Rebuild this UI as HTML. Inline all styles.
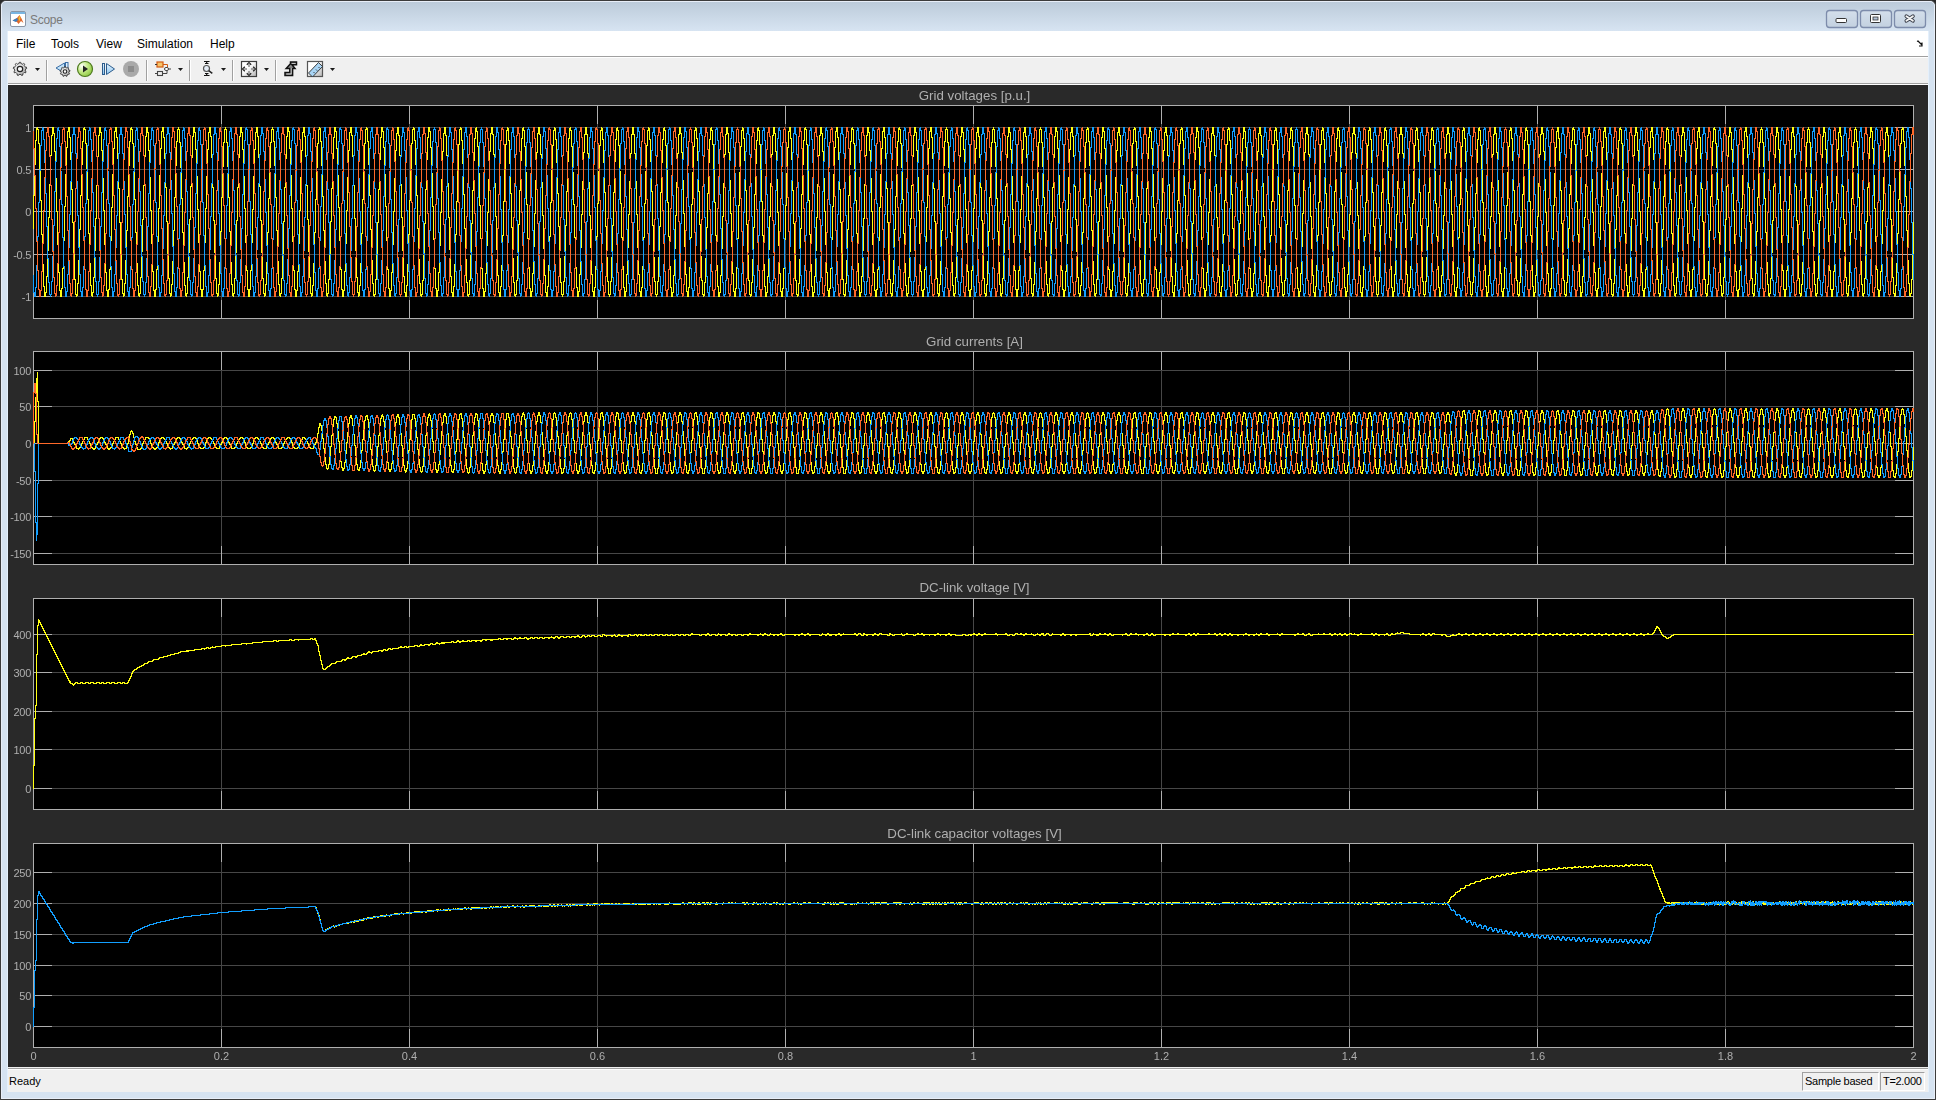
<!DOCTYPE html>
<html><head><meta charset="utf-8"><style>
*{margin:0;padding:0;box-sizing:border-box}
body{width:1936px;height:1100px;overflow:hidden;position:relative;background:#2a2a2a;font-family:"Liberation Sans",sans-serif}
.abs{position:absolute}
.ttl{will-change:transform;position:absolute;left:34px;width:1881px;text-align:center;font-size:13.3px;color:#afafaf;line-height:16px;height:16px}
.yt{will-change:transform;position:absolute;left:0;width:31px;text-align:right;font-size:11px;color:#afafaf;line-height:14px;letter-spacing:-0.3px}
.xt{will-change:transform;position:absolute;top:1049px;width:61px;text-align:center;font-size:11px;color:#afafaf;line-height:14px}
.menu{position:absolute;top:37px;font-size:12px;line-height:15px;color:#000}
svg{position:absolute;left:0;top:0}
</style></head><body>
<div class="abs" style="left:0;top:0;width:1936px;height:1100px;border:1px solid #3c3c3c;border-radius:6px 6px 0 0;background:#d6e3f1"></div>
<div class="abs" style="left:1px;top:1px;width:1934px;height:1098px;border:1px solid #e8eef8;border-radius:5px 5px 0 0"></div>
<div class="abs" style="left:2px;top:2px;width:1932px;height:29px;border-radius:4px 4px 0 0;background:linear-gradient(#bccbda,#d7e4f2)"></div>
<div class="abs" style="left:7px;top:31px;width:1922px;height:1061px;background:#e4f0fc"></div>
<div class="abs" style="left:8px;top:31px;width:1920px;height:25px;background:#fff"></div>
<div class="abs" style="left:8px;top:56px;width:1920px;height:1px;background:#a0a0a0"></div>
<div class="abs" style="left:8px;top:57px;width:1920px;height:26px;background:#f0f0f0;border-top:1px solid #fff"></div>
<div class="abs" style="left:8px;top:83px;width:1920px;height:1px;background:#a0a0a0"></div>
<div class="abs" style="left:8px;top:84px;width:1920px;height:1px;background:#ffffff"></div>
<div class="abs" style="left:8px;top:85px;width:1920px;height:982px;background:#292929"></div>
<div class="abs" style="left:8px;top:1067px;width:1920px;height:1px;background:#f0f0f0"></div>
<div class="abs" style="left:8px;top:1068px;width:1920px;height:1px;background:#a0a0a0"></div>
<div class="abs" style="left:8px;top:1069px;width:1920px;height:1px;background:#fff"></div>
<div class="abs" style="left:8px;top:1070px;width:1920px;height:22px;background:#f0f0f0"></div>
<div class="abs" style="left:30px;top:13px;font-size:12px;color:#7a7a7a;line-height:15px;letter-spacing:-0.3px">Scope</div>
<div class="menu" style="left:16px">File</div>
<div class="menu" style="left:51px">Tools</div>
<div class="menu" style="left:96px">View</div>
<div class="menu" style="left:137px">Simulation</div>
<div class="menu" style="left:210px">Help</div>
<div class="abs" style="left:9px;top:1074px;font-size:11px;line-height:14px">Ready</div>
<div class="abs" style="left:1802px;top:1072px;width:77px;height:19px;border-top:1px solid #a0a0a0;border-left:1px solid #a0a0a0;border-bottom:1px solid #fff;border-right:1px solid #fff;font-size:11px;line-height:16px;padding-left:2px;letter-spacing:-0.25px">Sample based</div>
<div class="abs" style="left:1880px;top:1072px;width:45px;height:19px;border-top:1px solid #a0a0a0;border-left:1px solid #a0a0a0;border-bottom:1px solid #fff;border-right:1px solid #fff;font-size:11px;line-height:16px;padding-left:2px;letter-spacing:-0.3px">T=2.000</div>
<svg width="1936" height="100" style="position:absolute;left:0;top:0"><defs><linearGradient id="gg" x1="0" y1="0" x2="1" y2="1"><stop offset="0" stop-color="#ffffff"/><stop offset="0.5" stop-color="#d8d8d8"/><stop offset="1" stop-color="#9a9a9a"/></linearGradient><radialGradient id="pg" cx="0.3" cy="0.3" r="0.8"><stop offset="0" stop-color="#ffffff"/><stop offset="0.45" stop-color="#c6eb8a"/><stop offset="1" stop-color="#8cc63f"/></radialGradient><linearGradient id="bg1" x1="0" y1="0" x2="0" y2="1"><stop offset="0" stop-color="#e6f4ff"/><stop offset="1" stop-color="#8cc4ee"/></linearGradient><linearGradient id="wg" x1="0" y1="0" x2="1" y2="1"><stop offset="0.4" stop-color="#ffffff"/><stop offset="1" stop-color="#b4b4b4"/></linearGradient></defs><path d="M18.12 63.83 L19.16 63.56 L19.25 62.34 L20.75 62.34 L20.84 63.56 L21.89 63.83 L22.85 64.30 L23.71 63.42 L24.85 64.38 L24.14 65.38 L24.77 66.25 L25.21 67.23 L26.43 67.11 L26.69 68.58 L25.50 68.88 L25.42 69.96 L25.13 70.99 L26.14 71.68 L25.39 72.98 L24.29 72.45 L23.53 73.22 L22.65 73.82 L22.98 75.00 L21.58 75.51 L21.07 74.40 L19.99 74.50 L18.93 74.40 L18.42 75.51 L17.02 75.00 L17.35 73.82 L16.46 73.21 L15.71 72.45 L14.61 72.98 L13.86 71.68 L14.87 70.99 L14.58 69.95 L14.50 68.88 L13.31 68.58 L13.57 67.11 L14.79 67.23 L15.24 66.25 L15.86 65.38 L15.15 64.38 L16.29 63.42 L17.15 64.30Z" fill="url(#gg)" stroke="#333" stroke-width="0.9" stroke-linejoin="round"/><circle cx="20" cy="69" r="2.7" fill="#fafafa" stroke="#222" stroke-width="1.2"/><path d="M35 68h5l-2.5 3z" fill="#1a1a1a"/><path d="M178 68h5l-2.5 3z" fill="#1a1a1a"/><path d="M221 68h5l-2.5 3z" fill="#1a1a1a"/><path d="M264 68h5l-2.5 3z" fill="#1a1a1a"/><path d="M330 68h5l-2.5 3z" fill="#1a1a1a"/><rect x="46" y="60" width="1" height="21" fill="#a0a0a0"/><rect x="47" y="60" width="1" height="21" fill="#ffffff"/><rect x="146" y="60" width="1" height="21" fill="#a0a0a0"/><rect x="147" y="60" width="1" height="21" fill="#ffffff"/><rect x="189" y="60" width="1" height="21" fill="#a0a0a0"/><rect x="190" y="60" width="1" height="21" fill="#ffffff"/><rect x="232" y="60" width="1" height="21" fill="#a0a0a0"/><rect x="233" y="60" width="1" height="21" fill="#ffffff"/><rect x="275" y="60" width="1" height="21" fill="#a0a0a0"/><rect x="276" y="60" width="1" height="21" fill="#ffffff"/><path d="M56 68 L64.5 63 L64.5 73 Z" fill="#c4e4fb" stroke="#3a6ea5" stroke-width="1" stroke-linejoin="round"/><rect x="65.5" y="62.5" width="2.5" height="8" fill="#dff0fc" stroke="#3a6ea5" stroke-width="1"/><path d="M63.64 67.74 L64.39 67.55 L64.44 66.53 L65.56 66.53 L65.61 67.55 L66.37 67.74 L67.07 68.08 L67.77 67.34 L68.62 68.05 L68.01 68.87 L68.47 69.50 L68.79 70.21 L69.80 70.09 L69.99 71.19 L69.00 71.42 L68.94 72.20 L68.73 72.95 L69.58 73.50 L69.02 74.47 L68.12 74.01 L67.57 74.57 L66.93 75.01 L67.22 75.98 L66.18 76.36 L65.78 75.42 L65.00 75.50 L64.22 75.42 L63.82 76.36 L62.78 75.98 L63.07 75.01 L62.43 74.56 L61.88 74.01 L60.98 74.47 L60.42 73.50 L61.27 72.95 L61.06 72.19 L61.00 71.42 L60.01 71.19 L60.20 70.09 L61.21 70.21 L61.54 69.50 L61.99 68.87 L61.38 68.05 L62.23 67.34 L62.93 68.08Z" fill="url(#gg)" stroke="#333" stroke-width="0.9" stroke-linejoin="round"/><circle cx="65" cy="71.5" r="1.8" fill="#fafafa" stroke="#222" stroke-width="1.1"/><circle cx="85" cy="69" r="7.5" fill="url(#pg)" stroke="#4d7a1e" stroke-width="1.2"/><path d="M83 65.5 L88 69 L83 72.5Z" fill="#222"/><rect x="102.5" y="63.5" width="2" height="11" fill="url(#bg1)" stroke="#2c5c8c" stroke-width="1"/><path d="M106.5 63.5 L114.5 69 L106.5 74.5Z" fill="url(#bg1)" stroke="#2c5c8c" stroke-width="1"/><circle cx="131" cy="69" r="8" fill="#a9a9a9"/><rect x="128" y="66" width="6" height="6" fill="#8c8c8c"/><rect x="157" y="62" width="6" height="5" fill="#f6c46a" stroke="#d35a12" stroke-width="1.2"/><path d="M155 64.5h2 M163 64.5h4.5v3" stroke="#d35a12" stroke-width="1" fill="none"/><path d="M155 64.5h2" stroke="#333" stroke-width="1"/><rect x="164.5" y="67.5" width="4" height="3" rx="1.5" fill="#fff" stroke="#444" stroke-width="1"/><path d="M168.5 69h2.5" stroke="#444" stroke-width="1"/><rect x="157.5" y="71.5" width="5" height="4" fill="#eee" stroke="#444" stroke-width="1.1"/><path d="M155 73.5h2.5 M162.5 73.5h4.5v-3" stroke="#444" stroke-width="1" fill="none"/><path d="M204 61.5h5.5 M205 63.5h3.5 M206.7 61.5v2 M204 75.5h5.5 M205 73.5h3.5 M206.7 73.5v2" stroke="#111" stroke-width="1.2" fill="none"/><circle cx="206.5" cy="68.5" r="3" fill="#e4ecf6" stroke="#555" stroke-width="1.2"/><path d="M208.7 70.7 L212.3 73.3" stroke="#222" stroke-width="1.5"/><rect x="241.5" y="61.5" width="15" height="15" fill="url(#wg)" stroke="#3c3c3c" stroke-width="1.2"/><path d="M246.8 64.8l2.2-2.2 2.2 2.2 M246.8 73.2l2.2 2.2 2.2-2.2 M244.8 66.8l-2.2 2.2 2.2 2.2 M253.2 66.8l2.2 2.2-2.2 2.2" stroke="#222" stroke-width="1.3" fill="none"/><path d="M249 63.5v3.5 M249 71v3.5 M243.5 69h3.5 M251 69h3.5" stroke="#8a8a8a" stroke-width="1.5"/><path d="M285 75.5 L285 72.5 L289.8 72.5 L289.8 68.5 L286.2 68.5 L290.5 63.8 L290.5 62 L296.5 62 L296.5 64.8 L292 64.8 L295 68.5 L292.6 68.5 L292.6 75.5 Z" fill="#8a8a8a" stroke="#111" stroke-width="1.5" stroke-linejoin="miter"/><path d="M286.5 74h4.7v-6 M292 63.5h3.5" stroke="#d0d0d0" stroke-width="0.8" fill="none"/><rect x="307.5" y="61.5" width="15" height="15" fill="url(#wg)" stroke="#555" stroke-width="1.2"/><path d="M308.5 73 L318.5 62.5 L322.5 66.5 L312.5 77 Z" fill="#a8d4f4" stroke="#2a2a2a" stroke-width="0.9"/><path d="M313.5 72l1.2 1.2 M316 69.5l1.2 1.2 M318.5 67l1.2 1.2" stroke="#333" stroke-width="0.9"/><path d="M1917 41.5 L1918 41 L1922 45 M1922 42.5 L1922 46 L1919 46" stroke="#111" stroke-width="1.2" fill="none"/><rect x="1826.5" y="10.5" width="31" height="17" rx="3" fill="url(#btng)" stroke="#7d8cab" stroke-width="1.3"/><rect x="1860.5" y="10.5" width="31" height="17" rx="3" fill="url(#btng)" stroke="#7d8cab" stroke-width="1.3"/><rect x="1894.5" y="10.5" width="31" height="17" rx="3" fill="url(#btng)" stroke="#7d8cab" stroke-width="1.3"/><rect x="1836" y="18.5" width="10.5" height="4" rx="1" fill="#fff" stroke="#333" stroke-width="1"/><rect x="1870.5" y="14.5" width="10" height="8" rx="1" fill="#fff" stroke="#333" stroke-width="1"/><rect x="1873" y="17" width="5" height="3" fill="#b4c4d8" stroke="#333" stroke-width="0.8"/><path d="M1906.4 16.2 L1912.9 20.8 M1912.9 16.2 L1906.4 20.8" stroke="#3a3f4a" stroke-width="3.8" stroke-linecap="round"/><path d="M1906.4 16.2 L1912.9 20.8 M1912.9 16.2 L1906.4 20.8" stroke="#f4f4f4" stroke-width="1.9" stroke-linecap="round"/><defs><linearGradient id="btng" x1="0" y1="0" x2="0" y2="1"><stop offset="0" stop-color="#d4dfeb"/><stop offset="1" stop-color="#c3d1e0"/></linearGradient></defs><rect x="10.5" y="11.5" width="15" height="15" rx="1.5" fill="#fff" stroke="#8a96a6" stroke-width="1"/><rect x="11" y="12" width="14" height="2" fill="#7ab6e2"/><path d="M12.5 20.5 L17 18 L19.5 15 L21.5 18.5 L23.5 23 L21 21 L18.5 24 L17 22 Z" fill="#e0662a"/><path d="M12.5 20.5 L17 18 L18 20 L16 22 Z" fill="#3b7fc0"/><path d="M19.5 15.5 L20.5 18 L19 22 L18.5 18 Z" fill="#f2c12e"/></svg><svg width="1936" height="1100" viewBox="0 0 1936 1100">
<defs><clipPath id="c1"><rect x="34" y="106" width="1879" height="212"/></clipPath><clipPath id="c2"><rect x="34" y="352" width="1879" height="212"/></clipPath><clipPath id="c3"><rect x="34" y="599" width="1879" height="210"/></clipPath><clipPath id="c4"><rect x="34" y="844" width="1879" height="203"/></clipPath></defs>
<g shape-rendering="crispEdges"><rect x="33" y="105" width="1881" height="214" fill="#000"/><rect x="34" y="127" width="1879" height="1" fill="#474747"/><rect x="34" y="169" width="1879" height="1" fill="#474747"/><rect x="34" y="211" width="1879" height="1" fill="#474747"/><rect x="34" y="254" width="1879" height="1" fill="#474747"/><rect x="34" y="296" width="1879" height="1" fill="#474747"/><rect x="221" y="106" width="1" height="212" fill="#474747"/><rect x="409" y="106" width="1" height="212" fill="#474747"/><rect x="597" y="106" width="1" height="212" fill="#474747"/><rect x="785" y="106" width="1" height="212" fill="#474747"/><rect x="973" y="106" width="1" height="212" fill="#474747"/><rect x="1161" y="106" width="1" height="212" fill="#474747"/><rect x="1349" y="106" width="1" height="212" fill="#474747"/><rect x="1537" y="106" width="1" height="212" fill="#474747"/><rect x="1725" y="106" width="1" height="212" fill="#474747"/><rect x="34" y="127" width="18" height="1" fill="#afafaf"/><rect x="1895" y="127" width="18" height="1" fill="#afafaf"/><rect x="34" y="169" width="18" height="1" fill="#afafaf"/><rect x="1895" y="169" width="18" height="1" fill="#afafaf"/><rect x="34" y="211" width="18" height="1" fill="#afafaf"/><rect x="1895" y="211" width="18" height="1" fill="#afafaf"/><rect x="34" y="254" width="18" height="1" fill="#afafaf"/><rect x="1895" y="254" width="18" height="1" fill="#afafaf"/><rect x="34" y="296" width="18" height="1" fill="#afafaf"/><rect x="1895" y="296" width="18" height="1" fill="#afafaf"/><rect x="221" y="106" width="1" height="18" fill="#afafaf"/><rect x="221" y="300" width="1" height="18" fill="#afafaf"/><rect x="409" y="106" width="1" height="18" fill="#afafaf"/><rect x="409" y="300" width="1" height="18" fill="#afafaf"/><rect x="597" y="106" width="1" height="18" fill="#afafaf"/><rect x="597" y="300" width="1" height="18" fill="#afafaf"/><rect x="785" y="106" width="1" height="18" fill="#afafaf"/><rect x="785" y="300" width="1" height="18" fill="#afafaf"/><rect x="973" y="106" width="1" height="18" fill="#afafaf"/><rect x="973" y="300" width="1" height="18" fill="#afafaf"/><rect x="1161" y="106" width="1" height="18" fill="#afafaf"/><rect x="1161" y="300" width="1" height="18" fill="#afafaf"/><rect x="1349" y="106" width="1" height="18" fill="#afafaf"/><rect x="1349" y="300" width="1" height="18" fill="#afafaf"/><rect x="1537" y="106" width="1" height="18" fill="#afafaf"/><rect x="1537" y="300" width="1" height="18" fill="#afafaf"/><rect x="1725" y="106" width="1" height="18" fill="#afafaf"/><rect x="1725" y="300" width="1" height="18" fill="#afafaf"/><rect x="33" y="105" width="1881" height="1" fill="#afafaf"/><rect x="33" y="318" width="1881" height="1" fill="#afafaf"/><rect x="33" y="105" width="1" height="214" fill="#afafaf"/><rect x="1913" y="105" width="1" height="214" fill="#afafaf"/><rect x="33" y="351" width="1881" height="214" fill="#000"/><rect x="34" y="370" width="1879" height="1" fill="#474747"/><rect x="34" y="406" width="1879" height="1" fill="#474747"/><rect x="34" y="443" width="1879" height="1" fill="#474747"/><rect x="34" y="480" width="1879" height="1" fill="#474747"/><rect x="34" y="516" width="1879" height="1" fill="#474747"/><rect x="34" y="553" width="1879" height="1" fill="#474747"/><rect x="221" y="352" width="1" height="212" fill="#474747"/><rect x="409" y="352" width="1" height="212" fill="#474747"/><rect x="597" y="352" width="1" height="212" fill="#474747"/><rect x="785" y="352" width="1" height="212" fill="#474747"/><rect x="973" y="352" width="1" height="212" fill="#474747"/><rect x="1161" y="352" width="1" height="212" fill="#474747"/><rect x="1349" y="352" width="1" height="212" fill="#474747"/><rect x="1537" y="352" width="1" height="212" fill="#474747"/><rect x="1725" y="352" width="1" height="212" fill="#474747"/><rect x="34" y="370" width="18" height="1" fill="#afafaf"/><rect x="1895" y="370" width="18" height="1" fill="#afafaf"/><rect x="34" y="406" width="18" height="1" fill="#afafaf"/><rect x="1895" y="406" width="18" height="1" fill="#afafaf"/><rect x="34" y="443" width="18" height="1" fill="#afafaf"/><rect x="1895" y="443" width="18" height="1" fill="#afafaf"/><rect x="34" y="480" width="18" height="1" fill="#afafaf"/><rect x="1895" y="480" width="18" height="1" fill="#afafaf"/><rect x="34" y="516" width="18" height="1" fill="#afafaf"/><rect x="1895" y="516" width="18" height="1" fill="#afafaf"/><rect x="34" y="553" width="18" height="1" fill="#afafaf"/><rect x="1895" y="553" width="18" height="1" fill="#afafaf"/><rect x="221" y="352" width="1" height="18" fill="#afafaf"/><rect x="221" y="546" width="1" height="18" fill="#afafaf"/><rect x="409" y="352" width="1" height="18" fill="#afafaf"/><rect x="409" y="546" width="1" height="18" fill="#afafaf"/><rect x="597" y="352" width="1" height="18" fill="#afafaf"/><rect x="597" y="546" width="1" height="18" fill="#afafaf"/><rect x="785" y="352" width="1" height="18" fill="#afafaf"/><rect x="785" y="546" width="1" height="18" fill="#afafaf"/><rect x="973" y="352" width="1" height="18" fill="#afafaf"/><rect x="973" y="546" width="1" height="18" fill="#afafaf"/><rect x="1161" y="352" width="1" height="18" fill="#afafaf"/><rect x="1161" y="546" width="1" height="18" fill="#afafaf"/><rect x="1349" y="352" width="1" height="18" fill="#afafaf"/><rect x="1349" y="546" width="1" height="18" fill="#afafaf"/><rect x="1537" y="352" width="1" height="18" fill="#afafaf"/><rect x="1537" y="546" width="1" height="18" fill="#afafaf"/><rect x="1725" y="352" width="1" height="18" fill="#afafaf"/><rect x="1725" y="546" width="1" height="18" fill="#afafaf"/><rect x="33" y="351" width="1881" height="1" fill="#afafaf"/><rect x="33" y="564" width="1881" height="1" fill="#afafaf"/><rect x="33" y="351" width="1" height="214" fill="#afafaf"/><rect x="1913" y="351" width="1" height="214" fill="#afafaf"/><rect x="33" y="598" width="1881" height="212" fill="#000"/><rect x="34" y="634" width="1879" height="1" fill="#474747"/><rect x="34" y="672" width="1879" height="1" fill="#474747"/><rect x="34" y="711" width="1879" height="1" fill="#474747"/><rect x="34" y="749" width="1879" height="1" fill="#474747"/><rect x="34" y="788" width="1879" height="1" fill="#474747"/><rect x="221" y="599" width="1" height="210" fill="#474747"/><rect x="409" y="599" width="1" height="210" fill="#474747"/><rect x="597" y="599" width="1" height="210" fill="#474747"/><rect x="785" y="599" width="1" height="210" fill="#474747"/><rect x="973" y="599" width="1" height="210" fill="#474747"/><rect x="1161" y="599" width="1" height="210" fill="#474747"/><rect x="1349" y="599" width="1" height="210" fill="#474747"/><rect x="1537" y="599" width="1" height="210" fill="#474747"/><rect x="1725" y="599" width="1" height="210" fill="#474747"/><rect x="34" y="634" width="18" height="1" fill="#afafaf"/><rect x="1895" y="634" width="18" height="1" fill="#afafaf"/><rect x="34" y="672" width="18" height="1" fill="#afafaf"/><rect x="1895" y="672" width="18" height="1" fill="#afafaf"/><rect x="34" y="711" width="18" height="1" fill="#afafaf"/><rect x="1895" y="711" width="18" height="1" fill="#afafaf"/><rect x="34" y="749" width="18" height="1" fill="#afafaf"/><rect x="1895" y="749" width="18" height="1" fill="#afafaf"/><rect x="34" y="788" width="18" height="1" fill="#afafaf"/><rect x="1895" y="788" width="18" height="1" fill="#afafaf"/><rect x="221" y="599" width="1" height="18" fill="#afafaf"/><rect x="221" y="791" width="1" height="18" fill="#afafaf"/><rect x="409" y="599" width="1" height="18" fill="#afafaf"/><rect x="409" y="791" width="1" height="18" fill="#afafaf"/><rect x="597" y="599" width="1" height="18" fill="#afafaf"/><rect x="597" y="791" width="1" height="18" fill="#afafaf"/><rect x="785" y="599" width="1" height="18" fill="#afafaf"/><rect x="785" y="791" width="1" height="18" fill="#afafaf"/><rect x="973" y="599" width="1" height="18" fill="#afafaf"/><rect x="973" y="791" width="1" height="18" fill="#afafaf"/><rect x="1161" y="599" width="1" height="18" fill="#afafaf"/><rect x="1161" y="791" width="1" height="18" fill="#afafaf"/><rect x="1349" y="599" width="1" height="18" fill="#afafaf"/><rect x="1349" y="791" width="1" height="18" fill="#afafaf"/><rect x="1537" y="599" width="1" height="18" fill="#afafaf"/><rect x="1537" y="791" width="1" height="18" fill="#afafaf"/><rect x="1725" y="599" width="1" height="18" fill="#afafaf"/><rect x="1725" y="791" width="1" height="18" fill="#afafaf"/><rect x="33" y="598" width="1881" height="1" fill="#afafaf"/><rect x="33" y="809" width="1881" height="1" fill="#afafaf"/><rect x="33" y="598" width="1" height="212" fill="#afafaf"/><rect x="1913" y="598" width="1" height="212" fill="#afafaf"/><rect x="33" y="843" width="1881" height="205" fill="#000"/><rect x="34" y="872" width="1879" height="1" fill="#474747"/><rect x="34" y="903" width="1879" height="1" fill="#474747"/><rect x="34" y="934" width="1879" height="1" fill="#474747"/><rect x="34" y="965" width="1879" height="1" fill="#474747"/><rect x="34" y="995" width="1879" height="1" fill="#474747"/><rect x="34" y="1026" width="1879" height="1" fill="#474747"/><rect x="221" y="844" width="1" height="203" fill="#474747"/><rect x="409" y="844" width="1" height="203" fill="#474747"/><rect x="597" y="844" width="1" height="203" fill="#474747"/><rect x="785" y="844" width="1" height="203" fill="#474747"/><rect x="973" y="844" width="1" height="203" fill="#474747"/><rect x="1161" y="844" width="1" height="203" fill="#474747"/><rect x="1349" y="844" width="1" height="203" fill="#474747"/><rect x="1537" y="844" width="1" height="203" fill="#474747"/><rect x="1725" y="844" width="1" height="203" fill="#474747"/><rect x="34" y="872" width="18" height="1" fill="#afafaf"/><rect x="1895" y="872" width="18" height="1" fill="#afafaf"/><rect x="34" y="903" width="18" height="1" fill="#afafaf"/><rect x="1895" y="903" width="18" height="1" fill="#afafaf"/><rect x="34" y="934" width="18" height="1" fill="#afafaf"/><rect x="1895" y="934" width="18" height="1" fill="#afafaf"/><rect x="34" y="965" width="18" height="1" fill="#afafaf"/><rect x="1895" y="965" width="18" height="1" fill="#afafaf"/><rect x="34" y="995" width="18" height="1" fill="#afafaf"/><rect x="1895" y="995" width="18" height="1" fill="#afafaf"/><rect x="34" y="1026" width="18" height="1" fill="#afafaf"/><rect x="1895" y="1026" width="18" height="1" fill="#afafaf"/><rect x="221" y="844" width="1" height="18" fill="#afafaf"/><rect x="221" y="1029" width="1" height="18" fill="#afafaf"/><rect x="409" y="844" width="1" height="18" fill="#afafaf"/><rect x="409" y="1029" width="1" height="18" fill="#afafaf"/><rect x="597" y="844" width="1" height="18" fill="#afafaf"/><rect x="597" y="1029" width="1" height="18" fill="#afafaf"/><rect x="785" y="844" width="1" height="18" fill="#afafaf"/><rect x="785" y="1029" width="1" height="18" fill="#afafaf"/><rect x="973" y="844" width="1" height="18" fill="#afafaf"/><rect x="973" y="1029" width="1" height="18" fill="#afafaf"/><rect x="1161" y="844" width="1" height="18" fill="#afafaf"/><rect x="1161" y="1029" width="1" height="18" fill="#afafaf"/><rect x="1349" y="844" width="1" height="18" fill="#afafaf"/><rect x="1349" y="1029" width="1" height="18" fill="#afafaf"/><rect x="1537" y="844" width="1" height="18" fill="#afafaf"/><rect x="1537" y="1029" width="1" height="18" fill="#afafaf"/><rect x="1725" y="844" width="1" height="18" fill="#afafaf"/><rect x="1725" y="1029" width="1" height="18" fill="#afafaf"/><rect x="33" y="843" width="1881" height="1" fill="#afafaf"/><rect x="33" y="1047" width="1881" height="1" fill="#afafaf"/><rect x="33" y="843" width="1" height="205" fill="#afafaf"/><rect x="1913" y="843" width="1" height="205" fill="#afafaf"/></g>
<g fill="none" stroke-width="1" shape-rendering="crispEdges"><path d="M33.5 195v34m1 -65v32m1 -56v25m1 -37v13m1 -14v3m1 -1v15m1 -1v26m1 -1v33m1 -1v35m1 -1v31m1 -1v23m1 -1v11m1 -5v5m1 -21v17m1 -43v27m1 -60v34m1 -67v34m1 -63v30m1 -50v21m1 -29v9m1 -9v7m1 -1v19m1 -1v28m1 -1v34m1 -1v34m1 -1v29m1 -1v19m1 -1v7m1 -9v9m1 -29v21m1 -49v29m1 -63v35m1 -67v33m1 -60v28m1 -44v17m1 -21v5m1 -5v11m1 -1v23m1 -1v31m1 -1v34m1 -1v33m1 -1v26m1 -1v16m1 -1v3m1 -14v13m1 -36v24m1 -55v32m1 -66v35m1 -66v32m1 -55v24m1 -37v14m1 -15v3m1 -1v15m1 -1v26m1 -1v32m1 -1v35m1 -1v31m1 -1v23m1 -1v11m1 -4v5m1 -20v16m1 -43v28m1 -60v33m1 -66v34m1 -63v30m1 -51v22m1 -30v9m1 -9v6m1 -1v19m1 -1v29m1 -1v33m1 -1v35m1 -1v29m1 -1v19m1 -1v7m1 -8v8m1 -28v21m1 -50v30m1 -63v34m1 -67v34m1 -60v27m1 -44v18m1 -22v5m1 -5v11m1 -1v22m1 -1v31m1 -1v35m1 -1v32m1 -1v27m1 -1v15m1 -1v4m1 -14v13m1 -36v24m1 -54v31m1 -65v35m1 -66v32m1 -56v25m1 -38v14m1 -15v3m1 -1v15m1 -1v25m1 -1v33m1 -1v34m1 -1v32m1 -1v23m1 -1v11m1 -3v4m1 -20v17m1 -43v27m1 -59v33m1 -67v35m1 -64v30m1 -50v21m1 -30v10m1 -10v6m1 -1v19m1 -1v28m1 -1v34m1 -1v34m1 -1v29m1 -1v20m1 -1v7m1 -8v8m1 -28v21m1 -49v29m1 -62v34m1 -67v34m1 -61v28m1 -45v18m1 -22v5m1 -5v11m1 -1v22m1 -1v30m1 -1v35m1 -1v33m1 -1v26m1 -1v16m1 -1v4m1 -13v12m1 -35v24m1 -55v32m1 -65v34m1 -66v33m1 -57v25m1 -37v13m1 -15v3m1 -1v14m1 -1v26m1 -1v32m1 -1v35m1 -1v31m1 -1v24m1 -1v11m1 -3v4m1 -20v17m1 -42v26m1 -59v34m1 -67v34m1 -63v30m1 -51v22m1 -31v10m1 -10v6m1 -1v18m1 -1v28m1 -1v34m1 -1v34m1 -1v30m1 -1v19m1 -1v8m1 -8v8m1 -27v20m1 -48v29m1 -63v35m1 -67v33m1 -60v28m1 -45v18m1 -23v6m1 -6v10m1 -1v22m1 -1v31m1 -1v34m1 -1v33m1 -1v27m1 -1v16m1 -1v4m1 -13v12m1 -34v23m1 -54v32m1 -66v35m1 -66v32m1 -56v25m1 -38v14m1 -16v3m1 -1v14m1 -1v25m1 -1v32m1 -1v35m1 -1v32m1 -1v23m1 -1v12m1 -3v4m1 -19v16m1 -42v27m1 -59v33m1 -66v34m1 -64v31m1 -52v22m1 -31v10m1 -10v6m1 -1v18m1 -1v28m1 -1v33m1 -1v35m1 -1v29m1 -1v20m1 -1v8m1 -8v8m1 -27v20m1 -48v29m1 -62v34m1 -67v34m1 -61v28m1 -45v18m1 -23v6m1 -6v10m1 -1v22m1 -1v30m1 -1v35m1 -1v33m1 -1v27m1 -1v16m1 -1v4m1 -13v12m1 -34v23m1 -53v31m1 -65v35m1 -66v32m1 -57v26m1 -39v14m1 -16v3m1 -1v13m1 -1v25m1 -1v33m1 -1v34m1 -1v32m1 -1v24m1 -1v12m1 -3v4m1 -19v16m1 -41v26m1 -58v33m1 -67v35m1 -64v30m1 -52v23m1 -32v10m1 -10v5m1 -1v18m1 -1v28m1 -1v34m1 -1v34m1 -1v30m1 -1v20m1 -1v8m1 -7v7m1 -26v20m1 -48v29m1 -62v34m1 -67v34m1 -61v28m1 -46v19m1 -24v6m1 -6v10m1 -1v21m1 -1v30m1 -1v35m1 -1v33m1 -1v27m1 -1v17m1 -1v4m1 -12v11m1 -33v23m1 -54v32m1 -65v34m1 -66v33m1 -57v25m1 -39v15m1 -17v3m1 -2v14m1 -1v25m1 -1v32m1 -1v35m1 -1v32m1 -1v23m1 -1v13m1 -3v4m1 -18v15m1 -41v27m1 -59v33m1 -66v34m1 -64v31m1 -52v22m1 -32v11m1 -11v5m1 -1v18m1 -1v28m1 -1v33m1 -1v34m1 -1v30m1 -1v21m1 -1v8m1 -7v7m1 -26v20m1 -48v29m1 -62v34m1 -67v34m1 -61v28m1 -46v19m1 -24v6m1 -6v9m1 -1v22m1 -1v30m1 -1v34m1 -1v33m1 -1v28m1 -1v16m1 -1v5m1 -12v11m1 -33v23m1 -53v31m1 -65v35m1 -66v32m1 -57v26m1 -40v15m1 -17v3m1 -2v14m1 -1v24m1 -1v32m1 -1v35m1 -1v32m1 -1v24m1 -1v13m1 -2v3m1 -18v16m1 -41v26m1 -58v33m1 -66v34m1 -64v31m1 -53v23m1 -33v11m1 -11v5m1 -1v17m1 -1v28m1 -1v33m1 -1v35m1 -1v30m1 -1v20m1 -1v9m1 -7v7m1 -25v19m1 -47v29m1 -62v34m1 -67v34m1 -62v29m1 -46v18m1 -24v7m1 -7v9m1 -1v21m1 -1v30m1 -1v34m1 -1v34m1 -1v27m1 -1v17m1 -1v5m1 -12v12m1 -33v22m1 -52v31m1 -65v35m1 -67v33m1 -58v26m1 -40v15m1 -17v3m1 -2v13m1 -1v25m1 -1v32m1 -1v34m1 -1v32m1 -1v25m1 -1v13m1 -2v3m1 -17v15m1 -40v26m1 -58v33m1 -67v35m1 -65v31m1 -53v23m1 -33v11m1 -11v5m1 -1v17m1 -1v27m1 -1v34m1 -1v34m1 -1v30m1 -1v21m1 -1v9m1 -7v7m1 -25v19m1 -46v28m1 -61v34m1 -67v34m1 -62v29m1 -47v19m1 -25v7m1 -7v9m1 -1v21m1 -1v29m1 -1v35m1 -1v33m1 -1v28m1 -1v17m1 -1v5m1 -11v11m1 -33v23m1 -53v31m1 -64v34m1 -66v33m1 -58v26m1 -41v16m1 -18v3m1 -2v13m1 -1v24m1 -1v32m1 -1v35m1 -1v32m1 -1v24m1 -1v14m1 -2v3m1 -17v15m1 -40v26m1 -58v33m1 -66v34m1 -64v31m1 -53v23m1 -33v11m1 -12v5m1 -1v16m1 -1v28m1 -1v33m1 -1v34m1 -1v31m1 -1v21m1 -1v9m1 -6v6m1 -24v19m1 -47v29m1 -62v34m1 -67v34m1 -62v29m1 -47v19m1 -25v7m1 -7v8m1 -1v21m1 -1v30m1 -1v34m1 -1v34m1 -1v27m1 -1v18m1 -1v5m1 -11v11m1 -32v22m1 -52v31m1 -65v35m1 -67v33m1 -58v26m1 -40v15m1 -18v4m1 -3v13m1 -1v24m1 -1v31m1 -1v35m1 -1v32m1 -1v25m1 -1v14m1 -2v3m1 -17v15m1 -39v25m1 -57v33m1 -67v35m1 -65v31m1 -53v23m1 -33v11m1 -12v4m1 -1v17m1 -1v27m1 -1v33m1 -1v35m1 -1v30m1 -1v22m1 -1v9m1 -6v6m1 -24v19m1 -46v28m1 -61v34m1 -67v34m1 -62v29m1 -48v20m1 -26v7m1 -7v8m1 -1v21m1 -1v29m1 -1v34m1 -1v34m1 -1v28m1 -1v18m1 -1v5m1 -11v11m1 -32v22m1 -51v30m1 -64v35m1 -67v33m1 -58v26m1 -41v16m1 -19v4m1 -3v12m1 -1v24m1 -1v32m1 -1v34m1 -1v33m1 -1v25m1 -1v13m1 -1v3m1 -16v14m1 -39v26m1 -57v32m1 -66v35m1 -65v31m1 -54v24m1 -34v11m1 -12v4m1 -1v17m1 -1v27m1 -1v33m1 -1v34m1 -1v31m1 -1v21m1 -1v10m1 -6v6m1 -23v18m1 -45v28m1 -61v34m1 -67v34m1 -63v30m1 -48v19m1 -26v8m1 -8v8m1 -1v20m1 -1v30m1 -1v34m1 -1v33m1 -1v28m1 -1v18m1 -1v6m1 -10v10m1 -31v22m1 -52v31m1 -64v34m1 -66v33m1 -59v27m1 -42v16m1 -19v4m1 -3v12m1 -1v24m1 -1v31m1 -1v35m1 -1v32m1 -1v25m1 -1v14m1 -1v3m1 -16v14m1 -38v25m1 -57v33m1 -66v34m1 -65v32m1 -54v23m1 -34v12m1 -13v4m1 -1v16m1 -1v27m1 -1v33m1 -1v35m1 -1v30m1 -1v22m1 -1v10m1 -6v6m1 -23v18m1 -45v28m1 -61v34m1 -67v34m1 -62v29m1 -48v20m1 -27v8m1 -8v8m1 -1v20m1 -1v29m1 -1v34m1 -1v34m1 -1v28m1 -1v18m1 -1v6m1 -10v10m1 -31v22m1 -51v30m1 -64v35m1 -67v33m1 -59v27m1 -42v16m1 -19v4m1 -3v12m1 -1v23m1 -1v31m1 -1v35m1 -1v33m1 -1v25m1 -1v14m1 -1v3m1 -16v14m1 -38v25m1 -56v32m1 -66v35m1 -65v31m1 -54v24m1 -35v12m1 -13v4m1 -1v16m1 -1v26m1 -1v33m1 -1v35m1 -1v31m1 -1v22m1 -1v10m1 -5v5m1 -22v18m1 -45v28m1 -61v34m1 -67v34m1 -63v30m1 -49v20m1 -27v8m1 -8v7m1 -1v20m1 -1v29m1 -1v34m1 -1v34m1 -1v29m1 -1v18m1 -1v6m1 -10v10m1 -30v21m1 -51v31m1 -64v34m1 -66v33m1 -59v27m1 -43v17m1 -20v4m1 -3v11m1 -1v23m1 -1v32m1 -1v34m1 -1v33m1 -1v25m1 -1v15m1 -1v3m1 -15v14m1 -38v25m1 -56v32m1 -66v35m1 -66v32m1 -55v24m1 -35v12m1 -13v4m1 -1v15m1 -1v27m1 -1v33m1 -1v34m1 -1v31m1 -1v22m1 -1v11m1 -5v5m1 -22v18m1 -45v28m1 -60v33m1 -66v34m1 -63v30m1 -50v21m1 -28v8m1 -8v7m1 -1v20m1 -1v29m1 -1v34m1 -1v34m1 -1v28m1 -1v19m1 -1v6m1 -9v9m1 -30v22m1 -51v30m1 -63v34m1 -67v34m1 -60v27m1 -43v17m1 -20v4m1 -3v11m1 -1v23m1 -1v31m1 -1v35m1 -1v32m1 -1v26m1 -1v15m1 -1v3m1 -15v14m1 -37v24m1 -56v33m1 -66v34m1 -65v32m1 -55v24m1 -36v13m1 -14v4m1 -1v15m1 -1v26m1 -1v33m1 -1v35m1 -1v30m1 -1v23m1 -1v11m1 -5v5m1 -21v17m1 -44v28m1 -61v34m1 -67v34m1 -63v30m1 -49v20m1 -28v9m1 -9v7m1 -1v19m1 -1v29m1 -1v34m1 -1v34m1 -1v29m1 -1v19m1 -1v6m1 -9v9m1 -29v21m1 -50v30m1 -64v35m1 -67v33m1 -59v27m1 -43v17m1 -21v5m1 -5v12m1 -1v22m1 -1v32m1 -1v34m1 -1v33m1 -1v26m1 -1v15m1 -1v3m1 -14v13m1 -37v25m1 -56v32m1 -66v35m1 -65v31m1 -55v25m1 -37v13m1 -14v3m1 -1v16m1 -1v26m1 -1v32m1 -1v35m1 -1v31m1 -1v23m1 -1v11m1 -5v5m1 -21v17m1 -43v27m1 -60v34m1 -67v34m1 -63v30m1 -50v21m1 -29v9m1 -9v7m1 -1v19m1 -1v28m1 -1v34m1 -1v34m1 -1v29m1 -1v19m1 -1v7m1 -9v9m1 -29v21m1 -50v30m1 -63v34m1 -66v33m1 -60v28m1 -44v17m1 -21v5m1 -5v11m1 -1v23m1 -1v31m1 -1v34m1 -1v33m1 -1v26m1 -1v16m1 -1v3m1 -14v13m1 -36v24m1 -55v32m1 -66v35m1 -66v32m1 -55v24m1 -37v14m1 -15v3m1 -1v15m1 -1v26m1 -1v33m1 -1v34m1 -1v31m1 -1v23m1 -1v12m1 -5v5m1 -21v17m1 -43v27m1 -59v33m1 -67v35m1 -64v30m1 -50v21m1 -29v9m1 -9v6m1 -1v19m1 -1v29m1 -1v34m1 -1v34m1 -1v29m1 -1v19m1 -1v7m1 -8v8m1 -28v21m1 -50v30m1 -63v34m1 -67v34m1 -60v27m1 -44v18m1 -22v5m1 -5v11m1 -1v22m1 -1v31m1 -1v35m1 -1v33m1 -1v26m1 -1v15m1 -1v4m1 -14v13m1 -36v24m1 -55v32m1 -65v34m1 -65v32m1 -56v25m1 -38v14m1 -15v3m1 -1v15m1 -1v25m1 -1v33m1 -1v35m1 -1v31m1 -1v23m1 -1v11m1 -3v4m1 -20v17m1 -43v27m1 -60v34m1 -67v34m1 -63v30m1 -51v22m1 -30v9m1 -9v6m1 -1v19m1 -1v28m1 -1v34m1 -1v34m1 -1v29m1 -1v20m1 -1v7m1 -8v8m1 -28v21m1 -49v29m1 -63v35m1 -67v33m1 -60v28m1 -45v18m1 -22v5m1 -5v11m1 -1v22m1 -1v31m1 -1v34m1 -1v33m1 -1v26m1 -1v16m1 -1v4m1 -13v12m1 -35v24m1 -55v32m1 -66v35m1 -66v32m1 -56v25m1 -37v13m1 -15v3m1 -1v14m1 -1v26m1 -1v32m1 -1v35m1 -1v31m1 -1v24m1 -1v11m1 -3v4m1 -20v17m1 -43v27m1 -59v33m1 -66v34m1 -64v31m1 -51v21m1 -30v10m1 -10v6m1 -1v18m1 -1v29m1 -1v33m1 -1v34m1 -1v30m1 -1v20m1 -1v7m1 -8v8m1 -27v20m1 -49v30m1 -63v34m1 -67v34m1 -61v28m1 -44v17m1 -22v6m1 -6v10m1 -1v22m1 -1v31m1 -1v34m1 -1v33m1 -1v27m1 -1v16m1 -1v4m1 -13v12m1 -35v24m1 -54v31m1 -65v35m1 -66v32m1 -56v25m1 -38v14m1 -16v3m1 -1v14m1 -1v25m1 -1v33m1 -1v34m1 -1v32m1 -1v23m1 -1v12m1 -3v4m1 -19v16m1 -42v27m1 -59v33m1 -67v35m1 -64v30m1 -51v22m1 -31v10m1 -10v6m1 -1v18m1 -1v28m1 -1v34m1 -1v34m1 -1v29m1 -1v20m1 -1v8m1 -8v8m1 -27v20m1 -48v29m1 -62v34m1 -67v34m1 -61v28m1 -45v18m1 -23v6m1 -6v10m1 -1v22m1 -1v30m1 -1v35m1 -1v33m1 -1v27m1 -1v16m1 -1v4m1 -13v12m1 -34v23m1 -54v32m1 -65v34m1 -66v33m1 -57v25m1 -38v14m1 -16v3m1 -1v14m1 -1v25m1 -1v32m1 -1v35m1 -1v31m1 -1v24m1 -1v12m1 -3v4m1 -19v16m1 -41v26m1 -58v33m1 -67v35m1 -65v31m1 -52v22m1 -31v10m1 -10v5m1 -1v18m1 -1v28m1 -1v34m1 -1v34m1 -1v30m1 -1v20m1 -1v8m1 -7v7m1 -26v20m1 -48v29m1 -63v35m1 -67v33m1 -61v29m1 -46v18m1 -23v6m1 -6v10m1 -1v21m1 -1v31m1 -1v34m1 -1v33m1 -1v27m1 -1v17m1 -1v4m1 -12v11m1 -34v24m1 -54v31m1 -65v35m1 -66v32m1 -57v26m1 -39v14m1 -16v3m1 -2v14m1 -1v25m1 -1v32m1 -1v35m1 -1v32m1 -1v24m1 -1v12m1 -3v4m1 -18v15m1 -41v27m1 -59v33m1 -66v34m1 -64v31m1 -52v22m1 -32v11m1 -11v5m1 -1v18m1 -1v28m1 -1v33m1 -1v35m1 -1v29m1 -1v21m1 -1v8m1 -7v7m1 -26v20m1 -48v29m1 -62v34m1 -67v34m1 -61v28m1 -46v19m1 -24v6m1 -6v9m1 -1v22m1 -1v30m1 -1v34m1 -1v34m1 -1v27m1 -1v17m1 -1v4m1 -12v11m1 -33v23m1 -53v31m1 -65v35m1 -67v33m1 -57v25m1 -39v15m1 -17v3m1 -2v14m1 -1v25m1 -1v32m1 -1v34m1 -1v32m1 -1v24m1 -1v13m1 -3v4m1 -18v15m1 -40v26m1 -58v33m1 -67v35m1 -65v31m1 -52v22m1 -32v11m1 -11v5m1 -1v18m1 -1v27m1 -1v34m1 -1v34m1 -1v30m1 -1v20m1 -1v9m1 -7v7m1 -25v19m1 -47v29m1 -62v34m1 -67v34m1 -62v29m1 -47v19m1 -24v6m1 -6v9m1 -1v21m1 -1v30m1 -1v35m1 -1v33m1 -1v27m1 -1v17m1 -1v5m1 -12v12m1 -34v23m1 -53v31m1 -64v34m1 -66v33m1 -58v26m1 -40v15m1 -17v3m1 -2v13m1 -1v25m1 -1v32m1 -1v35m1 -1v32m1 -1v24m1 -1v13m1 -2v3m1 -18v16m1 -41v26m1 -57v32m1 -66v35m1 -65v31m1 -53v23m1 -33v11m1 -11v5m1 -1v17m1 -1v28m1 -1v33m1 -1v34m1 -1v30m1 -1v21m1 -1v9m1 -7v7m1 -25v19m1 -47v29m1 -61v33m1 -66v34m1 -62v29m1 -47v19m1 -25v7m1 -7v9m1 -1v21m1 -1v30m1 -1v34m1 -1v33m1 -1v28m1 -1v17m1 -1v5m1 -11v11m1 -33v23m1 -53v31m1 -65v35m1 -66v32m1 -57v26m1 -41v16m1 -18v3m1 -2v13m1 -1v24m1 -1v32m1 -1v35m1 -1v32m1 -1v25m1 -1v13m1 -2v3m1 -17v15m1 -40v26m1 -58v33m1 -66v34m1 -64v31m1 -53v23m1 -34v12m1 -12v5m1 -1v17m1 -1v27m1 -1v33m1 -1v35m1 -1v30m1 -1v21m1 -1v9m1 -6v6m1 -24v19m1 -47v29m1 -62v34m1 -67v34m1 -62v29m1 -47v19m1 -25v7m1 -7v9m1 -1v20m1 -1v30m1 -1v34m1 -1v34m1 -1v27m1 -1v18m1 -1v5m1 -11v11m1 -32v22m1 -52v31m1 -65v35m1 -67v33m1 -58v26m1 -40v15m1 -18v4m1 -3v13m1 -1v24m1 -1v32m1 -1v34m1 -1v32m1 -1v25m1 -1v14m1 -2v3m1 -17v15m1 -39v25m1 -57v33m1 -67v35m1 -65v31m1 -53v23m1 -33v11m1 -12v4m1 -1v17m1 -1v27m1 -1v34m1 -1v34m1 -1v30m1 -1v22m1 -1v9m1 -6v6m1 -24v19m1 -46v28m1 -61v34m1 -67v34m1 -62v29m1 -48v20m1 -26v7m1 -7v8m1 -1v21m1 -1v29m1 -1v35m1 -1v33m1 -1v28m1 -1v18m1 -1v5m1 -11v11m1 -32v22m1 -52v31m1 -64v34m1 -66v33m1 -59v27m1 -41v15m1 -18v4m1 -3v12m1 -1v24m1 -1v32m1 -1v35m1 -1v32m1 -1v25m1 -1v14m1 -2v3m1 -16v14m1 -39v26m1 -57v32m1 -66v35m1 -65v31m1 -54v24m1 -34v11m1 -12v4m1 -1v17m1 -1v27m1 -1v33m1 -1v34m1 -1v31m1 -1v21m1 -1v10m1 -6v6m1 -23v18m1 -46v29m1 -61v33m1 -67v35m1 -63v29m1 -48v20m1 -26v7m1 -7v8m1 -1v20m1 -1v30m1 -1v34m1 -1v34m1 -1v28m1 -1v18m1 -1v5m1 -10v10m1 -31v22m1 -52v31m1 -65v35m1 -67v33m1 -58v26m1 -41v16m1 -19v4m1 -3v12m1 -1v24m1 -1v31m1 -1v35m1 -1v32m1 -1v25m1 -1v14m1 -1v3m1 -16v14m1 -38v25m1 -57v33m1 -66v34m1 -65v32m1 -54v23m1 -34v12m1 -13v4m1 -1v16m1 -1v27m1 -1v33m1 -1v35m1 -1v30m1 -1v22m1 -1v10m1 -6v6m1 -23v18m1 -45v28m1 -61v34m1 -67v34m1 -62v29m1 -48v20m1 -27v8m1 -8v8m1 -1v20m1 -1v29m1 -1v34m1 -1v34m1 -1v28m1 -1v18m1 -1v6m1 -10v10m1 -31v22m1 -51v30m1 -64v35m1 -67v33m1 -59v27m1 -42v16m1 -19v4m1 -3v12m1 -1v23m1 -1v32m1 -1v34m1 -1v33m1 -1v25m1 -1v14m1 -1v3m1 -16v14m1 -38v25m1 -56v32m1 -66v35m1 -65v31m1 -54v24m1 -35v12m1 -13v4m1 -1v16m1 -1v27m1 -1v33m1 -1v34m1 -1v31m1 -1v22m1 -1v10m1 -6v6m1 -22v17m1 -44v28m1 -61v34m1 -67v34m1 -63v30m1 -49v20m1 -27v8m1 -8v7m1 -1v20m1 -1v30m1 -1v34m1 -1v33m1 -1v29m1 -1v18m1 -1v6m1 -10v10m1 -30v21m1 -51v31m1 -64v34m1 -66v33m1 -59v27m1 -43v17m1 -20v4m1 -3v11m1 -1v24m1 -1v31m1 -1v35m1 -1v32m1 -1v26m1 -1v14m1 -1v3m1 -15v13m1 -37v25m1 -56v32m1 -66v35m1 -66v32m1 -55v24m1 -35v12m1 -13v4m1 -1v16m1 -1v26m1 -1v33m1 -1v34m1 -1v31m1 -1v22m1 -1v11m1 -5v5m1 -22v18m1 -45v28m1 -60v33m1 -67v35m1 -63v29m1 -49v21m1 -28v8m1 -8v7m1 -1v20m1 -1v29m1 -1v34m1 -1v34m1 -1v28m1 -1v19m1 -1v6m1 -9v9m1 -30v22m1 -51v30m1 -63v34m1 -67v34m1 -60v27m1 -43v17m1 -20v4m1 -3v11m1 -1v23m1 -1v31m1 -1v35m1 -1v33m1 -1v25m1 -1v15m1 -1v3m1 -15v14m1 -38v25m1 -56v32m1 -65v34m1 -65v32m1 -55v24m1 -36v13m1 -14v4m1 -1v15m1 -1v26m1 -1v33m1 -1v35m1 -1v31m1 -1v22m1 -1v11m1 -5v5m1 -22v18m1 -44v27m1 -60v34m1 -67v34m1 -63v30m1 -50v21m1 -28v8m1 -8v7m1 -1v19m1 -1v29m1 -1v34m1 -1v34m1 -1v29m1 -1v19m1 -1v6m1 -9v9m1 -29v21m1 -50v30m1 -64v35m1 -67v33m1 -59v27m1 -43v17m1 -21v5m1 -5v12m1 -1v23m1 -1v31m1 -1v34m1 -1v33m1 -1v26m1 -1v15m1 -1v3m1 -15v14m1 -37v24m1 -55v32m1 -66v35m1 -66v32m1 -55v24m1 -36v13m1 -14v3m1 -1v16m1 -1v26m1 -1v33m1 -1v34m1 -1v31m1 -1v23m1 -1v11m1 -5v5m1 -21v17m1 -44v28m1 -60v33m1 -66v34m1 -63v30m1 -50v21m1 -29v9m1 -9v7m1 -1v19m1 -1v29m1 -1v34m1 -1v34m1 -1v28m1 -1v19m1 -1v7m1 -9v9m1 -29v21m1 -50v30m1 -63v34m1 -67v34m1 -60v27m1 -43v17m1 -21v5m1 -5v11m1 -1v23m1 -1v31m1 -1v35m1 -1v32m1 -1v26m1 -1v16m1 -1v3m1 -14v13m1 -37v25m1 -55v31m1 -65v35m1 -66v32m1 -56v25m1 -37v13m1 -14v3m1 -1v15m1 -1v26m1 -1v33m1 -1v34m1 -1v32m1 -1v22m1 -1v12m1 -5v5m1 -21v17m1 -43v27m1 -59v33m1 -67v35m1 -64v30m1 -50v21m1 -29v9m1 -9v6m1 -1v19m1 -1v29m1 -1v34m1 -1v34m1 -1v29m1 -1v19m1 -1v7m1 -9v9m1 -28v20m1 -49v30m1 -63v34m1 -67v34m1 -61v28m1 -44v17m1 -21v5m1 -5v11m1 -1v23m1 -1v30m1 -1v35m1 -1v33m1 -1v26m1 -1v15m1 -1v4m1 -14v13m1 -36v24m1 -55v32m1 -65v34m1 -66v33m1 -56v24m1 -37v14m1 -15v3m1 -1v15m1 -1v26m1 -1v32m1 -1v35m1 -1v31m1 -1v23m1 -1v11m1 -3v4m1 -20v17m1 -43v27m1 -60v34m1 -67v34m1 -63v30m1 -51v22m1 -30v9m1 -9v6m1 -1v19m1 -1v28m1 -1v34m1 -1v34m1 -1v29m1 -1v20m1 -1v7m1 -8v8m1 -28v21m1 -50v30m1 -63v34m1 -66v33m1 -60v28m1 -45v18m1 -22v5m1 -5v11m1 -1v22m1 -1v31m1 -1v34m1 -1v33m1 -1v27m1 -1v15m1 -1v4m1 -13v12m1 -35v24m1 -55v32m1 -66v35m1 -66v32m1 -56v25m1 -38v14m1 -15v3m1 -1v15m1 -1v25m1 -1v33m1 -1v34m1 -1v32m1 -1v23m1 -1v11m1 -3v4m1 -20v17m1 -43v27m1 -59v33m1 -66v34m1 -64v31m1 -51v21m1 -30v10m1 -10v6m1 -1v18m1 -1v29m1 -1v34m1 -1v34m1 -1v29m1 -1v20m1 -1v7m1 -8v8m1 -27v20m1 -49v30m1 -63v34m1 -67v34m1 -61v28m1 -45v18m1 -22v5m1 -5v10m1 -1v22m1 -1v31m1 -1v35m1 -1v33m1 -1v26m1 -1v16m1 -1v4m1 -13v12m1 -35v24m1 -54v31m1 -65v35m1 -66v32m1 -56v25m1 -38v14m1 -16v3m1 -1v14m1 -1v25m1 -1v33m1 -1v35m1 -1v31m1 -1v23m1 -1v12m1 -3v4m1 -19v16m1 -42v27m1 -59v33m1 -67v35m1 -64v30m1 -51v22m1 -31v10m1 -10v6m1 -1v18m1 -1v28m1 -1v34m1 -1v34m1 -1v29m1 -1v20m1 -1v8m1 -8v8m1 -27v20m1 -48v29m1 -62v34m1 -67v34m1 -61v28m1 -45v18m1 -23v6m1 -6v10m1 -1v22m1 -1v30m1 -1v35m1 -1v33m1 -1v27m1 -1v16m1 -1v4m1 -13v12m1 -34v23m1 -54v32m1 -65v34m1 -66v33m1 -57v25m1 -38v14m1 -16v3m1 -1v14m1 -1v25m1 -1v32m1 -1v35m1 -1v31m1 -1v24m1 -1v12m1 -3v4m1 -19v16m1 -42v27m1 -59v33m1 -66v34m1 -64v31m1 -52v22m1 -31v10m1 -10v6m1 -1v18m1 -1v28m1 -1v33m1 -1v34m1 -1v30m1 -1v20m1 -1v8m1 -8v8m1 -26v19m1 -48v30m1 -63v34m1 -67v34m1 -61v28m1 -45v18m1 -23v6m1 -6v10m1 -1v21m1 -1v31m1 -1v34m1 -1v33m1 -1v27m1 -1v17m1 -1v4m1 -12v11m1 -34v24m1 -54v31m1 -65v35m1 -66v32m1 -57v26m1 -39v14m1 -16v3m1 -1v13m1 -1v25m1 -1v33m1 -1v34m1 -1v32m1 -1v24m1 -1v12m1 -3v4m1 -19v16m1 -41v26m1 -58v33m1 -67v35m1 -64v30m1 -51v22m1 -32v11m1 -11v5m1 -1v18m1 -1v28m1 -1v34m1 -1v34m1 -1v29m1 -1v21m1 -1v8m1 -7v7m1 -26v20m1 -48v29m1 -62v34m1 -67v34m1 -61v28m1 -46v19m1 -24v6m1 -6v9m1 -1v22m1 -1v30m1 -1v35m1 -1v33m1 -1v27m1 -1v17m1 -1v4m1 -12v11m1 -33v23m1 -53v31m1 -65v35m1 -67v33m1 -57v25m1 -39v15m1 -17v3m1 -2v14m1 -1v25m1 -1v32m1 -1v35m1 -1v31m1 -1v24m1 -1v13m1 -3v4m1 -18v15m1 -40v26m1 -58v33" stroke="#ffff11"/><path d="M33.5 275v18m1 -1v5m1 -10v10m1 -32v23m1 -52v30m1 -64v35m1 -67v33m1 -58v26m1 -41v16m1 -19v4m1 -3v12m1 -1v24m1 -1v32m1 -1v34m1 -1v33m1 -1v25m1 -1v13m1 -1v3m1 -16v14m1 -39v26m1 -57v32m1 -66v35m1 -65v31m1 -54v24m1 -34v11m1 -12v4m1 -1v17m1 -1v26m1 -1v34m1 -1v34m1 -1v30m1 -1v22m1 -1v10m1 -6v6m1 -23v18m1 -45v28m1 -61v34m1 -67v34m1 -63v30m1 -48v19m1 -26v8m1 -8v8m1 -1v20m1 -1v29m1 -1v35m1 -1v33m1 -1v28m1 -1v18m1 -1v6m1 -10v10m1 -31v22m1 -52v31m1 -64v34m1 -66v33m1 -59v27m1 -42v16m1 -19v4m1 -3v12m1 -1v23m1 -1v32m1 -1v35m1 -1v32m1 -1v25m1 -1v14m1 -1v3m1 -16v14m1 -38v25m1 -56v32m1 -66v35m1 -66v32m1 -54v23m1 -34v12m1 -13v4m1 -1v16m1 -1v27m1 -1v33m1 -1v34m1 -1v31m1 -1v22m1 -1v10m1 -6v6m1 -23v18m1 -45v28m1 -60v33m1 -67v35m1 -63v29m1 -48v20m1 -27v8m1 -8v8m1 -1v20m1 -1v29m1 -1v34m1 -1v34m1 -1v28m1 -1v18m1 -1v6m1 -10v10m1 -31v22m1 -51v30m1 -63v34m1 -67v34m1 -59v26m1 -42v17m1 -20v4m1 -3v12m1 -1v23m1 -1v31m1 -1v35m1 -1v32m1 -1v26m1 -1v14m1 -1v3m1 -15v13m1 -37v25m1 -57v33m1 -66v34m1 -65v32m1 -55v24m1 -35v12m1 -13v4m1 -1v16m1 -1v26m1 -1v33m1 -1v35m1 -1v30m1 -1v23m1 -1v10m1 -5v5m1 -22v18m1 -45v28m1 -61v34m1 -67v34m1 -63v30m1 -49v20m1 -27v8m1 -8v7m1 -1v20m1 -1v29m1 -1v34m1 -1v34m1 -1v28m1 -1v19m1 -1v6m1 -10v10m1 -30v21m1 -50v30m1 -64v35m1 -67v33m1 -59v27m1 -43v17m1 -20v4m1 -3v11m1 -1v23m1 -1v32m1 -1v34m1 -1v33m1 -1v25m1 -1v15m1 -1v3m1 -15v14m1 -38v25m1 -56v32m1 -66v35m1 -65v31m1 -54v24m1 -36v13m1 -14v4m1 -1v15m1 -1v27m1 -1v33m1 -1v34m1 -1v31m1 -1v22m1 -1v11m1 -5v5m1 -22v18m1 -44v27m1 -60v34m1 -67v34m1 -63v30m1 -50v21m1 -28v8m1 -8v7m1 -1v20m1 -1v29m1 -1v34m1 -1v33m1 -1v29m1 -1v19m1 -1v6m1 -9v9m1 -30v22m1 -51v30m1 -63v34m1 -66v33m1 -60v28m1 -43v16m1 -20v5m1 -4v11m1 -1v23m1 -1v31m1 -1v35m1 -1v32m1 -1v26m1 -1v15m1 -1v3m1 -15v14m1 -37v24m1 -55v32m1 -66v35m1 -66v32m1 -55v24m1 -36v13m1 -14v3m1 -1v16m1 -1v26m1 -1v33m1 -1v34m1 -1v31m1 -1v23m1 -1v11m1 -5v5m1 -21v17m1 -44v28m1 -60v33m1 -67v35m1 -64v30m1 -49v20m1 -28v9m1 -9v7m1 -1v19m1 -1v29m1 -1v34m1 -1v34m1 -1v29m1 -1v18m1 -1v7m1 -9v9m1 -29v21m1 -50v30m1 -63v34m1 -67v34m1 -60v27m1 -43v17m1 -21v5m1 -5v12m1 -1v22m1 -1v31m1 -1v35m1 -1v33m1 -1v26m1 -1v15m1 -1v3m1 -14v13m1 -37v25m1 -56v32m1 -65v34m1 -65v32m1 -56v25m1 -37v13m1 -14v3m1 -1v15m1 -1v26m1 -1v33m1 -1v35m1 -1v31m1 -1v23m1 -1v11m1 -5v5m1 -21v17m1 -43v27m1 -60v34m1 -67v34m1 -63v30m1 -50v21m1 -29v9m1 -9v7m1 -1v19m1 -1v28m1 -1v34m1 -1v34m1 -1v29m1 -1v19m1 -1v7m1 -9v9m1 -29v21m1 -49v29m1 -63v35m1 -67v33m1 -60v28m1 -44v17m1 -21v5m1 -5v11m1 -1v23m1 -1v31m1 -1v34m1 -1v33m1 -1v26m1 -1v16m1 -1v3m1 -14v13m1 -36v24m1 -55v32m1 -66v35m1 -66v32m1 -55v24m1 -37v14m1 -15v3m1 -1v15m1 -1v26m1 -1v33m1 -1v34m1 -1v31m1 -1v23m1 -1v11m1 -4v5m1 -20v16m1 -43v28m1 -60v33m1 -66v34m1 -64v31m1 -51v21m1 -29v9m1 -9v6m1 -1v19m1 -1v29m1 -1v34m1 -1v34m1 -1v29m1 -1v19m1 -1v7m1 -8v8m1 -28v21m1 -50v30m1 -63v34m1 -67v34m1 -60v27m1 -44v18m1 -22v5m1 -5v11m1 -1v22m1 -1v31m1 -1v35m1 -1v33m1 -1v26m1 -1v15m1 -1v4m1 -14v13m1 -36v24m1 -54v31m1 -65v35m1 -66v32m1 -56v25m1 -38v14m1 -15v3m1 -1v15m1 -1v25m1 -1v33m1 -1v34m1 -1v32m1 -1v23m1 -1v11m1 -3v4m1 -20v17m1 -43v27m1 -59v33m1 -67v35m1 -64v30m1 -50v21m1 -30v10m1 -10v6m1 -1v19m1 -1v28m1 -1v34m1 -1v34m1 -1v29m1 -1v20m1 -1v7m1 -8v8m1 -28v21m1 -49v29m1 -62v34m1 -67v34m1 -61v28m1 -45v18m1 -22v5m1 -5v11m1 -1v22m1 -1v30m1 -1v35m1 -1v33m1 -1v26m1 -1v16m1 -1v4m1 -13v12m1 -35v24m1 -55v32m1 -65v34m1 -66v33m1 -57v25m1 -37v13m1 -15v3m1 -1v14m1 -1v26m1 -1v32m1 -1v35m1 -1v31m1 -1v24m1 -1v11m1 -3v4m1 -20v17m1 -42v26m1 -59v34m1 -67v34m1 -64v31m1 -51v21m1 -30v10m1 -10v6m1 -1v18m1 -1v28m1 -1v34m1 -1v34m1 -1v30m1 -1v19m1 -1v8m1 -8v8m1 -27v20m1 -49v30m1 -63v34m1 -66v33m1 -60v28m1 -45v18m1 -23v6m1 -6v10m1 -1v22m1 -1v31m1 -1v34m1 -1v33m1 -1v27m1 -1v16m1 -1v4m1 -13v12m1 -35v24m1 -54v31m1 -65v35m1 -66v32m1 -56v25m1 -38v14m1 -16v3m1 -1v14m1 -1v25m1 -1v33m1 -1v34m1 -1v32m1 -1v23m1 -1v12m1 -3v4m1 -19v16m1 -42v27m1 -59v33m1 -66v34m1 -64v31m1 -52v22m1 -31v10m1 -10v6m1 -1v18m1 -1v28m1 -1v34m1 -1v34m1 -1v29m1 -1v20m1 -1v8m1 -8v8m1 -27v20m1 -48v29m1 -62v34m1 -67v34m1 -61v28m1 -45v18m1 -23v6m1 -6v10m1 -1v22m1 -1v30m1 -1v35m1 -1v33m1 -1v27m1 -1v16m1 -1v4m1 -13v12m1 -34v23m1 -53v31m1 -65v35m1 -67v33m1 -57v25m1 -38v14m1 -16v3m1 -1v14m1 -1v25m1 -1v32m1 -1v34m1 -1v32m1 -1v24m1 -1v12m1 -3v4m1 -19v16m1 -41v26m1 -58v33m1 -67v35m1 -64v30m1 -52v23m1 -32v10m1 -10v5m1 -1v18m1 -1v28m1 -1v34m1 -1v34m1 -1v30m1 -1v20m1 -1v8m1 -7v7m1 -26v20m1 -48v29m1 -62v34m1 -67v34m1 -62v29m1 -46v18m1 -23v6m1 -6v10m1 -1v21m1 -1v30m1 -1v35m1 -1v33m1 -1v27m1 -1v17m1 -1v4m1 -12v11m1 -33v23m1 -54v32m1 -65v34m1 -66v33m1 -57v25m1 -39v15m1 -17v3m1 -2v14m1 -1v25m1 -1v32m1 -1v35m1 -1v32m1 -1v24m1 -1v12m1 -3v4m1 -18v15m1 -41v27m1 -59v33m1 -66v34m1 -64v31m1 -52v22m1 -32v11m1 -11v5m1 -1v18m1 -1v28m1 -1v33m1 -1v34m1 -1v30m1 -1v21m1 -1v8m1 -7v7m1 -26v20m1 -48v29m1 -62v34m1 -67v34m1 -61v28m1 -46v19m1 -24v6m1 -6v9m1 -1v22m1 -1v30m1 -1v34m1 -1v34m1 -1v27m1 -1v17m1 -1v4m1 -12v11m1 -33v23m1 -53v31m1 -65v35m1 -66v32m1 -57v26m1 -40v15m1 -17v3m1 -2v14m1 -1v24m1 -1v33m1 -1v34m1 -1v32m1 -1v24m1 -1v13m1 -2v3m1 -18v16m1 -41v26m1 -58v33m1 -67v35m1 -64v30m1 -52v23m1 -33v11m1 -11v5m1 -1v17m1 -1v28m1 -1v33m1 -1v35m1 -1v30m1 -1v20m1 -1v9m1 -7v7m1 -25v19m1 -47v29m1 -62v34m1 -67v34m1 -62v29m1 -47v19m1 -24v6m1 -6v9m1 -1v21m1 -1v30m1 -1v35m1 -1v33m1 -1v27m1 -1v17m1 -1v5m1 -12v12m1 -33v22m1 -52v31m1 -65v35m1 -67v33m1 -58v26m1 -40v15m1 -17v3m1 -2v13m1 -1v25m1 -1v32m1 -1v35m1 -1v31m1 -1v25m1 -1v13m1 -2v3m1 -18v16m1 -41v26m1 -57v32m1 -66v35m1 -65v31m1 -53v23m1 -33v11m1 -11v5m1 -1v17m1 -1v27m1 -1v34m1 -1v34m1 -1v30m1 -1v21m1 -1v9m1 -7v7m1 -25v19m1 -46v28m1 -61v34m1 -67v34m1 -62v29m1 -47v19m1 -25v7m1 -7v9m1 -1v21m1 -1v30m1 -1v34m1 -1v33m1 -1v28m1 -1v17m1 -1v5m1 -11v11m1 -33v23m1 -53v31m1 -64v34m1 -66v33m1 -58v26m1 -41v16m1 -18v3m1 -2v13m1 -1v24m1 -1v32m1 -1v35m1 -1v32m1 -1v24m1 -1v14m1 -2v3m1 -17v15m1 -40v26m1 -58v33m1 -66v34m1 -64v31m1 -53v23m1 -34v12m1 -12v5m1 -1v17m1 -1v27m1 -1v33m1 -1v35m1 -1v30m1 -1v21m1 -1v9m1 -6v6m1 -24v19m1 -47v29m1 -62v34m1 -67v34m1 -62v29m1 -47v19m1 -25v7m1 -7v8m1 -1v21m1 -1v30m1 -1v34m1 -1v34m1 -1v27m1 -1v18m1 -1v5m1 -11v11m1 -32v22m1 -52v31m1 -65v35m1 -67v33m1 -58v26m1 -40v15m1 -18v4m1 -3v13m1 -1v24m1 -1v32m1 -1v34m1 -1v32m1 -1v25m1 -1v14m1 -2v3m1 -17v15m1 -39v25m1 -57v33m1 -67v35m1 -65v31m1 -53v23m1 -33v11m1 -12v4m1 -1v17m1 -1v27m1 -1v33m1 -1v35m1 -1v30m1 -1v22m1 -1v9m1 -6v6m1 -24v19m1 -46v28m1 -61v34m1 -67v34m1 -62v29m1 -48v20m1 -26v7m1 -7v8m1 -1v21m1 -1v29m1 -1v35m1 -1v33m1 -1v28m1 -1v18m1 -1v5m1 -11v11m1 -32v22m1 -52v31m1 -64v34m1 -66v33m1 -58v26m1 -41v16m1 -19v4m1 -3v12m1 -1v24m1 -1v32m1 -1v35m1 -1v32m1 -1v25m1 -1v13m1 -1v3m1 -16v14m1 -39v26m1 -57v32m1 -66v35m1 -65v31m1 -54v24m1 -34v11m1 -12v4m1 -1v17m1 -1v27m1 -1v33m1 -1v34m1 -1v31m1 -1v21m1 -1v10m1 -6v6m1 -23v18m1 -46v29m1 -61v33m1 -66v34m1 -63v30m1 -49v20m1 -26v7m1 -7v8m1 -1v20m1 -1v30m1 -1v34m1 -1v34m1 -1v28m1 -1v17m1 -1v6m1 -10v10m1 -31v22m1 -52v31m1 -64v34m1 -66v33m1 -59v27m1 -42v16m1 -19v4m1 -3v12m1 -1v24m1 -1v31m1 -1v35m1 -1v32m1 -1v25m1 -1v14m1 -1v3m1 -16v14m1 -38v25m1 -57v33m1 -66v34m1 -65v32m1 -54v23m1 -34v12m1 -13v4m1 -1v16m1 -1v27m1 -1v33m1 -1v35m1 -1v30m1 -1v22m1 -1v10m1 -6v6m1 -23v18m1 -45v28m1 -61v34m1 -67v34m1 -62v29m1 -48v20m1 -27v8m1 -8v8m1 -1v20m1 -1v29m1 -1v34m1 -1v34m1 -1v28m1 -1v18m1 -1v6m1 -10v10m1 -31v22m1 -51v30m1 -64v35m1 -67v33m1 -59v27m1 -42v16m1 -19v4m1 -3v12m1 -1v23m1 -1v32m1 -1v34m1 -1v33m1 -1v25m1 -1v14m1 -1v3m1 -16v14m1 -38v25m1 -56v32m1 -66v35m1 -65v31m1 -54v24m1 -35v12m1 -13v4m1 -1v16m1 -1v26m1 -1v33m1 -1v35m1 -1v31m1 -1v22m1 -1v10m1 -5v5m1 -22v18m1 -45v28m1 -61v34m1 -67v34m1 -63v30m1 -49v20m1 -27v8m1 -8v7m1 -1v20m1 -1v29m1 -1v34m1 -1v34m1 -1v29m1 -1v18m1 -1v6m1 -10v10m1 -30v21m1 -51v31m1 -64v34m1 -66v33m1 -59v27m1 -43v17m1 -20v4m1 -3v11m1 -1v24m1 -1v31m1 -1v35m1 -1v32m1 -1v26m1 -1v14m1 -1v3m1 -15v14m1 -38v25m1 -56v32m1 -66v35m1 -66v32m1 -55v24m1 -35v12m1 -13v4m1 -1v15m1 -1v27m1 -1v33m1 -1v34m1 -1v31m1 -1v22m1 -1v11m1 -5v5m1 -22v18m1 -45v28m1 -60v33m1 -67v35m1 -63v29m1 -49v21m1 -28v8m1 -8v7m1 -1v20m1 -1v29m1 -1v34m1 -1v34m1 -1v28m1 -1v19m1 -1v6m1 -9v9m1 -30v22m1 -51v30m1 -63v34m1 -67v34m1 -60v27m1 -43v17m1 -20v4m1 -3v11m1 -1v23m1 -1v31m1 -1v35m1 -1v32m1 -1v26m1 -1v15m1 -1v3m1 -15v14m1 -38v25m1 -56v32m1 -65v34m1 -65v32m1 -55v24m1 -36v13m1 -14v4m1 -1v15m1 -1v26m1 -1v33m1 -1v35m1 -1v31m1 -1v22m1 -1v11m1 -5v5m1 -21v17m1 -44v28m1 -61v34m1 -67v34m1 -63v30m1 -49v20m1 -28v9m1 -9v7m1 -1v19m1 -1v29m1 -1v34m1 -1v34m1 -1v29m1 -1v19m1 -1v6m1 -9v9m1 -29v21m1 -50v30m1 -64v35m1 -67v33m1 -59v27m1 -43v17m1 -21v5m1 -5v12m1 -1v22m1 -1v32m1 -1v34m1 -1v33m1 -1v26m1 -1v15m1 -1v3m1 -14v13m1 -37v25m1 -56v32m1 -66v35m1 -66v32m1 -55v24m1 -36v13m1 -14v3m1 -1v16m1 -1v26m1 -1v32m1 -1v35m1 -1v31m1 -1v23m1 -1v11m1 -5v5m1 -21v17m1 -43v27m1 -60v34m1 -67v34m1 -63v30m1 -50v21m1 -29v9m1 -9v7m1 -1v19m1 -1v28m1 -1v34m1 -1v34m1 -1v29m1 -1v19m1 -1v7m1 -9v9m1 -29v21m1 -50v30m1 -63v34m1 -66v33m1 -60v28m1 -44v17m1 -21v5m1 -5v11m1 -1v23m1 -1v31m1 -1v34m1 -1v33m1 -1v26m1 -1v16m1 -1v3m1 -14v13m1 -36v24m1 -55v32m1 -66v35m1 -66v32m1 -56v25m1 -37v13m1 -14v3m1 -1v15m1 -1v26m1 -1v33m1 -1v34m1 -1v31m1 -1v23m1 -1v12m1 -5v5m1 -21v17m1 -43v27m1 -59v33m1 -67v35m1 -64v30m1 -50v21m1 -29v9m1 -9v6m1 -1v19m1 -1v29m1 -1v34m1 -1v34m1 -1v29m1 -1v19m1 -1v7m1 -9v9m1 -28v20m1 -49v30m1 -63v34m1 -67v34m1 -60v27m1 -44v18m1 -22v5m1 -5v11m1 -1v22m1 -1v31m1 -1v35m1 -1v33m1 -1v26m1 -1v15m1 -1v4m1 -14v13m1 -36v24m1 -55v32m1 -65v34m1 -65v32m1 -56v25m1 -38v14m1 -15v3m1 -1v15m1 -1v25m1 -1v33m1 -1v35m1 -1v31m1 -1v23m1 -1v11m1 -3v4m1 -20v17m1 -43v27m1 -60v34m1 -67v34m1 -63v30m1 -51v22m1 -30v9m1 -9v6m1 -1v19m1 -1v28m1 -1v34m1 -1v34m1 -1v29m1 -1v20m1 -1v7m1 -8v8m1 -28v21m1 -49v29m1 -63v35m1 -67v33m1 -60v28m1 -45v18m1 -22v5m1 -5v11m1 -1v22m1 -1v31m1 -1v34m1 -1v33m1 -1v27m1 -1v15m1 -1v4m1 -13v12m1 -35v24m1 -55v32m1 -66v35m1 -66v32m1 -56v25m1 -38v14m1 -15v3m1 -1v14m1 -1v26m1 -1v32m1 -1v35m1 -1v31m1 -1v24m1 -1v11m1 -3v4m1 -20v17m1 -43v27m1 -59v33m1 -66v34m1 -64v31m1 -51v21m1 -30v10m1 -10v6m1 -1v18m1 -1v29m1 -1v33m1 -1v35m1 -1v29m1 -1v20m1 -1v7m1 -8v8m1 -27v20m1 -49v30m1 -63v34m1 -67v34m1 -61v28m1 -45v18m1 -22v5m1 -5v10m1 -1v22m1 -1v31m1 -1v34m1 -1v34m1 -1v26m1 -1v16m1 -1v4m1 -13v12m1 -35v24m1 -54v31m1 -65v35m1 -66v32m1 -56v25m1 -38v14m1 -16v3m1 -1v14m1 -1v25m1 -1v33m1 -1v34m1 -1v32m1 -1v23m1 -1v12m1 -3v4m1 -19v16m1 -42v27m1 -59v33m1 -67v35m1 -64v30m1 -51v22m1 -31v10m1 -10v6m1 -1v18m1 -1v28m1 -1v34m1 -1v34m1 -1v29m1 -1v20m1 -1v8m1 -8v8m1 -27v20m1 -48v29m1 -62v34m1 -67v34m1 -61v28m1 -45v18m1 -23v6m1 -6v10m1 -1v22m1 -1v30m1 -1v35m1 -1v33m1 -1v27m1 -1v16m1 -1v4m1 -13v12m1 -34v23m1 -54v32m1 -65v34m1 -66v33m1 -57v25m1 -38v14m1 -16v3m1 -1v14m1 -1v25m1 -1v32m1 -1v35m1 -1v31m1 -1v24m1 -1v12m1 -3v4m1 -19v16m1 -41v26m1 -59v34m1 -67v34m1 -64v31m1 -52v22m1 -31v10m1 -10v5m1 -1v18m1 -1v28m1 -1v34m1 -1v34m1 -1v30m1 -1v20m1 -1v8m1 -7v7m1 -26v20m1 -48v29m1 -63v35m1 -67v33m1 -61v29m1 -46v18m1 -23v6m1 -6v10m1 -1v21m1 -1v31m1 -1v34m1 -1v33m1 -1v27m1 -1v17m1 -1v4m1 -12v11m1 -34v24m1 -54v31m1 -65v35m1 -66v32m1 -57v26m1 -39v14m1 -16v3m1 -2v14m1 -1v25m1 -1v32m1 -1v35m1 -1v32m1 -1v24m1 -1v12m1 -3v4m1 -18v15m1 -41v27m1 -59v33m1 -66v34m1 -64v31m1 -52v22m1 -32v11m1 -11v5m1 -1v18m1 -1v28m1 -1v33m1 -1v35m1 -1v29m1 -1v21m1 -1v8m1 -7v7m1 -26v20m1 -48v29m1 -62v34m1 -67v34m1 -61v28m1 -46v19m1 -24v6m1 -6v9m1 -1v22m1 -1v30m1 -1v34m1 -1v34m1 -1v27m1 -1v17m1 -1v4m1 -12v11m1 -33v23m1 -53v31m1 -65v35m1 -67v33m1 -57v25m1 -39v15m1 -17v3m1 -2v14m1 -1v25m1 -1v32m1 -1v34m1 -1v32m1 -1v24m1 -1v13m1 -3v4m1 -18v15m1 -40v26m1 -58v33m1 -67v35m1 -65v31m1 -52v22m1 -32v11m1 -11v5m1 -1v18m1 -1v27m1 -1v34m1 -1v34m1 -1v30m1 -1v20m1 -1v9m1 -7v7m1 -25v19m1 -47v29m1 -62v34m1 -67v34m1 -62v29m1 -47v19m1 -24v6m1 -6v9m1 -1v21m1 -1v30m1 -1v35m1 -1v33m1 -1v27m1 -1v17m1 -1v5m1 -12v12m1 -34v23m1 -53v31m1 -64v34m1 -66v33m1 -58v26m1 -40v15m1 -17v3m1 -2v14m1 -1v24m1 -1v32m1 -1v35m1 -1v32m1 -1v24m1 -1v13m1 -2v3m1 -18v16m1 -41v26m1 -58v33m1 -66v34m1 -64v31m1 -53v23m1 -33v11m1 -11v5m1 -1v17m1 -1v28m1 -1v33m1 -1v34m1 -1v30m1 -1v21m1 -1v9m1 -7v7m1 -25v19m1 -47v29m1 -62v34m1 -67v34m1 -61v28m1 -46v19m1 -25v7m1 -7v9m1 -1v21m1 -1v30m1 -1v34m1 -1v34m1 -1v27m1 -1v17m1 -1v5m1 -11v11m1 -33v23m1 -53v31m1 -65v35m1 -66v32m1 -57v26m1 -41v16m1 -18v3m1 -2v13m1 -1v24m1 -1v32m1 -1v35m1 -1v32m1 -1v25m1 -1v13m1 -2v3m1 -17v15m1 -40v26m1 -58v33m1 -66v34m1 -65v32m1 -53v22m1 -33v12m1 -12v5m1 -1v17m1 -1v27m1 -1v33m1 -1v35m1 -1v30m1 -1v21m1 -1v9m1 -6v6m1 -24v19m1 -47v29m1 -62v34m1 -67v34m1 -62v29m1 -47v19m1 -25v7m1 -7v9m1 -1v20m1 -1v30m1 -1v34m1 -1v34m1 -1v28m1 -1v17m1 -1v5m1 -11v11m1 -33v23m1 -52v30m1 -64v35m1 -67v33m1 -58v26m1 -40v15m1 -18v4m1 -3v13m1 -1v24m1 -1v32m1 -1v34m1 -1v33m1 -1v24m1 -1v14m1 -2v3m1 -17v15m1 -40v26m1 -57v32m1 -66v35m1 -65v31m1 -53v23m1 -33v11m1 -12v4m1 -1v17m1 -1v27m1 -1v34m1 -1v34m1 -1v30m1 -1v22m1 -1v9m1 -6v6m1 -24v19m1 -46v28m1 -61v34m1 -67v34m1 -62v29m1 -48v20m1 -26v7m1 -7v8m1 -1v21m1 -1v29m1 -1v35m1 -1v33m1 -1v28m1 -1v18m1 -1v5m1 -11v11m1 -32v22m1 -52v31m1 -64v34m1 -66v33m1 -59v27m1 -41v15m1 -18v4m1 -3v12m1 -1v24m1 -1v32m1 -1v35m1 -1v32m1 -1v25m1 -1v14m1 -2v3m1 -16v14m1 -39v26m1 -58v33m1 -66v34m1 -64v31m1 -54v24m1 -34v11m1 -12v4m1 -1v17m1 -1v27m1 -1v33m1 -1v34m1 -1v31m1 -1v21m1 -1v10m1 -6v6m1 -23v18m1 -46v29m1 -62v34m1 -67v34m1 -62v29m1 -48v20m1 -26v7m1 -7v8m1 -1v20m1 -1v30m1 -1v34m1 -1v34m1 -1v28m1 -1v18m1 -1v5m1 -10v10m1 -31v22m1 -52v31m1 -65v35m1 -67v33m1 -58v26m1 -41v16m1 -19v4m1 -3v12m1 -1v24m1 -1v31m1 -1v35m1 -1v32m1 -1v25m1 -1v14m1 -1v3m1 -16v14m1 -38v25m1 -57v33m1 -66v34m1 -65v32m1 -54v23m1 -34v12m1 -13v4m1 -1v16m1 -1v27m1 -1v33m1 -1v35m1 -1v30m1 -1v22m1 -1v10m1 -6v6m1 -23v18m1 -45v28m1 -61v34m1 -67v34m1 -62v29m1 -48v20m1 -27v8m1 -8v8m1 -1v20m1 -1v29m1 -1v34m1 -1v34m1 -1v28m1 -1v18m1 -1v6m1 -10v10m1 -31v22m1 -51v30m1 -64v35m1 -67v33m1 -59v27m1 -42v16m1 -19v4m1 -3v12m1 -1v23m1 -1v32m1 -1v34m1 -1v33m1 -1v25m1 -1v14m1 -1v3m1 -16v14m1 -38v25m1 -56v32m1 -66v35m1 -65v31m1 -54v24m1 -35v12m1 -13v4m1 -1v16m1 -1v27m1 -1v33m1 -1v34m1 -1v31m1 -1v22m1 -1v10m1 -6v6m1 -23v18m1 -45v28m1 -60v33m1 -66v34m1 -63v30m1 -49v20m1 -27v8m1 -8v7m1 -1v20m1 -1v30m1 -1v34m1 -1v34m1 -1v28m1 -1v18m1 -1v6m1 -10v10m1 -30v21m1 -51v31m1 -64v34m1 -66v33m1 -59v27m1 -43v17m1 -20v4m1 -3v11m1 -1v24m1 -1v31m1 -1v35m1 -1v32m1 -1v26m1 -1v14m1 -1v3m1 -15v13m1 -37v25m1 -57v33m1 -66v34m1 -65v32m1 -55v24m1 -35v12m1 -13v4m1 -1v16m1 -1v26m1 -1v33m1 -1v35m1 -1v30m1 -1v22m1 -1v11m1 -5v5m1 -22v18m1 -45v28m1 -61v34m1 -67v34m1 -62v29m1 -49v21m1 -28v8m1 -8v7m1 -1v20m1 -1v29m1 -1v34m1 -1v34m1 -1v28m1 -1v19m1 -1v6m1 -9v9m1 -30v22m1 -51v30m1 -64v35m1 -67v33m1 -59v27m1 -43v17m1 -20v4m1 -3v11m1 -1v23m1 -1v31m1 -1v35m1 -1v33m1 -1v25m1 -1v15m1 -1v3m1 -15v14m1 -38v25m1 -56v32m1 -66v35m1 -65v31m1 -54v24m1 -36v13m1 -14v4m1 -1v15m1 -1v26m1 -1v33m1 -1v35m1 -1v31m1 -1v22m1 -1v11m1 -5v5m1 -22v18m1 -44v27m1 -60v34m1 -67v34m1 -63v30m1 -50v21m1 -28v8m1 -8v7m1 -1v19m1 -1v29m1 -1v34m1 -1v34m1 -1v29m1 -1v19m1 -1v6m1 -9v9m1 -29v21m1 -51v31m1 -64v34m1 -66v33m1 -59v27m1 -43v17m1 -21v5m1 -5v12m1 -1v23m1 -1v31m1 -1v34m1 -1v33m1 -1v26m1 -1v15m1 -1v3m1 -15v14m1 -37v24m1 -55v32m1 -66v35m1 -66v32m1 -55v24m1 -36v13m1 -14v3m1 -1v16m1 -1v26m1 -1v33m1 -1v34m1 -1v31m1 -1v23m1 -1v11m1 -5v5m1 -21v17m1 -44v28m1 -60v33m1 -66v34m1 -63v30m1 -50v21m1 -29v9m1 -9v7m1 -1v19m1 -1v29m1 -1v34m1 -1v34m1 -1v28m1 -1v19m1 -1v7m1 -9v9m1 -29v21m1 -50v30m1 -63v34m1 -67v34m1 -60v27m1 -43v17m1 -21v5m1 -5v11m1 -1v23m1 -1v31m1 -1v35m1 -1v33m1 -1v25m1 -1v16m1 -1v3m1 -14v13m1 -37v25m1 -56v32m1 -65v34m1 -65v32m1 -56v25m1 -37v13m1 -14v3m1 -1v15m1 -1v26m1 -1v33m1 -1v35m1 -1v31m1 -1v22m1 -1v12m1 -5v5m1 -21v17m1 -43v27m1 -59v33m1 -67v35m1 -64v30m1 -50v21m1 -29v9m1 -9v6m1 -1v19m1 -1v29m1 -1v34m1 -1v34m1 -1v29m1 -1v19m1 -1v7m1 -9v9m1 -28v20m1 -49v30m1 -64v35m1 -67v33m1 -60v28m1 -44v17m1 -21v5m1 -5v11m1 -1v23m1 -1v30m1 -1v35m1 -1v33m1 -1v26" stroke="#139fff"/><path d="M33.5 131v18m1 -1v28m1 -1v34m1 -1v34m1 -1v30m1 -1v20m1 -1v8m1 -7v7m1 -26v20m1 -48v29m1 -62v34m1 -67v34m1 -61v28m1 -46v19m1 -24v6m1 -6v10m1 -1v21m1 -1v30m1 -1v35m1 -1v33m1 -1v27m1 -1v17m1 -1v4m1 -12v11m1 -33v23m1 -54v32m1 -65v34m1 -66v33m1 -57v25m1 -39v15m1 -17v3m1 -2v14m1 -1v25m1 -1v32m1 -1v35m1 -1v31m1 -1v24m1 -1v13m1 -3v4m1 -18v15m1 -41v27m1 -59v33m1 -66v34m1 -64v31m1 -52v22m1 -32v11m1 -11v5m1 -1v18m1 -1v27m1 -1v34m1 -1v34m1 -1v30m1 -1v21m1 -1v8m1 -7v7m1 -26v20m1 -47v28m1 -62v35m1 -67v33m1 -61v29m1 -47v19m1 -24v6m1 -6v9m1 -1v22m1 -1v30m1 -1v34m1 -1v33m1 -1v28m1 -1v16m1 -1v5m1 -12v11m1 -33v23m1 -53v31m1 -65v35m1 -66v32m1 -57v26m1 -40v15m1 -17v3m1 -2v14m1 -1v24m1 -1v32m1 -1v35m1 -1v32m1 -1v24m1 -1v13m1 -2v3m1 -18v16m1 -41v26m1 -58v33m1 -66v34m1 -64v31m1 -53v23m1 -33v11m1 -11v5m1 -1v17m1 -1v28m1 -1v33m1 -1v35m1 -1v30m1 -1v20m1 -1v9m1 -7v7m1 -25v19m1 -47v29m1 -62v34m1 -67v34m1 -61v28m1 -46v19m1 -25v7m1 -7v9m1 -1v21m1 -1v30m1 -1v34m1 -1v34m1 -1v27m1 -1v17m1 -1v5m1 -11v11m1 -33v23m1 -53v31m1 -65v35m1 -67v33m1 -58v26m1 -40v15m1 -17v3m1 -2v13m1 -1v25m1 -1v32m1 -1v34m1 -1v32m1 -1v25m1 -1v13m1 -2v3m1 -17v15m1 -40v26m1 -58v33m1 -67v35m1 -65v31m1 -53v23m1 -33v11m1 -11v5m1 -1v17m1 -1v27m1 -1v34m1 -1v34m1 -1v30m1 -1v21m1 -1v9m1 -7v7m1 -25v19m1 -46v28m1 -61v34m1 -67v34m1 -62v29m1 -47v19m1 -25v7m1 -7v9m1 -1v21m1 -1v29m1 -1v35m1 -1v33m1 -1v28m1 -1v17m1 -1v5m1 -11v11m1 -33v23m1 -53v31m1 -64v34m1 -66v33m1 -58v26m1 -41v16m1 -18v3m1 -2v13m1 -1v24m1 -1v32m1 -1v35m1 -1v32m1 -1v24m1 -1v14m1 -2v3m1 -17v15m1 -40v26m1 -57v32m1 -66v35m1 -65v31m1 -53v23m1 -33v11m1 -12v5m1 -1v16m1 -1v28m1 -1v33m1 -1v34m1 -1v31m1 -1v21m1 -1v9m1 -6v6m1 -24v19m1 -47v29m1 -62v34m1 -67v34m1 -62v29m1 -47v19m1 -25v7m1 -7v8m1 -1v21m1 -1v30m1 -1v34m1 -1v34m1 -1v27m1 -1v18m1 -1v5m1 -11v11m1 -32v22m1 -52v31m1 -65v35m1 -67v33m1 -58v26m1 -40v15m1 -18v4m1 -3v13m1 -1v24m1 -1v31m1 -1v35m1 -1v32m1 -1v25m1 -1v14m1 -2v3m1 -17v15m1 -39v25m1 -57v33m1 -66v34m1 -65v32m1 -54v23m1 -33v11m1 -12v4m1 -1v17m1 -1v27m1 -1v33m1 -1v35m1 -1v30m1 -1v21m1 -1v10m1 -6v6m1 -24v19m1 -46v28m1 -61v34m1 -67v34m1 -62v29m1 -48v20m1 -26v7m1 -7v8m1 -1v21m1 -1v29m1 -1v34m1 -1v34m1 -1v28m1 -1v18m1 -1v5m1 -11v11m1 -32v22m1 -51v30m1 -64v35m1 -67v33m1 -58v26m1 -41v16m1 -19v4m1 -3v12m1 -1v24m1 -1v32m1 -1v34m1 -1v33m1 -1v25m1 -1v13m1 -1v3m1 -16v14m1 -39v26m1 -57v32m1 -66v35m1 -65v31m1 -54v24m1 -34v11m1 -12v4m1 -1v17m1 -1v26m1 -1v34m1 -1v34m1 -1v30m1 -1v22m1 -1v10m1 -6v6m1 -23v18m1 -45v28m1 -61v34m1 -67v34m1 -63v30m1 -48v19m1 -26v8m1 -8v8m1 -1v20m1 -1v29m1 -1v35m1 -1v33m1 -1v28m1 -1v18m1 -1v6m1 -10v10m1 -31v22m1 -52v31m1 -64v34m1 -66v33m1 -59v27m1 -42v16m1 -19v4m1 -3v12m1 -1v24m1 -1v31m1 -1v35m1 -1v32m1 -1v25m1 -1v14m1 -1v3m1 -16v14m1 -38v25m1 -56v32m1 -66v35m1 -66v32m1 -54v23m1 -34v12m1 -13v4m1 -1v16m1 -1v27m1 -1v33m1 -1v34m1 -1v31m1 -1v22m1 -1v10m1 -6v6m1 -23v18m1 -45v28m1 -60v33m1 -67v35m1 -63v29m1 -48v20m1 -27v8m1 -8v8m1 -1v20m1 -1v29m1 -1v34m1 -1v34m1 -1v28m1 -1v18m1 -1v6m1 -10v10m1 -31v22m1 -51v30m1 -64v35m1 -67v33m1 -59v27m1 -42v16m1 -19v4m1 -3v12m1 -1v23m1 -1v31m1 -1v35m1 -1v33m1 -1v25m1 -1v14m1 -1v3m1 -15v13m1 -38v26m1 -57v32m1 -65v34m1 -65v32m1 -55v24m1 -35v12m1 -13v4m1 -1v16m1 -1v26m1 -1v33m1 -1v35m1 -1v30m1 -1v23m1 -1v10m1 -5v5m1 -22v18m1 -45v28m1 -61v34m1 -67v34m1 -63v30m1 -49v20m1 -27v8m1 -8v7m1 -1v20m1 -1v29m1 -1v34m1 -1v34m1 -1v28m1 -1v19m1 -1v6m1 -10v10m1 -30v21m1 -50v30m1 -64v35m1 -67v33m1 -59v27m1 -43v17m1 -20v4m1 -3v11m1 -1v23m1 -1v32m1 -1v34m1 -1v33m1 -1v25m1 -1v15m1 -1v3m1 -15v14m1 -38v25m1 -56v32m1 -66v35m1 -66v32m1 -55v24m1 -35v12m1 -13v4m1 -1v15m1 -1v27m1 -1v33m1 -1v34m1 -1v31m1 -1v22m1 -1v11m1 -5v5m1 -22v18m1 -45v28m1 -60v33m1 -66v34m1 -63v30m1 -50v21m1 -28v8m1 -8v7m1 -1v20m1 -1v29m1 -1v34m1 -1v34m1 -1v28m1 -1v19m1 -1v6m1 -9v9m1 -30v22m1 -51v30m1 -63v34m1 -67v34m1 -60v27m1 -42v16m1 -20v5m1 -4v11m1 -1v23m1 -1v31m1 -1v35m1 -1v32m1 -1v26m1 -1v15m1 -1v3m1 -15v14m1 -37v24m1 -55v32m1 -66v35m1 -66v32m1 -55v24m1 -36v13m1 -14v3m1 -1v16m1 -1v26m1 -1v33m1 -1v35m1 -1v30m1 -1v23m1 -1v11m1 -5v5m1 -21v17m1 -44v28m1 -60v33m1 -67v35m1 -64v30m1 -49v20m1 -28v9m1 -9v7m1 -1v19m1 -1v29m1 -1v34m1 -1v34m1 -1v29m1 -1v19m1 -1v6m1 -9v9m1 -29v21m1 -50v30m1 -64v35m1 -67v33m1 -59v27m1 -43v17m1 -21v5m1 -5v12m1 -1v22m1 -1v31m1 -1v35m1 -1v33m1 -1v26m1 -1v15m1 -1v3m1 -14v13m1 -37v25m1 -56v32m1 -65v34m1 -65v32m1 -56v25m1 -37v13m1 -14v3m1 -1v16m1 -1v25m1 -1v33m1 -1v35m1 -1v31m1 -1v23m1 -1v11m1 -5v5m1 -21v17m1 -43v27m1 -60v34m1 -67v34m1 -63v30m1 -50v21m1 -29v9m1 -9v7m1 -1v19m1 -1v28m1 -1v34m1 -1v34m1 -1v29m1 -1v19m1 -1v7m1 -9v9m1 -29v21m1 -50v30m1 -63v34m1 -66v33m1 -60v28m1 -44v17m1 -21v5m1 -5v11m1 -1v23m1 -1v31m1 -1v34m1 -1v33m1 -1v26m1 -1v16m1 -1v3m1 -14v13m1 -36v24m1 -55v32m1 -66v35m1 -66v32m1 -55v24m1 -37v14m1 -15v3m1 -1v15m1 -1v26m1 -1v33m1 -1v34m1 -1v31m1 -1v23m1 -1v12m1 -5v5m1 -21v17m1 -43v27m1 -59v33m1 -66v34m1 -64v31m1 -51v21m1 -29v9m1 -9v6m1 -1v19m1 -1v29m1 -1v34m1 -1v34m1 -1v29m1 -1v19m1 -1v7m1 -8v8m1 -28v21m1 -50v30m1 -63v34m1 -67v34m1 -60v27m1 -44v18m1 -22v5m1 -5v11m1 -1v22m1 -1v31m1 -1v35m1 -1v33m1 -1v26m1 -1v15m1 -1v4m1 -14v13m1 -36v24m1 -54v31m1 -65v35m1 -66v32m1 -56v25m1 -38v14m1 -15v3m1 -1v15m1 -1v25m1 -1v33m1 -1v35m1 -1v31m1 -1v23m1 -1v11m1 -3v4m1 -20v17m1 -43v27m1 -59v33m1 -67v35m1 -64v30m1 -51v22m1 -30v9m1 -9v6m1 -1v19m1 -1v28m1 -1v34m1 -1v34m1 -1v29m1 -1v20m1 -1v7m1 -8v8m1 -28v21m1 -49v29m1 -62v34m1 -67v34m1 -61v28m1 -45v18m1 -22v5m1 -5v11m1 -1v22m1 -1v30m1 -1v35m1 -1v33m1 -1v26m1 -1v16m1 -1v4m1 -13v12m1 -35v24m1 -55v32m1 -65v34m1 -66v33m1 -57v25m1 -37v13m1 -15v3m1 -1v14m1 -1v26m1 -1v32m1 -1v35m1 -1v31m1 -1v24m1 -1v11m1 -3v4m1 -20v17m1 -43v27m1 -59v33m1 -66v34m1 -64v31m1 -51v21m1 -30v10m1 -10v6m1 -1v18m1 -1v28m1 -1v34m1 -1v34m1 -1v30m1 -1v20m1 -1v7m1 -8v8m1 -27v20m1 -49v30m1 -63v34m1 -66v33m1 -60v28m1 -45v18m1 -23v6m1 -6v10m1 -1v22m1 -1v31m1 -1v34m1 -1v33m1 -1v27m1 -1v16m1 -1v4m1 -13v12m1 -35v24m1 -54v31m1 -65v35m1 -66v32m1 -56v25m1 -38v14m1 -16v3m1 -1v14m1 -1v25m1 -1v33m1 -1v34m1 -1v32m1 -1v23m1 -1v12m1 -3v4m1 -19v16m1 -42v27m1 -59v33m1 -67v35m1 -64v30m1 -51v22m1 -31v10m1 -10v6m1 -1v18m1 -1v28m1 -1v34m1 -1v34m1 -1v29m1 -1v20m1 -1v8m1 -8v8m1 -27v20m1 -48v29m1 -62v34m1 -67v34m1 -61v28m1 -45v18m1 -23v6m1 -6v10m1 -1v22m1 -1v30m1 -1v35m1 -1v33m1 -1v27m1 -1v16m1 -1v4m1 -13v12m1 -34v23m1 -54v32m1 -65v34m1 -66v33m1 -57v25m1 -38v14m1 -16v3m1 -1v14m1 -1v25m1 -1v32m1 -1v35m1 -1v31m1 -1v24m1 -1v12m1 -3v4m1 -19v16m1 -41v26m1 -58v33m1 -67v35m1 -65v31m1 -52v22m1 -31v10m1 -10v5m1 -1v18m1 -1v28m1 -1v34m1 -1v34m1 -1v30m1 -1v20m1 -1v8m1 -7v7m1 -26v20m1 -48v29m1 -62v34m1 -67v34m1 -62v29m1 -46v18m1 -23v6m1 -6v10m1 -1v21m1 -1v31m1 -1v34m1 -1v33m1 -1v27m1 -1v17m1 -1v4m1 -12v11m1 -34v24m1 -54v31m1 -64v34m1 -66v33m1 -58v26m1 -39v14m1 -16v3m1 -2v14m1 -1v25m1 -1v32m1 -1v35m1 -1v32m1 -1v24m1 -1v12m1 -3v4m1 -18v15m1 -41v27m1 -59v33m1 -66v34m1 -64v31m1 -52v22m1 -32v11m1 -11v5m1 -1v18m1 -1v28m1 -1v33m1 -1v35m1 -1v29m1 -1v21m1 -1v8m1 -7v7m1 -26v20m1 -48v29m1 -62v34m1 -67v34m1 -61v28m1 -46v19m1 -24v6m1 -6v9m1 -1v22m1 -1v30m1 -1v34m1 -1v34m1 -1v27m1 -1v17m1 -1v4m1 -12v11m1 -33v23m1 -53v31m1 -65v35m1 -66v32m1 -57v26m1 -40v15m1 -17v3m1 -2v14m1 -1v24m1 -1v33m1 -1v34m1 -1v32m1 -1v24m1 -1v13m1 -3v4m1 -18v15m1 -40v26m1 -58v33m1 -67v35m1 -64v30m1 -52v23m1 -33v11m1 -11v5m1 -1v17m1 -1v28m1 -1v34m1 -1v34m1 -1v30m1 -1v20m1 -1v9m1 -7v7m1 -25v19m1 -47v29m1 -62v34m1 -67v34m1 -62v29m1 -47v19m1 -24v6m1 -6v9m1 -1v21m1 -1v30m1 -1v35m1 -1v33m1 -1v27m1 -1v17m1 -1v5m1 -12v12m1 -33v22m1 -53v32m1 -65v34m1 -66v33m1 -58v26m1 -40v15m1 -17v3m1 -2v13m1 -1v25m1 -1v32m1 -1v35m1 -1v32m1 -1v24m1 -1v13m1 -2v3m1 -18v16m1 -41v26m1 -57v32m1 -66v35m1 -65v31m1 -53v23m1 -33v11m1 -11v5m1 -1v17m1 -1v27m1 -1v34m1 -1v34m1 -1v30m1 -1v21m1 -1v9m1 -7v7m1 -25v19m1 -46v28m1 -61v34m1 -67v34m1 -62v29m1 -47v19m1 -25v7m1 -7v9m1 -1v21m1 -1v30m1 -1v34m1 -1v33m1 -1v28m1 -1v17m1 -1v5m1 -11v11m1 -33v23m1 -53v31m1 -64v34m1 -66v33m1 -58v26m1 -41v16m1 -18v3m1 -2v13m1 -1v24m1 -1v32m1 -1v35m1 -1v32m1 -1v24m1 -1v14m1 -2v3m1 -17v15m1 -40v26m1 -58v33m1 -66v34m1 -64v31m1 -53v23m1 -34v12m1 -12v5m1 -1v17m1 -1v27m1 -1v33m1 -1v35m1 -1v30m1 -1v21m1 -1v9m1 -6v6m1 -24v19m1 -47v29m1 -62v34m1 -67v34m1 -62v29m1 -47v19m1 -25v7m1 -7v9m1 -1v20m1 -1v30m1 -1v34m1 -1v34m1 -1v27m1 -1v18m1 -1v5m1 -11v11m1 -32v22m1 -52v31m1 -65v35m1 -67v33m1 -58v26m1 -40v15m1 -18v4m1 -3v13m1 -1v24m1 -1v32m1 -1v34m1 -1v32m1 -1v25m1 -1v14m1 -2v3m1 -17v15m1 -39v25m1 -57v33m1 -67v35m1 -65v31m1 -53v23m1 -33v11m1 -12v4m1 -1v17m1 -1v27m1 -1v34m1 -1v34m1 -1v30m1 -1v22m1 -1v9m1 -6v6m1 -24v19m1 -46v28m1 -61v34m1 -67v34m1 -62v29m1 -48v20m1 -26v7m1 -7v8m1 -1v21m1 -1v29m1 -1v35m1 -1v33m1 -1v28m1 -1v18m1 -1v5m1 -11v11m1 -32v22m1 -52v31m1 -64v34m1 -66v33m1 -59v27m1 -41v15m1 -18v4m1 -3v12m1 -1v24m1 -1v32m1 -1v35m1 -1v32m1 -1v25m1 -1v14m1 -2v3m1 -16v14m1 -39v26m1 -57v32m1 -66v35m1 -65v31m1 -54v24m1 -34v11m1 -12v4m1 -1v17m1 -1v27m1 -1v33m1 -1v34m1 -1v31m1 -1v21m1 -1v10m1 -6v6m1 -23v18m1 -46v29m1 -61v33m1 -67v35m1 -63v29m1 -48v20m1 -26v7m1 -7v8m1 -1v20m1 -1v30m1 -1v34m1 -1v34m1 -1v28m1 -1v18m1 -1v5m1 -10v10m1 -31v22m1 -52v31m1 -64v34m1 -67v34m1 -59v26m1 -41v16m1 -19v4m1 -3v12m1 -1v24m1 -1v31m1 -1v35m1 -1v32m1 -1v25m1 -1v14m1 -1v3m1 -16v14m1 -38v25m1 -57v33m1 -66v34m1 -65v32m1 -54v23m1 -34v12m1 -13v4m1 -1v16m1 -1v27m1 -1v33m1 -1v35m1 -1v30m1 -1v22m1 -1v10m1 -6v6m1 -23v18m1 -45v28m1 -61v34m1 -67v34m1 -62v29m1 -48v20m1 -27v8m1 -8v8m1 -1v20m1 -1v29m1 -1v34m1 -1v34m1 -1v28m1 -1v18m1 -1v6m1 -10v10m1 -31v22m1 -51v30m1 -64v35m1 -67v33m1 -59v27m1 -42v16m1 -19v4m1 -3v12m1 -1v23m1 -1v32m1 -1v34m1 -1v33m1 -1v25m1 -1v14m1 -1v3m1 -16v14m1 -38v25m1 -56v32m1 -66v35m1 -65v31m1 -54v24m1 -35v12m1 -13v4m1 -1v16m1 -1v26m1 -1v34m1 -1v34m1 -1v31m1 -1v22m1 -1v10m1 -5v5m1 -22v18m1 -45v28m1 -61v34m1 -67v34m1 -63v30m1 -49v20m1 -27v8m1 -8v7m1 -1v20m1 -1v29m1 -1v35m1 -1v33m1 -1v29m1 -1v18m1 -1v6m1 -10v10m1 -30v21m1 -51v31m1 -64v34m1 -66v33m1 -59v27m1 -43v17m1 -20v4m1 -3v11m1 -1v24m1 -1v31m1 -1v35m1 -1v32m1 -1v26m1 -1v14m1 -1v3m1 -15v14m1 -38v25m1 -56v32m1 -66v35m1 -66v32m1 -55v24m1 -35v12m1 -13v4m1 -1v15m1 -1v27m1 -1v33m1 -1v34m1 -1v31m1 -1v22m1 -1v11m1 -5v5m1 -22v18m1 -45v28m1 -60v33m1 -67v35m1 -63v29m1 -49v21m1 -28v8m1 -8v7m1 -1v20m1 -1v29m1 -1v34m1 -1v34m1 -1v28m1 -1v19m1 -1v6m1 -9v9m1 -30v22m1 -51v30m1 -63v34m1 -67v34m1 -60v27m1 -43v17m1 -20v4m1 -3v11m1 -1v23m1 -1v31m1 -1v35m1 -1v33m1 -1v25m1 -1v15m1 -1v3m1 -15v14m1 -38v25m1 -56v32m1 -65v34m1 -65v32m1 -55v24m1 -36v13m1 -14v4m1 -1v15m1 -1v26m1 -1v33m1 -1v35m1 -1v31m1 -1v22m1 -1v11m1 -5v5m1 -22v18m1 -44v27m1 -60v34m1 -67v34m1 -63v30m1 -49v20m1 -28v9m1 -9v7m1 -1v19m1 -1v29m1 -1v34m1 -1v34m1 -1v29m1 -1v19m1 -1v6m1 -9v9m1 -29v21m1 -50v30m1 -64v35m1 -67v33m1 -59v27m1 -43v17m1 -21v5m1 -5v12m1 -1v23m1 -1v31m1 -1v34m1 -1v33m1 -1v26m1 -1v15m1 -1v3m1 -14v13m1 -37v25m1 -56v32m1 -66v35m1 -66v32m1 -55v24m1 -36v13m1 -14v3m1 -1v16m1 -1v26m1 -1v33m1 -1v34m1 -1v31m1 -1v23m1 -1v11m1 -5v5m1 -21v17m1 -44v28m1 -60v33m1 -66v34m1 -63v30m1 -50v21m1 -29v9m1 -9v7m1 -1v19m1 -1v29m1 -1v34m1 -1v34m1 -1v28m1 -1v19m1 -1v7m1 -9v9m1 -29v21m1 -50v30m1 -63v34m1 -67v34m1 -60v27m1 -43v17m1 -21v5m1 -5v11m1 -1v23m1 -1v31m1 -1v35m1 -1v32m1 -1v26m1 -1v16m1 -1v3m1 -14v13m1 -36v24m1 -55v32m1 -66v35m1 -66v32m1 -56v25m1 -37v13m1 -14v3m1 -1v15m1 -1v26m1 -1v33m1 -1v34m1 -1v32m1 -1v22m1 -1v12m1 -5v5m1 -21v17m1 -43v27m1 -59v33m1 -67v35m1 -64v30m1 -50v21m1 -29v9m1 -9v6m1 -1v19m1 -1v29m1 -1v34m1 -1v34m1 -1v29m1 -1v19m1 -1v7m1 -9v9m1 -28v20m1 -49v30m1 -63v34m1 -67v34m1 -61v28m1 -44v17m1 -21v5m1 -5v11m1 -1v22m1 -1v31m1 -1v35m1 -1v33m1 -1v26m1 -1v15m1 -1v4m1 -14v13m1 -36v24m1 -55v32m1 -65v34m1 -65v32m1 -56v25m1 -38v14m1 -15v3m1 -1v15m1 -1v26m1 -1v32m1 -1v35m1 -1v31m1 -1v23m1 -1v11m1 -3v4m1 -20v17m1 -43v27m1 -60v34m1 -67v34m1 -63v30m1 -51v22m1 -30v9m1 -9v6m1 -1v19m1 -1v28m1 -1v34m1 -1v34m1 -1v29m1 -1v20m1 -1v7m1 -8v8m1 -28v21m1 -49v29m1 -63v35m1 -67v33m1 -60v28m1 -45v18m1 -22v5m1 -5v11m1 -1v22m1 -1v31m1 -1v34m1 -1v33m1 -1v27m1 -1v15m1 -1v4m1 -13v12m1 -35v24m1 -55v32m1 -66v35m1 -66v32m1 -56v25m1 -38v14m1 -15v3m1 -1v14m1 -1v26m1 -1v32m1 -1v35m1 -1v31m1 -1v24m1 -1v11m1 -3v4m1 -20v17m1 -43v27m1 -59v33m1 -66v34m1 -64v31m1 -51v21m1 -30v10m1 -10v6m1 -1v18m1 -1v29m1 -1v34m1 -1v34m1 -1v29m1 -1v20m1 -1v7m1 -8v8m1 -27v20m1 -49v30m1 -63v34m1 -67v34m1 -61v28m1 -45v18m1 -22v5m1 -5v10m1 -1v22m1 -1v31m1 -1v35m1 -1v33m1 -1v26m1 -1v16m1 -1v4m1 -13v12m1 -35v24m1 -54v31m1 -65v35m1 -66v32m1 -56v25m1 -38v14m1 -16v3m1 -1v14m1 -1v25m1 -1v33m1 -1v34m1 -1v32m1 -1v23m1 -1v12m1 -3v4m1 -19v16m1 -42v27m1 -59v33m1 -67v35m1 -64v30m1 -51v22m1 -31v10m1 -10v6m1 -1v18m1 -1v28m1 -1v34m1 -1v34m1 -1v29m1 -1v20m1 -1v8m1 -8v8m1 -27v20m1 -48v29m1 -62v34m1 -67v34m1 -61v28m1 -45v18m1 -23v6m1 -6v10m1 -1v22m1 -1v30m1 -1v35m1 -1v33m1 -1v27m1 -1v16m1 -1v4m1 -13v12m1 -34v23m1 -54v32m1 -65v34m1 -66v33m1 -57v25m1 -38v14m1 -16v3m1 -1v14m1 -1v25m1 -1v32m1 -1v35m1 -1v31m1 -1v24m1 -1v12m1 -3v4m1 -19v16m1 -42v27m1 -59v33m1 -66v34m1 -64v31m1 -52v22m1 -31v10m1 -10v6m1 -1v17m1 -1v28m1 -1v34m1 -1v34m1 -1v30m1 -1v20m1 -1v8m1 -7v7m1 -26v20m1 -49v30m1 -63v34m1 -66v33m1 -61v29m1 -46v18m1 -23v6m1 -6v10m1 -1v21m1 -1v31m1 -1v34m1 -1v33m1 -1v27m1 -1v17m1 -1v4m1 -12v11m1 -34v24m1 -54v31m1 -65v35m1 -66v32m1 -57v26m1 -39v14m1 -16v3m1 -1v13m1 -1v25m1 -1v32m1 -1v35m1 -1v32m1 -1v24m1 -1v12m1 -3v4m1 -19v16m1 -41v26m1 -58v33m1 -66v34m1 -64v31m1 -52v22m1 -32v11m1 -11v5m1 -1v18m1 -1v28m1 -1v33m1 -1v35m1 -1v29m1 -1v21m1 -1v8m1 -7v7m1 -26v20m1 -48v29m1 -62v34m1 -67v34m1 -61v28m1 -46v19m1 -24v6m1 -6v9m1 -1v22m1 -1v30m1 -1v35m1 -1v33m1 -1v27m1 -1v17m1 -1v4m1 -12v11m1 -33v23m1 -53v31m1 -65v35m1 -67v33m1 -57v25m1 -39v15m1 -17v3m1 -2v14m1 -1v25m1 -1v32m1 -1v34m1 -1v32m1 -1v24m1 -1v13m1 -3v4m1 -18v15m1 -40v26m1 -58v33m1 -67v35m1 -65v31m1 -52v22m1 -32v11m1 -11v5m1 -1v18m1 -1v27m1 -1v34m1 -1v34m1 -1v30m1 -1v21m1 -1v8m1 -7v7m1 -25v19m1 -47v29m1 -62v34m1 -67v34m1 -62v29m1 -47v19m1 -24v6m1 -6v9m1 -1v21m1 -1v30m1 -1v35m1 -1v33m1 -1v27m1 -1v17m1 -1v5m1 -12v12m1 -34v23m1 -53v31m1 -64v34m1 -66v33m1 -58v26m1 -40v15m1 -17v3m1 -2v14m1 -1v24m1 -1v32m1 -1v35m1 -1v32m1 -1v24m1 -1v13m1 -2v3m1 -18v16m1 -41v26m1 -58v33m1 -66v34m1 -64v31m1 -53v23m1 -33v11m1 -11v5m1 -1v17m1 -1v28m1 -1v33m1 -1v34m1 -1v30m1 -1v21m1 -1v9m1 -7v7m1 -25v19m1 -47v29m1 -62v34m1 -67v34m1 -61v28m1 -46v19m1 -25v7m1 -7v9m1 -1v21m1 -1v30m1 -1v34m1 -1v34m1 -1v27m1 -1v17m1 -1v5m1 -11v11m1 -33v23m1 -53v31m1 -65v35m1 -66v32m1 -57v26m1 -41v16m1 -18v3m1 -2v13m1 -1v25m1 -1v31m1 -1v35m1 -1v32m1 -1v25m1 -1v13m1 -2v3m1 -17v15m1 -40v26m1 -58v33m1 -67v35m1 -65v31m1 -52v22m1 -33v12m1 -12v5m1 -1v17m1 -1v27m1 -1v33m1 -1v35m1 -1v30m1 -1v21m1 -1v9m1 -6v6m1 -24v19m1 -47v29m1 -62v34m1 -67v34m1 -62v29m1 -47v19m1 -25v7m1 -7v9m1 -1v20m1 -1v30m1 -1v35m1 -1v33m1 -1v28m1 -1v17m1 -1v5m1 -11v11m1 -33v23m1 -52v30m1 -64v35m1 -67v33m1 -58v26m1 -41v16m1 -18v3m1 -2v13m1 -1v24m1 -1v32m1 -1v34m1 -1v33m1 -1v24m1 -1v14m1 -2v3m1 -17v15m1 -40v26m1 -57v32m1 -66v35m1 -65v31m1 -53v23m1 -33v11m1 -12v4m1 -1v17m1 -1v27m1 -1v34m1 -1v34m1 -1v30m1 -1v22m1 -1v9m1 -6v6m1 -24v19m1 -46v28m1 -61v34m1 -67v34m1 -62v29m1 -48v20m1 -26v7m1 -7v8m1 -1v21m1 -1v30m1 -1v34m1 -1v33m1 -1v28m1 -1v18m1 -1v5m1 -11v11m1 -32v22m1 -52v31m1 -64v34m1 -66v33m1 -59v27m1 -41v15m1 -18v4m1 -3v12m1 -1v24m1 -1v32m1 -1v35m1 -1v32m1 -1v25m1 -1v14m1 -2v3m1 -17v15m1 -39v25m1 -57v33m1 -66v34m1 -65v32m1 -54v23m1 -33v11m1 -12v4m1 -1v17m1 -1v27m1 -1v33m1 -1v35m1 -1v30m1 -1v21m1 -1v10m1 -6v6m1 -23v18m1 -46v29m1 -62v34m1 -67v34m1 -62v29m1 -48v20m1 -26v7m1 -7v8m1 -1v20m1 -1v30m1 -1v34m1 -1v34m1 -1v28m1 -1v18m1 -1v5m1 -10v10m1 -32v23m1 -52v30m1 -64v35m1 -67v33m1 -58v26m1 -41v16m1 -19v4m1 -3v12m1 -1v24m1 -1v32m1 -1v34m1 -1v32m1 -1v25m1 -1v14m1 -1v3m1 -16v14m1 -38v25m1 -57v33m1 -67v35m1 -65v31m1 -53v23m1 -34v12m1 -13v4m1 -1v16m1 -1v27m1 -1v33m1 -1v35m1 -1v30m1 -1v22m1 -1v10m1 -6v6m1 -23v18m1 -45v28m1 -61v34m1 -67v34m1 -62v29m1 -48v20m1 -27v8m1 -8v8" stroke="#ff6929"/><path d="M33.5 443v1m1 -23v23m1 -47v25m1 -44v20m1 -26v30m1 -1v43m1 -1v1m1 -1v1m1 -1v1m1 -1v1m1 -1v1m1 -1v1m1 -1v1m1 -1v1m1 -1v1m1 -1v1m1 -1v1m1 -1v1m1 -1v1m1 -1v1m1 -1v1m1 -1v1m1 -1v1m1 -1v1m1 -1v1m1 -1v1m1 -1v1m1 -1v1m1 -1v1m1 -1v1m1 -1v1m1 -1v1m1 -1v1m1 -1v1m1 -2v2m1 -3v2m1 -3v2m1 -4v3m1 -3v1m1 -1v2m1 -1v4m1 -1v3m1 -1v3m1 -1v3m1 -1v1m1 -1v2m1 -3v2m1 -4v3m1 -5v3m1 -5v3m1 -5v3m1 -5v3m1 -3v1m1 -1v1m1 -1v3m1 -1v3m1 -1v3m1 -1v3m1 -1v3m1 -1v2m1 -1v2m1 -2v2m1 -4v3m1 -5v3m1 -5v3m1 -5v3m1 -5v3m1 -4v2m1 -2v1m1 -1v2m1 -1v3m1 -1v3m1 -1v3m1 -1v3m1 -1v3m1 -1v2m1 -2v2m1 -3v2m1 -4v3m1 -5v3m1 -5v3m1 -5v3m1 -5v3m1 -3v1m1 -1v1m1 -1v3m1 -1v3m1 -1v3m1 -1v3m1 -1v3m1 -1v2m1 -1v2m1 -2v1m1 -3v3m1 -6v4m1 -8v5m1 -10v6m1 -9v4m1 -5v2m1 -1v3m1 -1v5m1 -1v5m1 -1v4m1 -1v4m1 -1v3m1 -1v1m1 -1v1m1 -2v2m1 -4v3m1 -6v4m1 -6v3m1 -5v3m1 -5v3m1 -3v1m1 -1v1m1 -1v2m1 -1v3m1 -1v4m1 -1v3m1 -1v3m1 -1v2m1 -1v2m1 -2v2m1 -3v2m1 -4v3m1 -6v4m1 -6v3m1 -5v3m1 -4v2m1 -2v1m1 -1v2m1 -1v2m1 -1v3m1 -1v3m1 -1v4m1 -1v2m1 -1v2m1 -1v2m1 -2v1m1 -3v3m1 -5v3m1 -5v3m1 -5v3m1 -5v3m1 -4v2m1 -2v1m1 -1v2m1 -1v3m1 -1v3m1 -1v3m1 -1v3m1 -1v3m1 -1v1m1 -1v2m1 -3v2m1 -4v3m1 -5v3m1 -5v3m1 -5v3m1 -4v2m1 -3v2m1 -2v1m1 -1v2m1 -1v3m1 -1v4m1 -1v3m1 -1v3m1 -1v2m1 -1v1m1 -1v1m1 -2v2m1 -4v3m1 -6v4m1 -6v3m1 -5v3m1 -4v2m1 -2v1m1 -1v2m1 -1v2m1 -1v3m1 -1v3m1 -1v3m1 -1v3m1 -1v2m1 -1v1m1 -1v1m1 -3v3m1 -5v3m1 -5v3m1 -5v3m1 -5v3m1 -4v2m1 -2v1m1 -1v2m1 -1v3m1 -1v3m1 -1v3m1 -1v3m1 -1v3m1 -1v1m1 -1v1m1 -2v2m1 -4v3m1 -5v3m1 -5v3m1 -5v3m1 -4v2m1 -3v2m1 -2v1m1 -1v2m1 -1v3m1 -1v3m1 -1v4m1 -1v3m1 -1v2m1 -1v1m1 -1v1m1 -2v2m1 -4v3m1 -5v3m1 -6v4m1 -6v3m1 -4v2m1 -2v1m1 -1v2m1 -1v2m1 -1v3m1 -1v3m1 -1v3m1 -1v3m1 -1v2m1 -1v1m1 -1v1m1 -3v3m1 -5v3m1 -5v3m1 -5v3m1 -5v3m1 -4v2m1 -2v1m1 -1v2m1 -1v3m1 -1v3m1 -1v3m1 -1v3m1 -1v3m1 -1v1m1 -1v1m1 -2v2m1 -3v2m1 -5v4m1 -6v3m1 -5v3m1 -4v2m1 -3v2m1 -2v1m1 -1v2m1 -1v3m1 -1v3m1 -1v4m1 -1v3m1 -1v2m1 -1v1m1 -1v1m1 -2v2m1 -4v3m1 -5v3m1 -6v4m1 -5v2m1 -4v3m1 -3v1m1 -1v2m1 -1v2m1 -1v3m1 -1v3m1 -1v3m1 -1v3m1 -1v2m1 -1v1m1 -1v1m1 -3v3m1 -5v3m1 -5v3m1 -7v5m1 -10v6m1 -12v7m1 -11v5m1 -5v3m1 -1v6m1 -1v9m1 -1v11m1 -1v10m1 -1v8m1 -1v5m1 -1v2m1 -6v5m1 -13v9m1 -19v11m1 -22v12m1 -21v10m1 -17v8m1 -11v4m1 -4v2m1 -1v7m1 -1v9m1 -1v11m1 -1v12m1 -1v10m1 -1v7m1 -1v4m1 -3v3m1 -9v7m1 -16v10m1 -21v12m1 -22v11m1 -20v10m1 -16v7m1 -9v3m1 -3v4m1 -1v8m1 -1v10m1 -1v12m1 -1v11m1 -1v10m1 -1v6m1 -1v2m1 -4v4m1 -11v8m1 -18v11m1 -22v12m1 -23v12m1 -20v9m1 -13v5m1 -6v2m1 -2v5m1 -1v9m1 -1v11m1 -1v13m1 -1v11m1 -1v8m1 -1v5m1 -1v2m1 -7v6m1 -14v9m1 -20v12m1 -23v12m1 -22v11m1 -18v8m1 -11v4m1 -5v3m1 -1v6m1 -1v10m1 -1v12m1 -1v12m1 -1v11m1 -1v8m1 -1v3m1 -3v3m1 -9v7m1 -16v10m1 -21v12m1 -24v13m1 -22v10m1 -16v7m1 -9v3m1 -3v4m1 -1v8m1 -1v10m1 -1v13m1 -1v12m1 -1v10m1 -1v6m1 -1v3m1 -5v4m1 -11v8m1 -19v12m1 -23v12m1 -23v12m1 -21v10m1 -15v6m1 -6v1m1 -1v5m1 -1v9m1 -1v12m1 -1v13m1 -1v11m1 -1v9m1 -1v5m1 -1v2m1 -7v6m1 -14v9m1 -20v12m1 -24v13m1 -23v11m1 -19v9m1 -12v4m1 -5v3m1 -1v6m1 -1v10m1 -1v13m1 -1v12m1 -1v11m1 -1v8m1 -1v4m1 -3v3m1 -9v7m1 -17v11m1 -22v12m1 -24v13m1 -22v10m1 -17v8m1 -10v3m1 -3v4m1 -1v8m1 -1v11m1 -1v13m1 -1v12m1 -1v10m1 -1v7m1 -1v2m1 -4v4m1 -12v9m1 -19v11m1 -23v13m1 -24v12m1 -21v10m1 -15v6m1 -7v2m1 -2v6m1 -1v9m1 -1v12m1 -1v12m1 -1v12m1 -1v10m1 -1v5m1 -1v2m1 -7v6m1 -15v10m1 -21v12m1 -24v13m1 -24v12m1 -19v8m1 -12v5m1 -5v2m1 -1v7m1 -1v10m1 -1v12m1 -1v13m1 -1v12m1 -1v8m1 -1v4m1 -3v3m1 -10v8m1 -17v10m1 -22v13m1 -25v13m1 -23v11m1 -17v7m1 -9v3m1 -3v3m1 -1v8m1 -1v12m1 -1v12m1 -1v13m1 -1v10m1 -1v7m1 -1v3m1 -5v5m1 -12v8m1 -19v12m1 -24v13m1 -24v12m1 -21v10m1 -16v7m1 -7v1m1 -1v5m1 -1v9m1 -1v12m1 -1v13m1 -1v12m1 -1v10m1 -1v5m1 -1v2m1 -7v6m1 -15v10m1 -21v12m1 -24v13m1 -24v12m1 -20v9m1 -12v4m1 -5v3m1 -1v6m1 -1v11m1 -1v12m1 -1v13m1 -1v12m1 -1v8m1 -1v4m1 -3v3m1 -9v7m1 -17v11m1 -23v13m1 -25v13m1 -23v11m1 -17v7m1 -10v4m1 -4v4m1 -1v8m1 -1v11m1 -1v13m1 -1v13m1 -1v10m1 -1v7m1 -1v3m1 -4v4m1 -12v9m1 -20v12m1 -24v13m1 -24v12m1 -21v10m1 -16v7m1 -8v2m1 -1v5m1 -1v9m1 -1v12m1 -1v13m1 -1v12m1 -1v10m1 -1v6m1 -2v2m1 -6v5m1 -14v10m1 -22v13m1 -25v13m1 -24v12m1 -20v9m1 -12v4m1 -5v2m1 -1v7m1 -1v10m1 -1v13m1 -1v13m1 -1v12m1 -1v8m1 -1v4m1 -3v3m1 -9v7m1 -17v11m1 -22v12m1 -24v13m1 -24v12m1 -18v7m1 -10v4m1 -4v4m1 -1v8m1 -1v11m1 -1v13m1 -1v13m1 -1v10m1 -1v8m1 -1v2m1 -4v4m1 -12v9m1 -19v11m1 -23v13m1 -25v13m1 -22v10m1 -16v7m1 -8v2m1 -2v5m1 -1v10m1 -1v12m1 -1v13m1 -1v12m1 -1v10m1 -1v6m1 -1v1m1 -6v6m1 -15v10m1 -21v12m1 -24v13m1 -24v12m1 -21v10m1 -14v5m1 -5v2m1 -1v7m1 -1v10m1 -1v13m1 -1v13m1 -1v11m1 -1v9m1 -1v4m1 -2v2m1 -9v8m1 -17v10m1 -22v13m1 -25v13m1 -24v12m1 -18v7m1 -10v4m1 -4v4m1 -1v7m1 -1v12m1 -1v13m1 -1v12m1 -1v11m1 -1v8m1 -1v2m1 -4v4m1 -11v8m1 -19v12m1 -24v13m1 -25v13m1 -22v10m1 -16v7m1 -8v2m1 -2v5m1 -1v9m1 -1v12m1 -1v14m1 -1v12m1 -1v10m1 -1v6m1 -1v1m1 -6v6m1 -15v10m1 -21v12m1 -24v13m1 -24v12m1 -21v10m1 -14v5m1 -5v2m1 -1v7m1 -1v10m1 -1v12m1 -1v14m1 -1v11m1 -1v9m1 -1v4m1 -2v2m1 -8v7m1 -17v11m1 -23v13m1 -25v13m1 -23v11m1 -18v8m1 -11v4m1 -4v3m1 -1v8m1 -1v11m1 -1v13m1 -1v13m1 -1v11m1 -1v8m1 -1v2m1 -4v4m1 -11v8m1 -19v12m1 -24v13m1 -25v13m1 -22v10m1 -16v7m1 -8v2m1 -2v5m1 -1v9m1 -1v12m1 -1v13m1 -1v13m1 -1v10m1 -1v6m1 -1v1m1 -6v6m1 -14v9m1 -21v13m1 -25v13m1 -24v12m1 -20v9m1 -14v6m1 -6v2m1 -1v6m1 -1v11m1 -1v12m1 -1v13m1 -1v12m1 -1v9m1 -1v4m1 -2v2m1 -8v7m1 -17v11m1 -23v13m1 -25v13m1 -23v11m1 -18v8m1 -11v4m1 -4v3m1 -1v8m1 -1v11m1 -1v13m1 -1v13m1 -1v11m1 -1v7m1 -1v3m1 -4v4m1 -11v8m1 -19v12m1 -24v13m1 -24v12m1 -22v11m1 -17v7m1 -8v2m1 -2v5m1 -1v9m1 -1v12m1 -1v13m1 -1v13m1 -1v10m1 -1v6m1 -1v1m1 -6v6m1 -14v9m1 -21v13m1 -25v13m1 -24v12m1 -20v9m1 -14v6m1 -6v2m1 -1v6m1 -1v10m1 -1v13m1 -1v13m1 -1v12m1 -1v9m1 -1v4m1 -2v2m1 -8v7m1 -17v11m1 -22v12m1 -25v14m1 -24v11m1 -18v8m1 -11v4m1 -4v3m1 -1v8m1 -1v11m1 -1v13m1 -1v13m1 -1v11m1 -1v7m1 -1v3m1 -4v4m1 -11v8m1 -18v11m1 -24v14m1 -25v12m1 -22v11m1 -17v7m1 -8v2m1 -2v5m1 -1v9m1 -1v12m1 -1v13m1 -1v12m1 -1v10m1 -1v7m1 -1v1m1 -5v5m1 -14v10m1 -21v12m1 -24v13m1 -25v13m1 -21v9m1 -14v6m1 -6v2m1 -1v6m1 -1v10m1 -1v13m1 -1v13m1 -1v12m1 -1v9m1 -1v4m1 -2v2m1 -8v7m1 -16v10m1 -22v13m1 -25v13m1 -24v12m1 -19v8m1 -11v4m1 -4v3m1 -1v8m1 -1v11m1 -1v13m1 -1v13m1 -1v11m1 -1v7m1 -1v3m1 -3v3m1 -11v9m1 -19v11m1 -23v13m1 -25v13m1 -23v11m1 -17v7m1 -8v2m1 -2v5m1 -1v9m1 -1v11m1 -1v14m1 -1v12m1 -1v10m1 -1v7m1 -1v1m1 -5v5m1 -14v10m1 -21v12m1 -24v13m1 -25v13m1 -21v9m1 -14v6m1 -6v2m1 -1v6m1 -1v10m1 -1v12m1 -1v14m1 -1v12m1 -1v9m1 -1v4m1 -2v2m1 -8v7m1 -16v10m1 -22v13m1 -25v13m1 -24v12m1 -19v8m1 -11v4m1 -4v3m1 -1v7m1 -1v11m1 -1v13m1 -1v13m1 -1v12m1 -1v7m1 -1v3m1 -3v3m1 -10v8m1 -19v12m1 -24v13m1 -25v13m1 -23v11m1 -17v7m1 -8v2m1 -2v5m1 -1v8m1 -1v12m1 -1v13m1 -1v13m1 -1v10m1 -1v6m1 -1v2m1 -5v5m1 -14v10m1 -21v12m1 -24v13m1 -24v12m1 -21v10m1 -15v6m1 -6v2m1 -1v6m1 -1v10m1 -1v12m1 -1v13m1 -1v12m1 -1v9m1 -1v5m1 -2v2m1 -8v7m1 -16v10m1 -22v13m1 -25v13m1 -24v12m1 -19v8m1 -11v4m1 -4v3m1 -1v7m1 -1v11m1 -1v13m1 -1v13m1 -1v11m1 -1v8m1 -1v3m1 -3v3m1 -10v8m1 -19v12m1 -24v13m1 -25v13m1 -22v10m1 -16v7m1 -9v3m1 -3v4m1 -1v9m1 -1v12m1 -1v13m1 -1v13m1 -1v10m1 -1v6m1 -1v2m1 -5v5m1 -13v9m1 -21v13m1 -25v13m1 -24v12m1 -21v10m1 -14v5m1 -6v2m1 -1v6m1 -1v9m1 -1v13m1 -1v13m1 -1v12m1 -1v9m1 -1v5m1 -2v2m1 -7v6m1 -16v11m1 -23v13m1 -25v13m1 -23v11m1 -19v9m1 -12v4m1 -4v3m1 -1v7m1 -1v11m1 -1v13m1 -1v13m1 -1v11m1 -1v8m1 -1v3m1 -3v3m1 -10v8m1 -18v11m1 -24v14m1 -25v12m1 -22v11m1 -17v7m1 -9v3m1 -3v4m1 -1v9m1 -1v12m1 -1v13m1 -1v13m1 -1v10m1 -1v6m1 -1v2m1 -5v5m1 -13v9m1 -20v12m1 -25v14m1 -25v12m1 -21v10m1 -14v5m1 -6v2m1 -1v5m1 -1v10m1 -1v13m1 -1v13m1 -1v12m1 -1v9m1 -1v5m1 -2v2m1 -7v6m1 -16v11m1 -22v12m1 -24v13m1 -24v12m1 -20v9m1 -12v4m1 -4v3m1 -1v7m1 -1v11m1 -1v13m1 -1v13m1 -1v11m1 -1v8m1 -1v3m1 -3v3m1 -10v8m1 -18v11m1 -23v13m1 -25v13m1 -23v11m1 -17v7m1 -9v3m1 -3v4m1 -1v9m1 -1v12m1 -1v13m1 -1v12m1 -1v11m1 -1v6m1 -1v2m1 -5v5m1 -13v9m1 -20v12m1 -24v13m1 -25v13m1 -22v10m1 -14v5m1 -6v2m1 -1v5m1 -1v10m1 -1v12m1 -1v14m1 -1v12m1 -1v9m1 -1v5m1 -2v2m1 -7v6m1 -15v10m1 -22v13m1 -25v13m1 -24v12m1 -20v9m1 -12v4m1 -4v3m1 -1v7m1 -1v11m1 -1v12m1 -1v14m1 -1v11m1 -1v8m1 -1v3m1 -3v3m1 -10v8m1 -18v11m1 -23v13m1 -25v13m1 -23v11m1 -17v7m1 -9v3m1 -3v4m1 -1v9m1 -1v11m1 -1v13m1 -1v13m1 -1v11m1 -1v6m1 -1v2m1 -5v5m1 -13v9m1 -20v12m1 -24v13m1 -25v13m1 -21v9m1 -14v6m1 -7v2m1 -1v5m1 -1v10m1 -1v12m1 -1v13m1 -1v13m1 -1v9m1 -1v5m1 -2v2m1 -7v6m1 -15v10m1 -22v13m1 -25v13m1 -24v12m1 -20v9m1 -12v4m1 -4v3m1 -1v7m1 -1v10m1 -1v13m1 -1v13m1 -1v12m1 -1v8m1 -1v3m1 -3v3m1 -10v8m1 -18v11m1 -23v13m1 -25v13m1 -23v11m1 -17v7m1 -9v3m1 -3v4m1 -1v8m1 -1v12m1 -1v13m1 -1v13m1 -1v10m1 -1v7m1 -1v2m1 -5v5m1 -13v9m1 -20v12m1 -24v13m1 -24v12m1 -21v10m1 -15v6m1 -7v2m1 -2v6m1 -1v10m1 -1v12m1 -1v13m1 -1v12m1 -1v10m1 -1v5m1 -1v1m1 -7v7m1 -16v10m1 -22v13m1 -25v13m1 -24v12m1 -19v8m1 -12v5m1 -5v2m1 -1v7m1 -1v11m1 -1v13m1 -1v13m1 -1v12m1 -1v8m1 -1v3m1 -3v3m1 -9v7m1 -18v12m1 -24v13m1 -25v13m1 -23v11m1 -17v7m1 -9v3m1 -3v4m1 -1v8m1 -1v12m1 -1v13m1 -1v13m1 -1v10m1 -1v7m1 -1v2m1 -4v4m1 -12v9m1 -20v12m1 -25v14m1 -25v12m1 -21v10m1 -15v6m1 -7v2m1 -2v6m1 -1v9m1 -1v13m1 -1v13m1 -1v12m1 -1v10m1 -1v5m1 -1v1m1 -7v7m1 -16v10m1 -21v12m1 -24v13m1 -24v12m1 -20v9m1 -13v5m1 -5v2m1 -1v7m1 -1v11m1 -1v13m1 -1v13m1 -1v11m1 -1v9m1 -1v3m1 -3v3m1 -9v7m1 -17v11m1 -23v13m1 -25v13m1 -23v11m1 -18v8m1 -10v3m1 -3v4m1 -1v8m1 -1v12m1 -1v13m1 -1v13m1 -1v10m1 -1v7m1 -1v2m1 -4v4m1 -12v9m1 -20v12m1 -24v13m1 -25v13m1 -22v10m1 -15v6m1 -7v2m1 -2v6m1 -1v9m1 -1v12m1 -1v14m1 -1v12m1 -1v10m1 -1v5m1 -1v1m1 -6v6m1 -16v11m1 -22v12m1 -24v13m1 -24v12m1 -20v9m1 -13v5m1 -5v2m1 -1v7m1 -1v11m1 -1v12m1 -1v14m1 -1v11m1 -1v8m1 -1v4m1 -3v3m1 -9v7m1 -17v11m1 -23v13m1 -25v13m1 -23v11m1 -18v8m1 -10v3m1 -3v4m1 -1v8m1 -1v11m1 -1v13m1 -1v13m1 -1v11m1 -1v7m1 -1v2m1 -4v4m1 -12v9m1 -20v12m1 -24v13m1 -25v13m1 -22v10m1 -15v6m1 -7v2m1 -2v6m1 -1v9m1 -1v12m1 -1v13m1 -1v13m1 -1v9m1 -1v6m1 -1v1m1 -6v6m1 -15v10m1 -22v13m1 -25v13m1 -24v12m1 -20v9m1 -13v5m1 -5v2m1 -1v7m1 -1v10m1 -1v13m1 -1v13m1 -1v12m1 -1v8m1 -1v4m1 -2v2m1 -9v8m1 -18v11m1 -23v13m1 -25v13m1 -23v11m1 -18v8m1 -10v3m1 -3v4m1 -1v8m1 -1v11m1 -1v13m1 -1v13m1 -1v11m1 -1v7m1 -1v2m1 -4v4m1 -12v9m1 -20v12m1 -24v13m1 -24v12m1 -22v11m1 -16v6m1 -7v2m1 -2v5m1 -1v10m1 -1v12m1 -1v13m1 -1v13m1 -1v9m1 -1v6m1 -1v1m1 -6v6m1 -15v10m1 -22v13m1 -25v13m1 -24v12m1 -20v9m1 -13v5m1 -5v2m1 -1v7m1 -1v10m1 -1v13m1 -1v13m1 -1v12m1 -1v8m1 -1v4m1 -2v2m1 -9v8m1 -18v11m1 -23v13m1 -25v13m1 -23v11m1 -18v8m1 -10v3m1 -3v4m1 -1v8m1 -1v11m1 -1v13m1 -1v13m1 -1v11m1 -1v7m1 -1v2m1 -4v4m1 -12v9m1 -19v11m1 -24v14m1 -25v12m1 -22v11m1 -16v6m1 -7v2m1 -2v5m1 -1v10m1 -1v12m1 -1v13m1 -1v12m1 -1v10m1 -1v6m1 -1v1m1 -6v6m1 -15v10m1 -21v12m1 -25v14m1 -25v12m1 -20v9m1 -13v5m1 -5v2m1 -1v7m1 -1v10m1 -1v13m1 -1v13m1 -1v12m1 -1v8m1 -1v4m1 -2v2m1 -9v8m1 -17v10m1 -22v13m1 -25v13m1 -24v12m1 -19v8m1 -10v3m1 -3v3m1 -1v8m1 -1v12m1 -1v13m1 -1v13m1 -1v10m1 -1v8m1 -1v2m1 -4v4m1 -11v8m1 -19v12m1 -24v13m1 -25v13m1 -22v10m1 -16v7m1 -8v2m1 -2v5m1 -1v9m1 -1v12m1 -1v14m1 -1v12m1 -1v10m1 -1v6m1 -1v1m1 -6v6m1 -15v10m1 -21v12m1 -24v13m1 -24v12m1 -21v10m1 -14v5m1 -5v2m1 -1v6m1 -1v11m1 -1v12m1 -1v14m1 -1v11m1 -1v9m1 -1v4m1 -2v2m1 -8v7m1 -17v11m1 -23v13m1 -25v13m1 -24v12m1 -19v8m1 -10v3m1 -3v3m1 -1v8m1 -1v11m1 -1v14m1 -1v13m1 -1v11m1 -1v8m1 -1v3m1 -4v4m1 -12v9m1 -20v12m1 -25v14m1 -27v14m1 -24v11m1 -17v7m1 -8v2m1 -2v5m1 -1v10m1 -1v13m1 -1v14m1 -1v13m1 -1v10m1 -1v7m1 -1v1m1 -6v6m1 -15v10m1 -22v13m1 -26v14m1 -26v13m1 -22v10m1 -15v6m1 -6v2m1 -1v7m1 -1v11m1 -1v13m1 -1v14m1 -1v12m1 -1v10m1 -1v4m1 -2v2m1 -9v8m1 -18v11m1 -24v14m1 -27v14m1 -25v12m1 -19v8m1 -11v4m1 -4v3m1 -1v9m1 -1v11m1 -1v14m1 -1v14m1 -1v12m1 -1v7m1 -1v3m1 -4v4m1 -12v9m1 -20v12m1 -25v14m1 -27v14m1 -24v11m1 -17v7m1 -8v2m1 -2v5m1 -1v10m1 -1v13m1 -1v14m1 -1v13m1 -1v10m1 -1v7m1 -1v1m1 -6v6m1 -15v10m1 -22v13m1 -26v14m1 -26v13m1 -22v10m1 -15v6m1 -6v2m1 -1v7m1 -1v10m1 -1v14m1 -1v14m1 -1v12m1 -1v10m1 -1v4m1 -2v2m1 -9v8m1 -18v11m1 -23v13m1 -26v14m1 -25v12m1 -20v9m1 -12v4m1 -4v3m1 -1v8m1 -1v12m1 -1v14m1 -1v14m1 -1v11m1 -1v8m1 -1v3m1 -4v4m1 -12v9m1 -20v12m1 -25v14m1 -26v13m1 -23v11m1 -18v8m1 -9v2m1 -2v5m1 -1v10m1 -1v12m1 -1v14m1 -1v14m1 -1v10m1 -1v7m1 -1v1m1 -6v6m1 -15v10m1 -22v13m1 -26v14m1 -26v13m1 -22v10m1 -15v6m1 -6v2m1 -1v6m1 -1v11m1 -1v13m1 -1v14m1 -1v13m1 -1v9m1 -1v5m1 -2v2m1 -8v7m1 -18v12m1 -24v13m1 -26v14m1 -25v12m1 -20v9m1 -12v4m1 -4v3m1 -1v8m1 -1v12m1 -1v14m1 -1v14m1 -1v11m1 -1v8m1 -1v3m1 -4v4m1 -11v8m1 -20v13m1 -25v13m1 -26v14m1 -24v11m1 -18v8m1 -9v2m1 -2v5m1 -1v9m1 -1v13m1 -1v14m1 -1v13m1 -1v11m1 -1v6m1 -1v2m1 -6v6m1 -15v10m1 -22v13m1 -26v14m1 -26v13m1 -22v10m1 -15v6m1 -6v2m1 -1v6m1 -1v11m1 -1v13m1 -1v14m1 -1v13m1 -1v9m1 -1v5m1 -2v2m1 -8v7m1 -17v11m1 -24v14m1 -27v14m1 -25v12m1 -20v9m1 -12v4m1 -4v3m1 -1v8m1 -1v12m1 -1v13m1 -1v14m1 -1v12m1 -1v8m1 -1v3m1 -4v4m1 -11v8m1 -19v12m1 -25v14m1 -27v14m1 -24v11m1 -17v7m1 -9v3m1 -3v5m1 -1v9m1 -1v13m1 -1v14m1 -1v13m1 -1v11m1 -1v7m1 -1v2m1 -6v6m1 -15v10m1 -22v13m1 -27v15m1 -27v13m1 -23v11m1 -16v6m1 -7v2m1 -1v7m1 -1v11m1 -1v14m1 -1v14m1 -1v14m1 -1v10m1 -1v5m1 -2v2m1 -9v8m1 -18v11m1 -25v15m1 -28v14m1 -26v13m1 -22v10m1 -13v4m1 -4v3m1 -1v8m1 -1v13m1 -1v14m1 -1v15m1 -1v12m1 -1v9m1 -1v3m1 -4v4m1 -12v9m1 -20v12m1 -26v15m1 -28v14m1 -25v12m1 -19v8m1 -10v3m1 -3v5m1 -1v10m1 -1v13m1 -1v15m1 -1v14m1 -1v11m1 -1v7m1 -1v2m1 -6v6m1 -15v10m1 -23v14m1 -28v15m1 -27v13m1 -23v11m1 -16v6m1 -7v2m1 -1v6m1 -1v11m1 -1v14m1 -1v15m1 -1v14m1 -1v10m1 -1v5m1 -2v2m1 -8v7m1 -18v12m1 -25v14m1 -28v15m1 -27v13m1 -21v9m1 -13v5m1 -5v3m1 -1v8m1 -1v12m1 -1v15m1 -1v15m1 -1v12m1 -1v9m1 -1v3m1 -3v3m1 -11v9m1 -21v13m1 -27v15m1 -28v14m1 -25v12m1 -19v8m1 -10v3m1 -3v5m1 -1v9m1 -1v14m1 -1v14m1 -1v15m1 -1v11m1 -1v7m1 -1v2m1 -6v6m1 -15v10m1 -22v13m1 -27v15m1 -28v14m1 -24v11m1 -16v6m1 -7v2m1 -1v6m1 -1v11m1 -1v14m1 -1v15m1 -1v13m1 -1v11m1 -1v5m1 -2v2m1 -8v7m1 -18v12m1 -25v14m1 -28v15m1 -27v13m1 -21v9m1 -13v5m1 -5v3m1 -1v8m1 -1v12m1 -1v15m1 -1v14m1 -1v13m1 -1v9m1 -1v3m1 -3v3m1 -11v9m1 -21v13m1 -27v15m1 -28v14m1 -25v12m1 -19v8m1 -10v3m1 -3v5m1 -1v9m1 -1v13m1 -1v15m1 -1v14m1 -1v12m1 -1v7m1 -1v2m1 -5v5m1 -15v11m1 -23v13m1 -27v15m1 -28v14m1 -24v11m1 -16v6m1 -7v2m1 -1v6m1 -1v11m1 -1v14m1 -1v15m1 -1v13m1 -1v11m1 -1v5m1 -2v2m1 -8v7m1 -17v11m1 -25v15m1 -28v14m1 -27v14m1 -22v9m1 -13v5m1 -5v3m1 -1v8m1 -1v12m1 -1v14m1 -1v15m1 -1v13m1 -1v9m1 -1v3m1 -3v3m1 -11v9m1 -21v13m1 -26v14m1 -28v15m1 -26v12m1 -19v8m1 -10v3m1 -3v5m1 -1v9m1 -1v13m1 -1v15m1 -1v14m1 -1v12m1 -1v7m1 -1v2m1 -5v5m1 -14v10m1 -23v14m1 -28v15m1 -28v14m1 -24v11m1 -16v6m1 -7v2m1 -1v6m1 -1v11m1 -1v14m1 -1v14m1 -1v14m1 -1v10m1 -1v6m1 -2v2m1 -8v7m1 -17v11m1 -24v14m1 -28v15m1 -27v13m1 -22v10m1 -14v5m1 -5v3m1 -1v8m1 -1v12m1 -1v14m1 -1v15m1 -1v13m1 -1v9m1 -1v3m1 -3v3m1 -11v9m1 -20v12m1 -26v15m1 -28v14m1 -26v13m1 -20v8m1 -10v3m1 -3v4m1 -1v10m1 -1v13m1 -1v15m1 -1v14m1 -1v12m1 -1v7m1 -1v2m1 -5v5m1 -14v10m1 -23v14m1 -27v14m1 -27v14m1 -25v12m1 -17v6m1 -7v2m1 -1v6m1 -1v10m1 -1v14m1 -1v15m1 -1v14m1 -1v10m1 -1v6m1 -2v2m1 -8v7m1 -17v11m1 -24v14" stroke="#ffff11"/><path d="M33.5 443v1m1 -1v29m1 -1v52m1 -1v19m1 -58v52m1 -92v41m1 -41v1m1 -1v1m1 -1v1m1 -1v1m1 -1v1m1 -1v1m1 -1v1m1 -1v1m1 -1v1m1 -1v1m1 -1v1m1 -1v1m1 -1v1m1 -1v1m1 -1v1m1 -1v1m1 -1v1m1 -1v1m1 -1v1m1 -1v1m1 -1v1m1 -1v1m1 -1v1m1 -1v1m1 -1v1m1 -1v1m1 -1v1m1 -1v1m1 -1v1m1 -1v3m1 -1v1m1 -2v2m1 -3v2m1 -5v4m1 -6v3m1 -4v2m1 -2v1m1 -1v2m1 -1v2m1 -1v3m1 -1v4m1 -1v3m1 -1v2m1 -1v2m1 -1v2m1 -2v1m1 -3v3m1 -5v3m1 -6v4m1 -6v3m1 -4v2m1 -3v2m1 -2v1m1 -1v2m1 -1v3m1 -1v4m1 -1v3m1 -1v3m1 -1v2m1 -1v2m1 -2v2m1 -3v2m1 -4v3m1 -6v4m1 -6v3m1 -5v3m1 -4v2m1 -2v1m1 -1v2m1 -1v2m1 -1v3m1 -1v4m1 -1v3m1 -1v3m1 -1v1m1 -1v2m1 -3v2m1 -3v2m1 -5v4m1 -6v3m1 -5v3m1 -5v3m1 -3v1m1 -1v1m1 -1v3m1 -1v2m1 -1v4m1 -1v3m1 -1v3m1 -1v5m1 -1v1m1 -1v1m1 -5v5m1 -8v4m1 -8v5m1 -8v4m1 -5v2m1 -2v1m1 -1v2m1 -1v3m1 -1v3m1 -1v4m1 -1v3m1 -1v3m1 -1v2m1 -1v1m1 -2v2m1 -4v3m1 -5v3m1 -6v4m1 -6v3m1 -4v2m1 -3v2m1 -2v1m1 -1v2m1 -1v3m1 -1v3m1 -1v3m1 -1v3m1 -1v3m1 -1v2m1 -2v2m1 -3v2m1 -4v3m1 -5v3m1 -5v3m1 -5v3m1 -5v3m1 -3v1m1 -1v1m1 -1v3m1 -1v3m1 -1v3m1 -1v3m1 -1v3m1 -1v2m1 -1v2m1 -2v2m1 -3v2m1 -5v4m1 -6v3m1 -5v3m1 -5v3m1 -4v2m1 -2v1m1 -1v2m1 -1v2m1 -1v3m1 -1v4m1 -1v3m1 -1v2m1 -1v2m1 -1v2m1 -2v1m1 -3v3m1 -5v3m1 -6v4m1 -6v3m1 -4v2m1 -3v2m1 -2v1m1 -1v2m1 -1v3m1 -1v3m1 -1v3m1 -1v3m1 -1v3m1 -1v1m1 -1v1m1 -2v2m1 -4v3m1 -5v3m1 -5v3m1 -5v3m1 -5v3m1 -3v1m1 -1v1m1 -1v3m1 -1v3m1 -1v3m1 -1v3m1 -1v3m1 -1v2m1 -1v1m1 -1v1m1 -2v2m1 -4v3m1 -6v4m1 -6v3m1 -5v3m1 -4v2m1 -2v1m1 -1v2m1 -1v2m1 -1v3m1 -1v4m1 -1v3m1 -1v2m1 -1v2m1 -1v1m1 -1v1m1 -3v3m1 -5v3m1 -5v3m1 -6v4m1 -5v2m1 -3v2m1 -2v1m1 -1v2m1 -1v3m1 -1v3m1 -1v3m1 -1v3m1 -1v3m1 -1v1m1 -1v1m1 -2v2m1 -4v3m1 -5v3m1 -5v3m1 -5v3m1 -5v3m1 -3v1m1 -1v1m1 -1v3m1 -1v2m1 -1v4m1 -1v3m1 -1v3m1 -1v2m1 -1v1m1 -1v1m1 -2v2m1 -4v3m1 -6v4m1 -6v3m1 -5v3m1 -4v2m1 -2v1m1 -1v2m1 -1v2m1 -1v3m1 -1v3m1 -1v4m1 -1v2m1 -1v2m1 -1v1m1 -1v1m1 -3v3m1 -5v3m1 -5v3m1 -6v4m1 -5v2m1 -3v2m1 -2v1m1 -1v2m1 -1v3m1 -1v3m1 -1v3m1 -1v3m1 -1v3m1 -1v1m1 -1v1m1 -2v2m1 -4v3m1 -5v3m1 -5v3m1 -5v3m1 -4v2m1 -3v2m1 -2v1m1 -1v3m1 -1v2m1 -1v4m1 -1v3m1 -1v3m1 -1v2m1 -1v5m1 -1v3m1 -1v1m1 -6v6m1 -14v9m1 -17v9m1 -17v9m1 -14v6m1 -8v3m1 -3v3m1 -1v8m1 -1v10m1 -1v11m1 -1v11m1 -1v9m1 -1v5m1 -1v2m1 -5v5m1 -12v8m1 -18v11m1 -21v11m1 -21v11m1 -19v9m1 -13v5m1 -5v1m1 -1v6m1 -1v9m1 -1v11m1 -1v12m1 -1v10m1 -1v8m1 -1v5m1 -2v2m1 -7v6m1 -15v10m1 -20v11m1 -22v12m1 -21v10m1 -17v8m1 -11v4m1 -4v3m1 -1v7m1 -1v10m1 -1v11m1 -1v12m1 -1v10m1 -1v7m1 -1v3m1 -3v3m1 -9v7m1 -17v11m1 -22v12m1 -23v12m1 -20v9m1 -15v7m1 -8v2m1 -2v4m1 -1v8m1 -1v11m1 -1v12m1 -1v12m1 -1v9m1 -1v6m1 -1v2m1 -5v5m1 -13v9m1 -19v11m1 -23v13m1 -23v11m1 -19v9m1 -13v5m1 -6v2m1 -1v5m1 -1v10m1 -1v11m1 -1v13m1 -1v11m1 -1v9m1 -1v4m1 -2v2m1 -7v6m1 -15v10m1 -21v12m1 -23v12m1 -22v11m1 -18v8m1 -11v4m1 -4v3m1 -1v7m1 -1v10m1 -1v12m1 -1v12m1 -1v11m1 -1v8m1 -1v3m1 -4v4m1 -10v7m1 -17v11m1 -23v13m1 -24v12m1 -21v10m1 -16v7m1 -8v2m1 -2v4m1 -1v8m1 -1v11m1 -1v13m1 -1v12m1 -1v10m1 -1v6m1 -1v2m1 -5v5m1 -13v9m1 -20v12m1 -23v12m1 -23v12m1 -21v10m1 -14v5m1 -6v2m1 -1v6m1 -1v9m1 -1v12m1 -1v13m1 -1v11m1 -1v9m1 -1v5m1 -2v2m1 -7v6m1 -15v10m1 -22v13m1 -24v12m1 -23v12m1 -19v8m1 -11v4m1 -4v3m1 -1v7m1 -1v10m1 -1v13m1 -1v13m1 -1v10m1 -1v8m1 -1v3m1 -3v3m1 -10v8m1 -18v11m1 -22v12m1 -24v13m1 -22v10m1 -16v7m1 -9v3m1 -3v4m1 -1v9m1 -1v11m1 -1v13m1 -1v12m1 -1v10m1 -1v7m1 -1v2m1 -6v5m1 -13v9m1 -19v11m1 -23v13m1 -24v12m1 -21v10m1 -15v6m1 -6v1m1 -1v6m1 -1v10m1 -1v12m1 -1v13m1 -1v11m1 -1v10m1 -1v4m1 -1v2m1 -8v7m1 -16v10m1 -21v12m1 -24v13m1 -24v12m1 -19v8m1 -11v4m1 -4v2m1 -1v7m1 -1v11m1 -1v13m1 -1v12m1 -1v12m1 -1v7m1 -1v4m1 -4v4m1 -10v7m1 -17v11m1 -23v13m1 -25v13m1 -23v11m1 -17v7m1 -8v2m1 -2v4m1 -1v8m1 -1v12m1 -1v13m1 -1v12m1 -1v10m1 -1v7m1 -1v2m1 -5v5m1 -13v9m1 -20v12m1 -24v13m1 -24v12m1 -21v10m1 -15v6m1 -7v2m1 -1v6m1 -1v9m1 -1v12m1 -1v14m1 -1v11m1 -1v10m1 -1v5m1 -2v2m1 -7v6m1 -16v11m1 -22v12m1 -24v13m1 -24v12m1 -19v8m1 -12v5m1 -5v3m1 -1v7m1 -1v11m1 -1v12m1 -1v13m1 -1v12m1 -1v8m1 -1v3m1 -3v3m1 -10v8m1 -18v11m1 -23v13m1 -25v13m1 -23v11m1 -17v7m1 -9v3m1 -3v4m1 -1v9m1 -1v11m1 -1v13m1 -1v13m1 -1v10m1 -1v7m1 -1v2m1 -5v5m1 -13v9m1 -20v12m1 -24v13m1 -24v12m1 -21v10m1 -15v6m1 -7v2m1 -1v5m1 -1v10m1 -1v12m1 -1v13m1 -1v12m1 -1v10m1 -1v5m1 -2v2m1 -7v6m1 -15v10m1 -22v13m1 -25v13m1 -24v12m1 -19v8m1 -12v5m1 -5v3m1 -1v7m1 -1v10m1 -1v13m1 -1v13m1 -1v12m1 -1v8m1 -1v3m1 -3v3m1 -10v8m1 -18v11m1 -23v13m1 -25v13m1 -23v11m1 -17v7m1 -9v3m1 -3v4m1 -1v9m1 -1v11m1 -1v13m1 -1v13m1 -1v10m1 -1v7m1 -1v2m1 -5v5m1 -13v9m1 -20v12m1 -24v13m1 -24v12m1 -21v10m1 -15v6m1 -7v2m1 -1v5m1 -1v10m1 -1v12m1 -1v13m1 -1v12m1 -1v10m1 -1v5m1 -2v2m1 -7v6m1 -15v10m1 -21v12m1 -25v14m1 -24v11m1 -19v9m1 -13v5m1 -5v3m1 -1v6m1 -1v11m1 -1v13m1 -1v13m1 -1v11m1 -1v9m1 -1v3m1 -3v3m1 -9v7m1 -18v12m1 -23v12m1 -24v13m1 -23v11m1 -18v8m1 -10v3m1 -3v4m1 -1v8m1 -1v12m1 -1v13m1 -1v13m1 -1v10m1 -1v7m1 -1v2m1 -5v5m1 -12v8m1 -19v12m1 -24v13m1 -25v13m1 -22v10m1 -15v6m1 -7v2m1 -1v5m1 -1v9m1 -1v13m1 -1v13m1 -1v12m1 -1v10m1 -1v5m1 -2v2m1 -7v6m1 -15v10m1 -21v12m1 -24v13m1 -24v12m1 -20v9m1 -13v5m1 -5v2m1 -1v7m1 -1v11m1 -1v13m1 -1v13m1 -1v11m1 -1v8m1 -1v4m1 -3v3m1 -9v7m1 -17v11m1 -23v13m1 -25v13m1 -23v11m1 -18v8m1 -10v3m1 -3v4m1 -1v8m1 -1v12m1 -1v13m1 -1v12m1 -1v11m1 -1v7m1 -1v2m1 -4v4m1 -12v9m1 -20v12m1 -24v13m1 -25v13m1 -22v10m1 -15v6m1 -7v2m1 -2v6m1 -1v9m1 -1v12m1 -1v14m1 -1v12m1 -1v9m1 -1v6m1 -1v1m1 -6v6m1 -15v10m1 -22v13m1 -25v13m1 -24v12m1 -20v9m1 -13v5m1 -5v2m1 -1v7m1 -1v11m1 -1v12m1 -1v14m1 -1v11m1 -1v8m1 -1v4m1 -3v3m1 -9v7m1 -17v11m1 -23v13m1 -25v13m1 -23v11m1 -18v8m1 -10v3m1 -3v4m1 -1v8m1 -1v11m1 -1v13m1 -1v13m1 -1v11m1 -1v7m1 -1v2m1 -4v4m1 -12v9m1 -20v12m1 -24v13m1 -25v13m1 -22v10m1 -15v6m1 -7v2m1 -2v6m1 -1v9m1 -1v12m1 -1v13m1 -1v13m1 -1v9m1 -1v6m1 -1v1m1 -6v6m1 -15v10m1 -22v13m1 -25v13m1 -24v12m1 -20v9m1 -13v5m1 -5v2m1 -1v7m1 -1v10m1 -1v13m1 -1v13m1 -1v12m1 -1v8m1 -1v4m1 -2v2m1 -9v8m1 -18v11m1 -23v13m1 -25v13m1 -23v11m1 -18v8m1 -10v3m1 -3v4m1 -1v8m1 -1v11m1 -1v13m1 -1v13m1 -1v11m1 -1v7m1 -1v2m1 -4v4m1 -12v9m1 -20v12m1 -24v13m1 -24v12m1 -22v11m1 -16v6m1 -7v2m1 -2v5m1 -1v10m1 -1v12m1 -1v13m1 -1v13m1 -1v9m1 -1v6m1 -1v1m1 -6v6m1 -15v10m1 -22v13m1 -25v13m1 -24v12m1 -20v9m1 -13v5m1 -5v2m1 -1v7m1 -1v10m1 -1v13m1 -1v13m1 -1v12m1 -1v8m1 -1v4m1 -2v2m1 -9v8m1 -18v11m1 -23v13m1 -25v13m1 -23v11m1 -18v8m1 -10v3m1 -3v4m1 -1v7m1 -1v12m1 -1v13m1 -1v13m1 -1v11m1 -1v7m1 -1v2m1 -4v4m1 -12v9m1 -19v11m1 -24v14m1 -25v12m1 -21v10m1 -16v7m1 -8v2m1 -2v5m1 -1v10m1 -1v12m1 -1v13m1 -1v12m1 -1v10m1 -1v6m1 -1v1m1 -6v6m1 -15v10m1 -21v12m1 -24v13m1 -25v13m1 -21v9m1 -13v5m1 -5v2m1 -1v7m1 -1v10m1 -1v13m1 -1v13m1 -1v12m1 -1v8m1 -1v4m1 -2v2m1 -9v8m1 -17v10m1 -22v13m1 -25v13m1 -24v12m1 -19v8m1 -10v3m1 -3v3m1 -1v8m1 -1v12m1 -1v13m1 -1v13m1 -1v10m1 -1v8m1 -1v2m1 -4v4m1 -11v8m1 -19v12m1 -24v13m1 -25v13m1 -22v10m1 -16v7m1 -8v2m1 -2v5m1 -1v9m1 -1v12m1 -1v14m1 -1v12m1 -1v10m1 -1v6m1 -1v1m1 -6v6m1 -15v10m1 -21v12m1 -24v13m1 -24v12m1 -21v10m1 -14v5m1 -5v2m1 -1v6m1 -1v11m1 -1v12m1 -1v14m1 -1v11m1 -1v9m1 -1v4m1 -2v2m1 -8v7m1 -17v11m1 -23v13m1 -25v13m1 -23v11m1 -18v8m1 -11v4m1 -4v3m1 -1v8m1 -1v11m1 -1v13m1 -1v13m1 -1v11m1 -1v8m1 -1v2m1 -4v4m1 -11v8m1 -19v12m1 -24v13m1 -25v13m1 -22v10m1 -16v7m1 -8v2m1 -2v5m1 -1v9m1 -1v12m1 -1v13m1 -1v13m1 -1v10m1 -1v6m1 -1v1m1 -6v6m1 -14v9m1 -21v13m1 -25v13m1 -24v12m1 -21v10m1 -14v5m1 -5v2m1 -1v6m1 -1v11m1 -1v12m1 -1v13m1 -1v12m1 -1v9m1 -1v4m1 -2v2m1 -8v7m1 -17v11m1 -23v13m1 -25v13m1 -23v11m1 -18v8m1 -11v4m1 -4v3m1 -1v8m1 -1v11m1 -1v13m1 -1v13m1 -1v11m1 -1v8m1 -1v2m1 -4v4m1 -11v8m1 -19v12m1 -24v13m1 -25v13m1 -22v10m1 -16v7m1 -8v2m1 -2v5m1 -1v9m1 -1v12m1 -1v13m1 -1v13m1 -1v10m1 -1v6m1 -1v1m1 -6v6m1 -14v9m1 -21v13m1 -25v13m1 -24v12m1 -20v9m1 -14v6m1 -6v2m1 -1v6m1 -1v10m1 -1v13m1 -1v13m1 -1v12m1 -1v9m1 -1v4m1 -2v2m1 -8v7m1 -17v11m1 -23v13m1 -25v13m1 -23v11m1 -18v8m1 -11v4m1 -4v3m1 -1v8m1 -1v11m1 -1v13m1 -1v13m1 -1v11m1 -1v7m1 -1v3m1 -4v4m1 -11v8m1 -18v11m1 -24v14m1 -25v12m1 -22v11m1 -17v7m1 -8v2m1 -2v5m1 -1v9m1 -1v12m1 -1v13m1 -1v12m1 -1v11m1 -1v6m1 -1v1m1 -5v5m1 -14v10m1 -21v12m1 -25v14m1 -25v12m1 -20v9m1 -14v6m1 -6v2m1 -1v6m1 -1v10m1 -1v13m1 -1v13m1 -1v12m1 -1v9m1 -1v4m1 -2v2m1 -8v7m1 -16v10m1 -22v13m1 -25v13m1 -24v12m1 -19v8m1 -11v4m1 -4v3m1 -1v8m1 -1v11m1 -1v13m1 -1v13m1 -1v11m1 -1v7m1 -1v3m1 -3v3m1 -11v9m1 -19v11m1 -23v13m1 -25v13m1 -23v11m1 -17v7m1 -8v2m1 -2v5m1 -1v9m1 -1v11m1 -1v14m1 -1v12m1 -1v10m1 -1v7m1 -1v1m1 -5v5m1 -14v10m1 -21v12m1 -24v13m1 -25v13m1 -21v9m1 -14v6m1 -6v2m1 -1v6m1 -1v10m1 -1v12m1 -1v14m1 -1v12m1 -1v9m1 -1v4m1 -2v2m1 -8v7m1 -16v10m1 -22v13m1 -25v13m1 -24v12m1 -19v8m1 -11v4m1 -4v3m1 -1v7m1 -1v11m1 -1v13m1 -1v13m1 -1v12m1 -1v7m1 -1v3m1 -3v3m1 -10v8m1 -19v12m1 -24v13m1 -25v13m1 -23v11m1 -17v7m1 -8v2m1 -2v5m1 -1v8m1 -1v12m1 -1v13m1 -1v13m1 -1v10m1 -1v7m1 -1v1m1 -5v5m1 -14v10m1 -21v12m1 -24v13m1 -24v12m1 -21v10m1 -15v6m1 -6v2m1 -1v6m1 -1v10m1 -1v12m1 -1v13m1 -1v12m1 -1v9m1 -1v5m1 -2v2m1 -8v7m1 -16v10m1 -22v13m1 -25v13m1 -24v12m1 -19v8m1 -11v4m1 -4v3m1 -1v7m1 -1v11m1 -1v13m1 -1v13m1 -1v11m1 -1v8m1 -1v3m1 -3v3m1 -10v8m1 -19v12m1 -24v13m1 -25v13m1 -22v10m1 -16v7m1 -9v3m1 -3v4m1 -1v9m1 -1v12m1 -1v13m1 -1v13m1 -1v10m1 -1v6m1 -1v2m1 -5v5m1 -13v9m1 -21v13m1 -25v13m1 -24v12m1 -21v10m1 -14v5m1 -6v2m1 -1v6m1 -1v9m1 -1v13m1 -1v13m1 -1v12m1 -1v9m1 -1v5m1 -2v2m1 -7v6m1 -16v11m1 -23v13m1 -25v13m1 -23v11m1 -19v9m1 -12v4m1 -4v3m1 -1v7m1 -1v11m1 -1v13m1 -1v13m1 -1v11m1 -1v8m1 -1v3m1 -3v3m1 -10v8m1 -18v11m1 -24v14m1 -25v12m1 -22v11m1 -17v7m1 -9v3m1 -3v4m1 -1v9m1 -1v12m1 -1v13m1 -1v13m1 -1v10m1 -1v6m1 -1v2m1 -5v5m1 -13v9m1 -20v12m1 -25v14m1 -25v12m1 -21v10m1 -14v5m1 -6v2m1 -1v5m1 -1v10m1 -1v13m1 -1v13m1 -1v12m1 -1v9m1 -1v5m1 -2v2m1 -7v6m1 -16v11m1 -22v12m1 -24v13m1 -24v12m1 -20v9m1 -12v4m1 -4v3m1 -1v7m1 -1v11m1 -1v13m1 -1v13m1 -1v11m1 -1v8m1 -1v3m1 -3v3m1 -10v8m1 -18v11m1 -23v13m1 -25v13m1 -23v11m1 -17v7m1 -9v3m1 -3v4m1 -1v9m1 -1v12m1 -1v13m1 -1v12m1 -1v11m1 -1v6m1 -1v2m1 -5v5m1 -13v9m1 -20v12m1 -24v13m1 -25v13m1 -22v10m1 -14v5m1 -6v2m1 -1v5m1 -1v10m1 -1v12m1 -1v14m1 -1v12m1 -1v9m1 -1v5m1 -2v2m1 -7v6m1 -15v10m1 -22v13m1 -25v13m1 -24v12m1 -20v9m1 -12v4m1 -4v3m1 -1v7m1 -1v11m1 -1v12m1 -1v14m1 -1v11m1 -1v8m1 -1v3m1 -3v3m1 -10v8m1 -18v11m1 -23v13m1 -25v13m1 -23v11m1 -17v7m1 -9v3m1 -3v4m1 -1v9m1 -1v11m1 -1v13m1 -1v13m1 -1v11m1 -1v6m1 -1v2m1 -5v5m1 -13v9m1 -20v12m1 -24v13m1 -25v13m1 -21v9m1 -14v6m1 -7v2m1 -1v5m1 -1v10m1 -1v12m1 -1v13m1 -1v13m1 -1v9m1 -1v5m1 -2v2m1 -7v6m1 -15v10m1 -22v13m1 -25v13m1 -24v12m1 -20v9m1 -12v4m1 -4v3m1 -1v7m1 -1v10m1 -1v13m1 -1v13m1 -1v12m1 -1v8m1 -1v3m1 -3v3m1 -10v8m1 -18v11m1 -23v13m1 -25v13m1 -23v11m1 -17v7m1 -9v3m1 -3v4m1 -1v8m1 -1v12m1 -1v13m1 -1v13m1 -1v10m1 -1v7m1 -1v2m1 -5v5m1 -13v9m1 -20v12m1 -24v13m1 -24v12m1 -21v10m1 -15v6m1 -7v2m1 -2v6m1 -1v10m1 -1v12m1 -1v13m1 -1v12m1 -1v10m1 -1v5m1 -1v1m1 -7v7m1 -16v10m1 -22v13m1 -25v13m1 -24v12m1 -19v8m1 -12v5m1 -5v2m1 -1v7m1 -1v11m1 -1v13m1 -1v13m1 -1v12m1 -1v8m1 -1v3m1 -3v3m1 -9v7m1 -18v12m1 -24v13m1 -25v13m1 -23v11m1 -17v7m1 -9v3m1 -3v4m1 -1v8m1 -1v12m1 -1v13m1 -1v13m1 -1v10m1 -1v7m1 -1v2m1 -4v4m1 -12v9m1 -20v12m1 -25v14m1 -25v12m1 -21v10m1 -15v6m1 -7v2m1 -2v6m1 -1v9m1 -1v13m1 -1v13m1 -1v12m1 -1v10m1 -1v5m1 -1v1m1 -7v7m1 -16v10m1 -21v12m1 -25v14m1 -25v12m1 -20v9m1 -13v5m1 -5v2m1 -1v7m1 -1v11m1 -1v14m1 -1v13m1 -1v13m1 -1v8m1 -1v4m1 -3v3m1 -10v8m1 -19v12m1 -24v13m1 -26v14m1 -25v12m1 -19v8m1 -10v3m1 -3v4m1 -1v9m1 -1v12m1 -1v14m1 -1v13m1 -1v12m1 -1v7m1 -1v2m1 -5v5m1 -13v9m1 -21v13m1 -26v14m1 -26v13m1 -23v11m1 -16v6m1 -7v2m1 -2v6m1 -1v10m1 -1v13m1 -1v14m1 -1v13m1 -1v10m1 -1v6m1 -1v1m1 -7v7m1 -17v11m1 -23v13m1 -26v14m1 -25v12m1 -21v10m1 -14v5m1 -5v2m1 -1v8m1 -1v11m1 -1v13m1 -1v14m1 -1v12m1 -1v9m1 -1v4m1 -3v3m1 -10v8m1 -18v11m1 -24v14m1 -27v14m1 -25v12m1 -19v8m1 -10v3m1 -3v4m1 -1v9m1 -1v12m1 -1v14m1 -1v13m1 -1v11m1 -1v8m1 -1v2m1 -4v4m1 -13v10m1 -21v12m1 -25v14m1 -27v14m1 -23v10m1 -16v7m1 -8v2m1 -2v6m1 -1v10m1 -1v13m1 -1v14m1 -1v13m1 -1v10m1 -1v6m1 -1v1m1 -7v7m1 -16v10m1 -23v14m1 -27v14m1 -25v12m1 -21v10m1 -14v5m1 -5v2m1 -1v7m1 -1v12m1 -1v13m1 -1v14m1 -1v12m1 -1v9m1 -1v4m1 -3v3m1 -9v7m1 -18v12m1 -25v14m1 -27v14m1 -24v11m1 -19v9m1 -11v3m1 -3v4m1 -1v8m1 -1v12m1 -1v14m1 -1v14m1 -1v11m1 -1v8m1 -1v2m1 -4v4m1 -13v10m1 -21v12m1 -25v14m1 -26v13m1 -23v11m1 -17v7m1 -8v2m1 -2v6m1 -1v10m1 -1v13m1 -1v14m1 -1v13m1 -1v10m1 -1v6m1 -1v1m1 -7v7m1 -16v10m1 -22v13m1 -26v14m1 -26v13m1 -22v10m1 -14v5m1 -5v2m1 -1v7m1 -1v11m1 -1v14m1 -1v14m1 -1v12m1 -1v9m1 -1v4m1 -3v3m1 -9v7m1 -18v12m1 -25v14m1 -26v13m1 -24v12m1 -20v9m1 -11v3m1 -3v4m1 -1v8m1 -1v12m1 -1v14m1 -1v14m1 -1v11m1 -1v8m1 -1v2m1 -4v4m1 -12v9m1 -21v13m1 -26v14m1 -26v13m1 -23v11m1 -17v7m1 -8v2m1 -2v6m1 -1v9m1 -1v13m1 -1v14m1 -1v13m1 -1v11m1 -1v6m1 -1v1m1 -6v6m1 -16v11m1 -23v13m1 -26v14m1 -26v13m1 -22v10m1 -14v5m1 -5v2m1 -1v7m1 -1v11m1 -1v14m1 -1v13m1 -1v13m1 -1v9m1 -1v4m1 -2v2m1 -9v8m1 -19v12m1 -24v13m1 -26v14m1 -25v12m1 -19v8m1 -11v4m1 -4v3m1 -1v8m1 -1v13m1 -1v14m1 -1v14m1 -1v12m1 -1v8m1 -1v3m1 -5v5m1 -13v9m1 -21v13m1 -27v15m1 -28v14m1 -24v11m1 -18v8m1 -9v2m1 -2v6m1 -1v10m1 -1v14m1 -1v14m1 -1v14m1 -1v11m1 -1v7m1 -1v1m1 -7v7m1 -17v11m1 -23v13m1 -27v15m1 -28v14m1 -23v10m1 -15v6m1 -6v2m1 -1v7m1 -1v12m1 -1v14m1 -1v15m1 -1v13m1 -1v10m1 -1v4m1 -2v2m1 -9v8m1 -19v12m1 -26v15m1 -29v15m1 -26v12m1 -20v9m1 -12v4m1 -4v4m1 -1v8m1 -1v13m1 -1v15m1 -1v14m1 -1v12m1 -1v8m1 -1v3m1 -4v4m1 -13v10m1 -22v13m1 -26v14m1 -28v15m1 -25v11m1 -18v8m1 -9v2m1 -2v6m1 -1v10m1 -1v13m1 -1v15m1 -1v14m1 -1v11m1 -1v7m1 -1v1m1 -6v6m1 -16v11m1 -24v14m1 -28v15m1 -28v14m1 -23v10m1 -15v6m1 -6v2m1 -1v7m1 -1v12m1 -1v14m1 -1v15m1 -1v13m1 -1v10m1 -1v4m1 -2v2m1 -9v8m1 -19v12m1 -26v15m1 -28v14m1 -26v13m1 -21v9m1 -12v4m1 -4v4m1 -1v8m1 -1v13m1 -1v14m1 -1v15m1 -1v12m1 -1v8m1 -1v3m1 -4v4m1 -12v9m1 -21v13m1 -27v15m1 -28v14m1 -25v12m1 -19v8m1 -9v2m1 -2v5m1 -1v11m1 -1v13m1 -1v15m1 -1v14m1 -1v11m1 -1v7m1 -1v1m1 -6v6m1 -16v11m1 -24v14m1 -28v15m1 -27v13m1 -23v11m1 -16v6m1 -6v2m1 -1v7m1 -1v11m1 -1v15m1 -1v14m1 -1v14m1 -1v9m1 -1v5m1 -2v2m1 -9v8m1 -19v12m1 -25v14m1 -28v15m1 -27v13m1 -21v9m1 -12v4m1 -4v3m1 -1v9m1 -1v12m1 -1v15m1 -1v15m1 -1v12m1 -1v8m1 -1v3m1 -4v4m1 -12v9m1 -21v13m1 -27v15m1 -28v14m1 -25v12m1 -19v8m1 -9v2m1 -2v5m1 -1v10m1 -1v14m1 -1v15m1 -1v14m1 -1v11m1 -1v7m1 -1v1m1 -6v6m1 -16v11m1 -24v14m1 -27v14m1 -27v14m1 -24v11m1 -16v6m1 -6v2m1 -1v7m1 -1v11m1 -1v14m1 -1v15m1 -1v13m1 -1v10m1 -1v5m1 -2v2m1 -9v8m1 -19v12m1 -25v14m1 -28v15m1 -27v13m1 -21v9m1 -12v4m1 -4v3m1 -1v9m1 -1v12m1 -1v15m1 -1v14m1 -1v13m1 -1v8m1 -1v3m1 -4v4m1 -12v9m1 -21v13m1 -27v15m1 -28v14m1 -25v12m1 -18v7m1 -9v3m1 -3v5m1 -1v10m1 -1v14m1 -1v14m1 -1v14m1 -1v12m1 -1v6m1 -1v2m1 -6v6m1 -16v11m1 -23v13m1 -27v15m1 -28v14m1 -24v11m1 -16v6m1 -6v2m1 -1v7m1 -1v11m1 -1v14m1 -1v15m1 -1v13m1 -1v10m1 -1v5m1 -2v2m1 -9v8m1 -18v11m1 -25v15m1 -29v15m1 -26v12m1 -21v10m1 -13v4m1 -4v3m1 -1v9m1 -1v12m1 -1v14m1 -1v15m1 -1v13m1 -1v8m1 -1v3m1 -4v4m1 -12v9m1 -21v13m1 -26v14m1 -28v15m1 -26v12m1 -18v7m1 -9v3m1 -3v5m1 -1v10m1 -1v13m1 -1v15m1 -1v14m1 -1v11" stroke="#139fff"/><path d="M33.5 392v52m1 -61v10m1 -10v11m1 -1v42m1 -1v10m1 -1v1m1 -1v1m1 -1v1m1 -1v1m1 -1v1m1 -1v1m1 -1v1m1 -1v1m1 -1v1m1 -1v1m1 -1v1m1 -1v1m1 -1v1m1 -1v1m1 -1v1m1 -1v1m1 -1v1m1 -1v1m1 -1v1m1 -1v1m1 -1v1m1 -1v1m1 -1v1m1 -1v1m1 -1v1m1 -1v1m1 -1v1m1 -1v1m1 -1v1m1 -2v2m1 -2v1m1 -1v3m1 -1v3m1 -1v3m1 -1v2m1 -2v2m1 -3v2m1 -4v3m1 -5v3m1 -5v3m1 -5v3m1 -5v3m1 -3v1m1 -1v1m1 -1v3m1 -1v3m1 -1v3m1 -1v3m1 -1v3m1 -1v2m1 -1v2m1 -2v1m1 -3v3m1 -5v3m1 -5v3m1 -6v4m1 -5v2m1 -3v2m1 -2v1m1 -1v2m1 -1v3m1 -1v3m1 -1v4m1 -1v3m1 -1v2m1 -1v2m1 -2v2m1 -3v2m1 -4v3m1 -5v3m1 -6v4m1 -6v3m1 -4v2m1 -2v1m1 -1v2m1 -1v2m1 -1v3m1 -1v3m1 -1v4m1 -1v2m1 -1v2m1 -1v2m1 -2v1m1 -3v3m1 -5v3m1 -6v4m1 -6v3m1 -4v2m1 -3v2m1 -2v1m1 -2v3m1 -1v4m1 -1v5m1 -1v5m1 -1v2m1 -1v2m1 -2v2m1 -4v3m1 -6v4m1 -6v3m1 -6v4m1 -6v3m1 -4v2m1 -3v2m1 -2v2m1 -1v3m1 -1v3m1 -1v3m1 -1v3m1 -1v3m1 -1v2m1 -1v2m1 -2v2m1 -4v3m1 -5v3m1 -5v3m1 -5v3m1 -5v3m1 -4v2m1 -2v1m1 -1v2m1 -1v2m1 -1v4m1 -1v3m1 -1v3m1 -1v3m1 -1v1m1 -1v2m1 -3v2m1 -3v2m1 -5v4m1 -6v3m1 -5v3m1 -4v2m1 -3v2m1 -2v1m1 -1v2m1 -1v3m1 -1v3m1 -1v4m1 -1v3m1 -1v2m1 -1v2m1 -2v2m1 -3v2m1 -4v3m1 -5v3m1 -6v4m1 -5v2m1 -4v3m1 -3v1m1 -1v1m1 -1v3m1 -1v3m1 -1v3m1 -1v3m1 -1v3m1 -1v2m1 -1v1m1 -1v1m1 -3v3m1 -5v3m1 -5v3m1 -5v3m1 -5v3m1 -4v2m1 -2v1m1 -1v2m1 -1v2m1 -1v4m1 -1v3m1 -1v3m1 -1v3m1 -1v1m1 -1v1m1 -2v2m1 -3v2m1 -4v3m1 -6v4m1 -6v3m1 -4v2m1 -3v2m1 -2v1m1 -1v2m1 -1v3m1 -1v3m1 -1v4m1 -1v3m1 -1v2m1 -1v1m1 -1v1m1 -2v2m1 -4v3m1 -5v3m1 -5v3m1 -5v3m1 -5v3m1 -3v1m1 -1v1m1 -1v3m1 -1v3m1 -1v3m1 -1v3m1 -1v3m1 -1v2m1 -1v1m1 -1v1m1 -3v3m1 -5v3m1 -5v3m1 -5v3m1 -5v3m1 -4v2m1 -2v1m1 -1v2m1 -1v2m1 -1v3m1 -1v4m1 -1v3m1 -1v2m1 -1v2m1 -1v1m1 -2v2m1 -3v2m1 -4v3m1 -6v4m1 -6v3m1 -4v2m1 -3v2m1 -2v1m1 -1v2m1 -1v3m1 -1v3m1 -1v3m1 -1v3m1 -1v3m1 -1v1m1 -1v1m1 -2v2m1 -4v3m1 -5v3m1 -5v3m1 -5v3m1 -5v3m1 -3v1m1 -1v1m1 -1v3m1 -1v3m1 -1v3m1 -1v3m1 -1v3m1 -1v2m1 -1v1m1 -1v1m1 -3v3m1 -5v3m1 -5v3m1 -5v3m1 -5v3m1 -4v2m1 -2v1m1 -1v2m1 -1v2m1 -1v3m1 -1v4m1 -1v3m1 -1v2m1 -1v2m1 -1v1m1 -2v2m1 -3v2m1 -4v3m1 -6v4m1 -6v3m1 -4v2m1 -3v2m1 -2v1m1 -1v2m1 -1v1m1 -1v5m1 -1v7m1 -1v9m1 -1v7m1 -1v4m1 -1v2m1 -6v5m1 -13v9m1 -19v11m1 -21v11m1 -20v10m1 -16v7m1 -9v3m1 -3v3m1 -1v7m1 -1v10m1 -1v12m1 -1v11m1 -1v10m1 -1v6m1 -1v2m1 -3v3m1 -10v8m1 -17v10m1 -21v12m1 -22v11m1 -20v10m1 -14v5m1 -6v2m1 -2v4m1 -1v9m1 -1v10m1 -1v12m1 -1v11m1 -1v9m1 -1v6m1 -1v1m1 -6v6m1 -14v9m1 -19v11m1 -22v12m1 -22v11m1 -18v8m1 -12v5m1 -5v2m1 -1v6m1 -1v9m1 -1v12m1 -1v12m1 -1v11m1 -1v8m1 -1v4m1 -3v3m1 -8v6m1 -15v10m1 -21v12m1 -23v12m1 -22v11m1 -17v7m1 -9v3m1 -3v3m1 -1v7m1 -1v10m1 -1v13m1 -1v12m1 -1v10m1 -1v6m1 -1v3m1 -4v4m1 -11v8m1 -18v11m1 -22v12m1 -23v12m1 -21v10m1 -15v6m1 -7v2m1 -2v5m1 -1v9m1 -1v11m1 -1v12m1 -1v12m1 -1v9m1 -1v6m1 -1v1m1 -5v5m1 -14v10m1 -20v11m1 -23v13m1 -23v11m1 -19v9m1 -13v5m1 -5v2m1 -1v6m1 -1v10m1 -1v12m1 -1v12m1 -1v11m1 -1v9m1 -1v4m1 -3v3m1 -9v7m1 -16v10m1 -21v12m1 -23v12m1 -22v11m1 -18v8m1 -11v4m1 -4v4m1 -1v7m1 -1v11m1 -1v12m1 -1v13m1 -1v10m1 -1v7m1 -1v3m1 -4v4m1 -11v8m1 -18v11m1 -23v13m1 -24v12m1 -21v10m1 -16v7m1 -8v2m1 -2v5m1 -1v9m1 -1v11m1 -1v13m1 -1v12m1 -1v10m1 -1v6m1 -1v1m1 -6v6m1 -14v9m1 -20v12m1 -24v13m1 -23v11m1 -20v10m1 -14v5m1 -5v2m1 -1v6m1 -1v10m1 -1v12m1 -1v13m1 -1v11m1 -1v9m1 -1v4m1 -2v2m1 -8v7m1 -16v10m1 -22v13m1 -24v12m1 -23v12m1 -19v8m1 -10v3m1 -3v3m1 -1v8m1 -1v10m1 -1v13m1 -1v13m1 -1v10m1 -1v8m1 -1v3m1 -4v4m1 -12v9m1 -19v11m1 -23v13m1 -24v12m1 -21v10m1 -16v7m1 -8v2m1 -2v5m1 -1v8m1 -1v12m1 -1v13m1 -1v12m1 -1v10m1 -1v6m1 -1v2m1 -6v5m1 -14v10m1 -21v12m1 -24v13m1 -24v12m1 -20v9m1 -13v5m1 -5v1m1 -1v7m1 -1v10m1 -1v12m1 -1v13m1 -1v12m1 -1v8m1 -1v5m1 -3v3m1 -8v6m1 -16v11m1 -23v13m1 -24v12m1 -23v12m1 -19v8m1 -10v3m1 -3v3m1 -1v7m1 -1v11m1 -1v13m1 -1v13m1 -1v11m1 -1v7m1 -1v3m1 -4v4m1 -11v8m1 -19v12m1 -23v12m1 -24v13m1 -22v10m1 -16v7m1 -9v3m1 -2v4m1 -1v9m1 -1v12m1 -1v13m1 -1v12m1 -1v10m1 -1v6m1 -1v2m1 -6v6m1 -14v9m1 -20v12m1 -24v13m1 -25v13m1 -21v9m1 -13v5m1 -6v2m1 -1v6m1 -1v10m1 -1v13m1 -1v13m1 -1v12m1 -1v8m1 -1v5m1 -2v2m1 -8v7m1 -17v11m1 -22v12m1 -24v13m1 -24v12m1 -19v8m1 -11v4m1 -4v3m1 -1v8m1 -1v11m1 -1v13m1 -1v13m1 -1v11m1 -1v7m1 -1v3m1 -4v4m1 -11v8m1 -18v11m1 -23v13m1 -25v13m1 -22v10m1 -16v7m1 -9v3m1 -3v5m1 -1v9m1 -1v12m1 -1v13m1 -1v12m1 -1v10m1 -1v6m1 -1v2m1 -6v6m1 -14v9m1 -20v12m1 -24v13m1 -24v12m1 -21v10m1 -14v5m1 -6v2m1 -1v6m1 -1v10m1 -1v12m1 -1v14m1 -1v11m1 -1v9m1 -1v5m1 -2v2m1 -8v7m1 -16v10m1 -22v13m1 -25v13m1 -24v12m1 -19v8m1 -11v4m1 -4v3m1 -1v8m1 -1v10m1 -1v13m1 -1v13m1 -1v11m1 -1v8m1 -1v3m1 -3v3m1 -11v9m1 -19v11m1 -23v13m1 -25v13m1 -22v10m1 -16v7m1 -9v3m1 -3v5m1 -1v8m1 -1v12m1 -1v13m1 -1v13m1 -1v10m1 -1v6m1 -1v2m1 -5v5m1 -14v10m1 -21v12m1 -24v13m1 -24v12m1 -21v10m1 -14v5m1 -6v2m1 -1v6m1 -1v10m1 -1v12m1 -1v13m1 -1v12m1 -1v9m1 -1v5m1 -2v2m1 -8v7m1 -16v10m1 -22v13m1 -25v13m1 -23v11m1 -19v9m1 -12v4m1 -4v3m1 -1v7m1 -1v11m1 -1v13m1 -1v13m1 -1v11m1 -1v8m1 -1v3m1 -3v3m1 -10v8m1 -19v12m1 -24v13m1 -25v13m1 -22v10m1 -16v7m1 -9v3m1 -3v5m1 -1v8m1 -1v12m1 -1v13m1 -1v13m1 -1v10m1 -1v6m1 -1v2m1 -5v5m1 -13v9m1 -21v13m1 -25v13m1 -24v12m1 -21v10m1 -14v5m1 -6v2m1 -1v6m1 -1v9m1 -1v13m1 -1v13m1 -1v12m1 -1v9m1 -1v5m1 -2v2m1 -7v6m1 -16v11m1 -22v12m1 -25v14m1 -24v11m1 -19v9m1 -12v4m1 -4v3m1 -1v7m1 -1v11m1 -1v13m1 -1v13m1 -1v11m1 -1v8m1 -1v3m1 -3v3m1 -10v8m1 -18v11m1 -24v14m1 -25v12m1 -22v11m1 -17v7m1 -9v3m1 -3v4m1 -1v9m1 -1v12m1 -1v13m1 -1v13m1 -1v10m1 -1v6m1 -1v2m1 -5v5m1 -13v9m1 -20v12m1 -24v13m1 -25v13m1 -22v10m1 -14v5m1 -6v2m1 -1v5m1 -1v10m1 -1v13m1 -1v13m1 -1v12m1 -1v9m1 -1v5m1 -2v2m1 -7v6m1 -16v11m1 -22v12m1 -24v13m1 -24v12m1 -20v9m1 -12v4m1 -4v3m1 -1v7m1 -1v11m1 -1v13m1 -1v13m1 -1v11m1 -1v8m1 -1v3m1 -3v3m1 -10v8m1 -18v11m1 -23v13m1 -25v13m1 -23v11m1 -17v7m1 -9v3m1 -3v4m1 -1v9m1 -1v12m1 -1v13m1 -1v12m1 -1v11m1 -1v6m1 -1v2m1 -5v5m1 -13v9m1 -20v12m1 -24v13m1 -25v13m1 -22v10m1 -14v5m1 -6v2m1 -1v5m1 -1v10m1 -1v12m1 -1v14m1 -1v12m1 -1v9m1 -1v5m1 -2v2m1 -7v6m1 -15v10m1 -22v13m1 -25v13m1 -24v12m1 -20v9m1 -12v4m1 -4v3m1 -1v7m1 -1v11m1 -1v12m1 -1v13m1 -1v12m1 -1v8m1 -1v3m1 -3v3m1 -10v8m1 -18v11m1 -23v13m1 -25v13m1 -23v11m1 -17v7m1 -9v3m1 -3v4m1 -1v9m1 -1v11m1 -1v13m1 -1v13m1 -1v11m1 -1v6m1 -1v2m1 -5v5m1 -13v9m1 -20v12m1 -24v13m1 -24v12m1 -21v10m1 -15v6m1 -7v2m1 -1v5m1 -1v10m1 -1v12m1 -1v13m1 -1v13m1 -1v9m1 -1v5m1 -2v2m1 -7v6m1 -15v10m1 -22v13m1 -25v13m1 -24v12m1 -19v8m1 -12v5m1 -5v3m1 -1v7m1 -1v10m1 -1v13m1 -1v13m1 -1v12m1 -1v8m1 -1v3m1 -3v3m1 -10v8m1 -18v11m1 -23v13m1 -25v13m1 -23v11m1 -17v7m1 -9v3m1 -3v4m1 -1v8m1 -1v12m1 -1v13m1 -1v13m1 -1v10m1 -1v7m1 -1v2m1 -5v5m1 -13v9m1 -20v12m1 -24v13m1 -24v12m1 -21v10m1 -15v6m1 -7v2m1 -2v6m1 -1v10m1 -1v12m1 -1v13m1 -1v12m1 -1v10m1 -1v5m1 -1v1m1 -7v7m1 -16v10m1 -22v13m1 -25v13m1 -24v12m1 -19v8m1 -12v5m1 -5v2m1 -1v7m1 -1v11m1 -1v13m1 -1v13m1 -1v11m1 -1v9m1 -1v3m1 -3v3m1 -9v7m1 -18v12m1 -24v13m1 -24v12m1 -23v12m1 -18v7m1 -9v3m1 -3v4m1 -1v8m1 -1v12m1 -1v13m1 -1v13m1 -1v10m1 -1v7m1 -1v2m1 -4v4m1 -12v9m1 -20v12m1 -25v14m1 -25v12m1 -21v10m1 -15v6m1 -7v2m1 -2v6m1 -1v9m1 -1v13m1 -1v13m1 -1v12m1 -1v10m1 -1v5m1 -1v1m1 -7v7m1 -16v10m1 -21v12m1 -24v13m1 -24v12m1 -20v9m1 -13v5m1 -5v2m1 -1v7m1 -1v11m1 -1v13m1 -1v13m1 -1v11m1 -1v9m1 -1v3m1 -3v3m1 -9v7m1 -17v11m1 -23v13m1 -25v13m1 -23v11m1 -18v8m1 -10v3m1 -3v4m1 -1v8m1 -1v12m1 -1v13m1 -1v12m1 -1v11m1 -1v7m1 -1v2m1 -4v4m1 -12v9m1 -20v12m1 -24v13m1 -25v13m1 -22v10m1 -15v6m1 -7v2m1 -2v6m1 -1v9m1 -1v12m1 -1v14m1 -1v12m1 -1v10m1 -1v5m1 -1v1m1 -6v6m1 -15v10m1 -22v13m1 -25v13m1 -24v12m1 -20v9m1 -13v5m1 -5v2m1 -1v7m1 -1v11m1 -1v12m1 -1v14m1 -1v11m1 -1v8m1 -1v4m1 -3v3m1 -9v7m1 -17v11m1 -23v13m1 -25v13m1 -23v11m1 -18v8m1 -10v3m1 -3v4m1 -1v8m1 -1v11m1 -1v13m1 -1v13m1 -1v11m1 -1v7m1 -1v2m1 -4v4m1 -12v9m1 -20v12m1 -24v13m1 -25v13m1 -22v10m1 -15v6m1 -7v2m1 -2v6m1 -1v9m1 -1v12m1 -1v13m1 -1v13m1 -1v9m1 -1v6m1 -1v1m1 -6v6m1 -15v10m1 -22v13m1 -25v13m1 -24v12m1 -20v9m1 -13v5m1 -5v2m1 -1v7m1 -1v10m1 -1v13m1 -1v13m1 -1v12m1 -1v8m1 -1v4m1 -2v2m1 -9v8m1 -18v11m1 -23v13m1 -25v13m1 -23v11m1 -18v8m1 -10v3m1 -3v4m1 -1v8m1 -1v11m1 -1v13m1 -1v13m1 -1v11m1 -1v7m1 -1v2m1 -4v4m1 -12v9m1 -20v12m1 -24v13m1 -24v12m1 -22v11m1 -16v6m1 -7v2m1 -2v5m1 -1v10m1 -1v12m1 -1v13m1 -1v13m1 -1v9m1 -1v6m1 -1v1m1 -6v6m1 -15v10m1 -22v13m1 -25v13m1 -24v12m1 -20v9m1 -13v5m1 -5v2m1 -1v7m1 -1v10m1 -1v13m1 -1v13m1 -1v12m1 -1v8m1 -1v4m1 -2v2m1 -9v8m1 -18v11m1 -23v13m1 -25v13m1 -23v11m1 -18v8m1 -10v3m1 -3v4m1 -1v8m1 -1v11m1 -1v13m1 -1v13m1 -1v11m1 -1v7m1 -1v2m1 -4v4m1 -12v9m1 -19v11m1 -24v14m1 -25v12m1 -22v11m1 -16v6m1 -7v2m1 -2v5m1 -1v10m1 -1v12m1 -1v13m1 -1v12m1 -1v10m1 -1v6m1 -1v1m1 -6v6m1 -15v10m1 -21v12m1 -25v14m1 -25v12m1 -20v9m1 -13v5m1 -5v2m1 -1v7m1 -1v10m1 -1v13m1 -1v13m1 -1v12m1 -1v8m1 -1v4m1 -2v2m1 -9v8m1 -17v10m1 -22v13m1 -25v13m1 -24v12m1 -19v8m1 -10v3m1 -3v3m1 -1v8m1 -1v12m1 -1v13m1 -1v13m1 -1v10m1 -1v8m1 -1v2m1 -4v4m1 -11v8m1 -19v12m1 -24v13m1 -25v13m1 -22v10m1 -16v7m1 -8v2m1 -2v5m1 -1v9m1 -1v12m1 -1v14m1 -1v12m1 -1v10m1 -1v6m1 -1v1m1 -6v6m1 -15v10m1 -21v12m1 -24v13m1 -24v12m1 -21v10m1 -14v5m1 -5v2m1 -1v6m1 -1v11m1 -1v12m1 -1v14m1 -1v11m1 -1v9m1 -1v4m1 -2v2m1 -8v7m1 -17v11m1 -23v13m1 -25v13m1 -23v11m1 -18v8m1 -11v4m1 -4v3m1 -1v8m1 -1v11m1 -1v13m1 -1v13m1 -1v11m1 -1v8m1 -1v2m1 -4v4m1 -11v8m1 -19v12m1 -24v13m1 -25v13m1 -22v10m1 -16v7m1 -8v2m1 -2v5m1 -1v9m1 -1v12m1 -1v13m1 -1v13m1 -1v10m1 -1v6m1 -1v1m1 -6v6m1 -14v9m1 -21v13m1 -25v13m1 -24v12m1 -21v10m1 -14v5m1 -5v2m1 -1v6m1 -1v11m1 -1v12m1 -1v13m1 -1v12m1 -1v9m1 -1v4m1 -2v2m1 -8v7m1 -17v11m1 -23v13m1 -25v13m1 -23v11m1 -18v8m1 -11v4m1 -4v3m1 -1v8m1 -1v11m1 -1v13m1 -1v13m1 -1v11m1 -1v8m1 -1v2m1 -4v4m1 -11v8m1 -19v12m1 -24v13m1 -25v13m1 -22v10m1 -16v7m1 -8v2m1 -2v5m1 -1v9m1 -1v12m1 -1v13m1 -1v13m1 -1v10m1 -1v6m1 -1v1m1 -6v6m1 -14v9m1 -21v13m1 -25v13m1 -24v12m1 -20v9m1 -14v6m1 -6v2m1 -1v6m1 -1v10m1 -1v13m1 -1v13m1 -1v12m1 -1v9m1 -1v4m1 -2v2m1 -8v7m1 -17v11m1 -23v13m1 -25v13m1 -23v11m1 -18v8m1 -11v4m1 -4v3m1 -1v8m1 -1v11m1 -1v13m1 -1v13m1 -1v11m1 -1v7m1 -1v3m1 -4v4m1 -11v8m1 -18v11m1 -24v14m1 -25v12m1 -22v11m1 -17v7m1 -8v2m1 -2v5m1 -1v9m1 -1v12m1 -1v13m1 -1v13m1 -1v10m1 -1v6m1 -1v1m1 -5v5m1 -14v10m1 -21v12m1 -25v14m1 -25v12m1 -20v9m1 -14v6m1 -6v2m1 -1v6m1 -1v10m1 -1v13m1 -1v13m1 -1v12m1 -1v9m1 -1v4m1 -2v2m1 -8v7m1 -16v10m1 -22v13m1 -25v13m1 -24v12m1 -19v8m1 -11v4m1 -4v3m1 -1v8m1 -1v11m1 -1v13m1 -1v13m1 -1v11m1 -1v7m1 -1v3m1 -3v3m1 -11v9m1 -19v11m1 -23v13m1 -25v13m1 -23v11m1 -17v7m1 -8v2m1 -2v5m1 -1v9m1 -1v12m1 -1v13m1 -1v12m1 -1v10m1 -1v7m1 -1v1m1 -5v5m1 -14v10m1 -21v12m1 -24v13m1 -25v13m1 -21v9m1 -14v6m1 -6v2m1 -1v6m1 -1v10m1 -1v12m1 -1v14m1 -1v12m1 -1v9m1 -1v4m1 -2v2m1 -8v7m1 -16v10m1 -22v13m1 -25v13m1 -24v12m1 -19v8m1 -11v4m1 -4v3m1 -1v7m1 -1v11m1 -1v13m1 -1v13m1 -1v12m1 -1v7m1 -1v3m1 -3v3m1 -10v8m1 -19v12m1 -24v13m1 -25v13m1 -23v11m1 -17v7m1 -8v2m1 -2v5m1 -1v8m1 -1v12m1 -1v13m1 -1v13m1 -1v10m1 -1v7m1 -1v1m1 -5v5m1 -14v10m1 -21v12m1 -24v13m1 -24v12m1 -21v10m1 -15v6m1 -6v2m1 -1v6m1 -1v10m1 -1v12m1 -1v13m1 -1v12m1 -1v9m1 -1v5m1 -2v2m1 -8v7m1 -16v10m1 -22v13m1 -25v13m1 -24v12m1 -19v8m1 -11v4m1 -4v3m1 -1v7m1 -1v11m1 -1v13m1 -1v13m1 -1v11m1 -1v8m1 -1v3m1 -3v3m1 -10v8m1 -19v12m1 -24v13m1 -25v13m1 -22v10m1 -16v7m1 -9v3m1 -3v4m1 -1v9m1 -1v12m1 -1v13m1 -1v13m1 -1v11m1 -1v6m1 -1v2m1 -5v5m1 -14v10m1 -21v12m1 -25v14m1 -26v13m1 -22v10m1 -15v6m1 -7v2m1 -1v6m1 -1v11m1 -1v13m1 -1v14m1 -1v12m1 -1v10m1 -1v5m1 -2v2m1 -8v7m1 -17v11m1 -23v13m1 -26v14m1 -26v13m1 -21v9m1 -12v4m1 -4v3m1 -1v8m1 -1v11m1 -1v14m1 -1v14m1 -1v12m1 -1v8m1 -1v3m1 -3v3m1 -11v9m1 -20v12m1 -25v14m1 -26v13m1 -24v12m1 -18v7m1 -9v3m1 -3v5m1 -1v9m1 -1v12m1 -1v14m1 -1v14m1 -1v11m1 -1v6m1 -1v2m1 -5v5m1 -14v10m1 -22v13m1 -26v14m1 -26v13m1 -22v10m1 -15v6m1 -7v2m1 -1v6m1 -1v10m1 -1v13m1 -1v14m1 -1v13m1 -1v10m1 -1v5m1 -2v2m1 -8v7m1 -17v11m1 -23v13m1 -26v14m1 -25v12m1 -21v10m1 -13v4m1 -4v3m1 -1v7m1 -1v12m1 -1v14m1 -1v14m1 -1v11m1 -1v9m1 -1v3m1 -3v3m1 -11v9m1 -20v12m1 -24v13m1 -26v14m1 -25v12m1 -18v7m1 -9v3m1 -3v5m1 -1v9m1 -1v12m1 -1v14m1 -1v13m1 -1v11m1 -1v7m1 -1v2m1 -5v5m1 -14v10m1 -22v13m1 -26v14m1 -26v13m1 -22v10m1 -15v6m1 -7v2m1 -1v6m1 -1v10m1 -1v13m1 -1v14m1 -1v13m1 -1v10m1 -1v5m1 -2v2m1 -8v7m1 -16v10m1 -23v14m1 -27v14m1 -25v12m1 -20v9m1 -13v5m1 -5v3m1 -1v7m1 -1v12m1 -1v13m1 -1v14m1 -1v12m1 -1v9m1 -1v3m1 -3v3m1 -10v8m1 -19v12m1 -25v14m1 -27v14m1 -24v11m1 -18v8m1 -10v3m1 -3v4m1 -1v9m1 -1v13m1 -1v14m1 -1v13m1 -1v11m1 -1v7m1 -1v2m1 -5v5m1 -14v10m1 -21v12m1 -25v14m1 -27v14m1 -23v10m1 -15v6m1 -7v2m1 -1v6m1 -1v10m1 -1v13m1 -1v14m1 -1v13m1 -1v10m1 -1v5m1 -2v2m1 -7v6m1 -16v11m1 -24v14m1 -27v14m1 -25v12m1 -20v9m1 -13v5m1 -5v3m1 -1v7m1 -1v12m1 -1v13m1 -1v14m1 -1v12m1 -1v9m1 -1v3m1 -3v3m1 -10v8m1 -19v12m1 -25v14m1 -27v14m1 -24v11m1 -18v8m1 -10v3m1 -3v4m1 -1v9m1 -1v12m1 -1v14m1 -1v14m1 -1v11m1 -1v7m1 -1v2m1 -5v5m1 -13v9m1 -21v13m1 -26v14m1 -26v13m1 -23v11m1 -16v6m1 -7v2m1 -1v5m1 -1v11m1 -1v13m1 -1v14m1 -1v13m1 -1v9m1 -1v6m1 -2v2m1 -7v6m1 -16v11m1 -23v13m1 -27v15m1 -26v12m1 -21v10m1 -14v5m1 -5v2m1 -1v8m1 -1v12m1 -1v14m1 -1v14m1 -1v13m1 -1v9m1 -1v4m1 -3v3m1 -11v9m1 -20v12m1 -26v15m1 -28v14m1 -25v12m1 -20v9m1 -11v3m1 -3v4m1 -1v10m1 -1v13m1 -1v14m1 -1v15m1 -1v11m1 -1v8m1 -1v2m1 -5v5m1 -14v10m1 -22v13m1 -27v15m1 -28v14m1 -24v11m1 -17v7m1 -8v2m1 -2v7m1 -1v10m1 -1v14m1 -1v15m1 -1v14m1 -1v10m1 -1v6m1 -2v2m1 -7v6m1 -17v12m1 -25v14m1 -28v15m1 -27v13m1 -22v10m1 -14v5m1 -5v3m1 -1v7m1 -1v12m1 -1v14m1 -1v15m1 -1v13m1 -1v9m1 -1v4m1 -3v3m1 -10v8m1 -20v13m1 -26v14m1 -28v15m1 -26v12m1 -20v9m1 -11v3m1 -3v4m1 -1v9m1 -1v13m1 -1v15m1 -1v14m1 -1v12m1 -1v8m1 -1v2m1 -5v5m1 -14v10m1 -22v13m1 -27v15m1 -28v14m1 -24v11m1 -17v7m1 -8v2m1 -2v6m1 -1v11m1 -1v14m1 -1v15m1 -1v13m1 -1v11m1 -1v6m1 -1v1m1 -7v7m1 -17v11m1 -25v15m1 -28v14m1 -27v14m1 -23v10m1 -14v5m1 -5v2m1 -1v8m1 -1v12m1 -1v14m1 -1v15m1 -1v13m1 -1v9m1 -1v4m1 -3v3m1 -10v8m1 -20v13m1 -26v14m1 -28v15m1 -26v12m1 -20v9m1 -11v3m1 -3v4m1 -1v9m1 -1v13m1 -1v15m1 -1v14m1 -1v12m1 -1v8m1 -1v2m1 -5v5m1 -14v10m1 -22v13m1 -27v15m1 -28v14m1 -24v11m1 -17v7m1 -8v2m1 -2v6m1 -1v11m1 -1v13m1 -1v15m1 -1v14m1 -1v11m1 -1v6m1 -1v1m1 -7v7m1 -17v11m1 -24v14m1 -28v15m1 -28v14m1 -23v10m1 -14v5m1 -5v2m1 -1v8m1 -1v12m1 -1v14m1 -1v15m1 -1v13m1 -1v9m1 -1v4m1 -3v3m1 -10v8m1 -19v12m1 -26v15m1 -28v14m1 -26v13m1 -21v9m1 -11v3m1 -3v4m1 -1v9m1 -1v13m1 -1v14m1 -1v15m1 -1v12m1 -1v8m1 -1v2m1 -5v5m1 -13v9m1 -22v14m1 -27v14m1 -27v14m1 -25v12m1 -18v7m1 -8v2m1 -2v6m1 -1v11m1 -1v13m1 -1v15m1 -1v14m1 -1v11m1 -1v6m1 -1v1m1 -7v7m1 -17v11m1 -24v14m1 -28v15m1 -27v13m1 -22v10m1 -15v6m1 -6v2m1 -1v8m1 -1v11m1 -1v15m1 -1v14m1 -1v13m1 -1v10m1 -1v4m1 -3v3m1 -10v8m1 -19v12m1 -26v15m1 -28v14m1 -26v13m1 -20v8m1 -11v4m1 -4v4m1 -1v9m1 -1v13m1 -1v14m1 -1v15m1 -1v12m1 -1v8m1 -1v2m1 -4v4m1 -13v10m1 -22v13m1 -27v15m1 -28v14m1 -25v12m1 -18v7m1 -8v2m1 -2v6m1 -1v10m1 -1v14m1 -1v15m1 -1v14m1 -1v10m1 -1v7m1 -1v1m1 -7v7m1 -17v11m1 -24v14m1 -28v15m1 -27v13m1 -22v10m1 -15v6m1 -6v2m1 -1v8m1 -1v11m1 -1v14m1 -1v15m1 -1v13m1 -1v10m1 -1v4m1 -3v3m1 -10v8m1 -19v12m1 -25v14m1 -28v15m1 -27v13m1 -20v8m1 -11v4m1 -4v4" stroke="#ff6929"/><path d="M33.5 765v24m1 -71v48m1 -61v14m1 -65v52m1 -81v30m1 -36v7m1 -6v3m1 -1v3m1 -1v3m1 -1v3m1 -1v3m1 -1v3m1 -1v3m1 -1v3m1 -1v3m1 -1v3m1 -1v3m1 -1v3m1 -1v3m1 -1v3m1 -1v3m1 -1v3m1 -1v3m1 -1v3m1 -1v3m1 -1v3m1 -1v3m1 -1v3m1 -1v3m1 -1v3m1 -1v3m1 -1v3m1 -1v3m1 -1v3m1 -1v3m1 -1v3m1 -1v3m1 -2v3m1 -1v1m1 -1v2m1 -1v2m1 -3v2m1 -3v2m1 -2v1m1 -1v2m1 -1v1m1 -1v1m1 -2v2m1 -2v1m1 -1v2m1 -1v1m1 -1v1m1 -2v2m1 -2v1m1 -1v1m1 -1v2m1 -1v1m1 -2v2m1 -2v1m1 -1v1m1 -1v2m1 -1v1m1 -1v1m1 -2v2m1 -2v1m1 -1v1m1 -1v2m1 -1v1m1 -2v2m1 -2v1m1 -1v2m1 -1v1m1 -1v1m1 -2v2m1 -2v1m1 -1v1m1 -1v2m1 -1v1m1 -2v2m1 -2v1m1 -1v1m1 -1v2m1 -1v1m1 -1v1m1 -2v2m1 -2v1m1 -1v1m1 -1v2m1 -1v1m1 -2v2m1 -2v1m1 -1v2m1 -1v1m1 -1v1m1 -2v2m1 -4v3m1 -5v3m1 -5v3m1 -6v4m1 -6v3m1 -4v2m1 -3v2m1 -2v1m1 -2v2m1 -3v2m1 -2v1m1 -2v2m1 -2v1m1 -2v2m1 -2v1m1 -2v2m1 -3v2m1 -2v1m1 -1v1m1 -2v2m1 -3v2m1 -2v1m1 -1v1m1 -1v1m1 -2v2m1 -3v2m1 -2v1m1 -1v1m1 -1v1m1 -1v1m1 -2v2m1 -3v2m1 -2v1m1 -1v1m1 -1v1m1 -2v2m1 -2v1m1 -1v1m1 -1v1m1 -2v2m1 -2v1m1 -1v1m1 -2v2m1 -2v1m1 -1v1m1 -1v1m1 -2v2m1 -2v1m1 -1v1m1 -1v1m1 -2v2m1 -2v1m1 -2v2m1 -2v1m1 -1v1m1 -1v1m1 -1v1m1 -1v1m1 -2v2m1 -2v2m1 -2v2m1 -2v1m1 -1v1m1 -1v1m1 -1v1m1 -1v1m1 -2v2m1 -2v1m1 -1v1m1 -1v1m1 -1v1m1 -1v1m1 -1v1m1 -2v2m1 -2v1m1 -1v1m1 -1v2m1 -2v1m1 -2v2m1 -2v1m1 -1v2m1 -1v1m1 -2v2m1 -2v1m1 -2v2m1 -1v1m1 -1v1m1 -2v2m1 -2v1m1 -1v1m1 -1v1m1 -1v1m1 -1v1m1 -2v2m1 -2v1m1 -1v1m1 -1v1m1 -1v2m1 -2v1m1 -1v1m1 -1v1m1 -1v1m1 -1v1m1 -2v2m1 -2v1m1 -1v1m1 -1v1m1 -1v1m1 -1v1m1 -1v1m1 -1v1m1 -1v1m1 -1v1m1 -2v2m1 -2v1m1 -1v1m1 -1v1m1 -1v1m1 -1v2m1 -2v1m1 -1v1m1 -1v1m1 -1v1m1 -1v1m1 -2v2m1 -2v1m1 -1v1m1 -1v1m1 -1v1m1 -1v1m1 -1v1m1 -1v1m1 -1v1m1 -1v1m1 -2v2m1 -2v1m1 -1v1m1 -1v1m1 -1v1m1 -1v1m1 -1v1m1 -1v1m1 -1v1m1 -1v1m1 -1v1m1 -2v2m1 -2v1m1 -1v1m1 -1v2m1 -1v1m1 -2v2m1 -2v1m1 -1v1m1 -1v1m1 -1v1m1 -1v1m1 -1v1m1 -1v1m1 -1v1m1 -1v1m1 -1v1m1 -2v2m1 -2v1m1 -1v2m1 -1v1m1 -1v1m1 -2v2m1 -2v1m1 -1v1m1 -1v1m1 -1v2m1 -2v1m1 -1v1m1 -1v1m1 -1v1m1 -1v1m1 -1v1m1 -1v1m1 -1v1m1 -1v1m1 -1v1m1 -1v1m1 -2v2m1 -2v1m1 -1v2m1 -1v1m1 -2v2m1 -2v3m1 -1v4m1 -1v3m1 -1v7m1 -1v5m1 -1v6m1 -1v5m1 -1v5m1 -1v2m1 -1v1m1 -2v2m1 -3v2m1 -3v2m1 -2v1m1 -2v2m1 -3v2m1 -3v2m1 -2v1m1 -1v1m1 -1v1m1 -2v2m1 -3v2m1 -2v1m1 -1v1m1 -1v1m1 -1v1m1 -2v2m1 -3v2m1 -2v1m1 -1v2m1 -2v2m1 -3v2m1 -3v2m1 -2v2m1 -1v1m1 -1v1m1 -2v2m1 -3v2m1 -2v1m1 -1v1m1 -1v2m1 -2v2m1 -3v2m1 -2v1m1 -1v1m1 -1v1m1 -2v2m1 -2v1m1 -2v2m1 -2v2m1 -1v1m1 -2v2m1 -3v2m1 -3v2m1 -2v2m1 -1v1m1 -1v2m1 -3v2m1 -2v1m1 -1v1m1 -1v1m1 -1v1m1 -1v1m1 -2v2m1 -2v1m1 -1v1m1 -1v2m1 -2v2m1 -3v2m1 -2v1m1 -1v2m1 -1v1m1 -2v2m1 -3v2m1 -2v1m1 -1v2m1 -1v1m1 -2v2m1 -2v1m1 -1v1m1 -1v1m1 -1v1m1 -1v1m1 -2v2m1 -2v1m1 -2v2m1 -2v2m1 -1v1m1 -1v1m1 -2v2m1 -2v1m1 -1v2m1 -1v1m1 -2v2m1 -2v1m1 -1v1m1 -1v1m1 -1v1m1 -1v1m1 -2v2m1 -2v1m1 -1v1m1 -1v2m1 -1v1m1 -2v2m1 -3v2m1 -2v2m1 -1v1m1 -1v1m1 -2v2m1 -2v1m1 -1v1m1 -1v1m1 -1v2m1 -2v2m1 -3v2m1 -2v1m1 -1v2m1 -1v1m1 -1v1m1 -2v2m1 -3v2m1 -2v2m1 -1v1m1 -1v2m1 -2v1m1 -2v2m1 -2v2m1 -2v2m1 -2v2m1 -2v1m1 -1v1m1 -1v1m1 -1v1m1 -1v1m1 -1v1m1 -2v2m1 -2v1m1 -1v2m1 -1v1m1 -1v1m1 -2v2m1 -3v2m1 -2v2m1 -1v2m1 -2v2m1 -2v1m1 -2v2m1 -2v2m1 -1v1m1 -1v1m1 -1v1m1 -2v2m1 -2v1m1 -1v2m1 -1v1m1 -2v2m1 -2v1m1 -1v1m1 -1v1m1 -1v2m1 -2v2m1 -2v1m1 -1v1m1 -1v1m1 -1v2m1 -2v2m1 -3v2m1 -2v1m1 -1v1m1 -1v2m1 -2v2m1 -2v1m1 -1v1m1 -1v1m1 -1v2m1 -2v2m1 -2v2m1 -2v1m1 -1v1m1 -1v1m1 -1v1m1 -1v1m1 -2v2m1 -2v1m1 -1v2m1 -1v1m1 -1v1m1 -2v2m1 -2v1m1 -1v1m1 -1v2m1 -2v2m1 -2v1m1 -1v1m1 -1v1m1 -1v2m1 -1v1m1 -2v2m1 -3v2m1 -2v2m1 -1v1m1 -1v2m1 -2v1m1 -2v2m1 -2v2m1 -1v1m1 -1v1m1 -1v1m1 -2v2m1 -2v1m1 -1v2m1 -1v2m1 -2v2m1 -2v1m1 -2v2m1 -2v1m1 -1v2m1 -1v1m1 -2v2m1 -2v1m1 -1v1m1 -1v2m1 -1v1m1 -2v2m1 -2v1m1 -1v1m1 -1v2m1 -1v1m1 -2v2m1 -2v1m1 -1v1m1 -1v1m1 -1v2m1 -2v2m1 -2v1m1 -2v2m1 -1v1m1 -1v2m1 -2v2m1 -3v2m1 -2v1m1 -1v2m1 -1v2m1 -2v2m1 -3v2m1 -2v1m1 -1v1m1 -1v2m1 -1v1m1 -1v1m1 -2v2m1 -2v1m1 -1v1m1 -1v2m1 -1v1m1 -2v2m1 -2v1m1 -1v1m1 -1v2m1 -2v2m1 -2v1m1 -2v2m1 -2v2m1 -1v2m1 -1v1m1 -2v2m1 -3v2m1 -2v1m1 -1v2m1 -1v2m1 -2v1m1 -2v2m1 -2v1m1 -1v2m1 -1v1m1 -2v2m1 -2v1m1 -1v1m1 -1v2m1 -1v1m1 -1v1m1 -2v2m1 -2v1m1 -1v1m1 -1v2m1 -1v1m1 -3v3m1 -3v1m1 -1v2m1 -1v1m1 -1v2m1 -2v1m1 -1v1m1 -1v1m1 -1v1m1 -1v2m1 -2v2m1 -2v1m1 -2v2m1 -1v2m1 -1v1m1 -2v2m1 -3v2m1 -2v2m1 -1v1m1 -1v2m1 -2v2m1 -2v1m1 -1v1m1 -1v1m1 -1v1m1 -1v2m1 -3v3m1 -3v1m1 -1v2m1 -1v1m1 -1v1m1 -1v1m1 -2v2m1 -2v1m1 -1v2m1 -1v2m1 -3v2m1 -2v1m1 -1v2m1 -2v2m1 -1v1m1 -1v1m1 -2v2m1 -2v1m1 -1v2m1 -1v1m1 -1v1m1 -2v2m1 -2v1m1 -1v2m1 -1v1m1 -1v1m1 -2v2m1 -2v1m1 -1v1m1 -1v2m1 -1v1m1 -2v2m1 -2v1m1 -1v1m1 -1v2m1 -1v1m1 -1v1m1 -2v2m1 -2v1m1 -1v2m1 -1v1m1 -1v1m1 -2v2m1 -2v1m1 -1v2m1 -1v1m1 -1v1m1 -2v2m1 -2v1m1 -1v1m1 -1v2m1 -1v1m1 -2v2m1 -2v1m1 -1v1m1 -1v2m1 -1v1m1 -2v2m1 -2v1m1 -1v1m1 -1v2m1 -1v1m1 -2v2m1 -3v2m1 -2v2m1 -1v1m1 -1v1m1 -1v1m1 -1v1m1 -1v1m1 -1v1m1 -1v2m1 -1v1m1 -2v2m1 -2v1m1 -1v1m1 -1v1m1 -1v2m1 -2v2m1 -3v2m1 -2v2m1 -1v2m1 -1v1m1 -2v2m1 -2v1m1 -1v1m1 -1v1m1 -1v2m1 -1v1m1 -2v2m1 -3v2m1 -1v1m1 -1v2m1 -2v2m1 -2v1m1 -1v1m1 -1v1m1 -1v2m1 -1v1m1 -2v2m1 -3v2m1 -2v2m1 -1v1m1 -1v2m1 -2v2m1 -2v1m1 -1v1m1 -1v2m1 -1v1m1 -2v2m1 -2v1m1 -1v1m1 -1v1m1 -1v2m1 -1v1m1 -2v2m1 -2v1m1 -1v1m1 -1v1m1 -1v2m1 -2v2m1 -3v2m1 -2v2m1 -1v1m1 -1v1m1 -1v1m1 -1v1m1 -1v1m1 -1v1m1 -1v2m1 -2v2m1 -2v1m1 -2v2m1 -1v1m1 -1v2m1 -2v2m1 -3v2m1 -2v2m1 -1v1m1 -1v2m1 -1v1m1 -2v2m1 -3v2m1 -1v1m1 -1v1m1 -1v2m1 -2v2m1 -2v1m1 -1v1m1 -1v2m1 -2v2m1 -2v1m1 -2v2m1 -2v2m1 -1v2m1 -1v1m1 -2v2m1 -2v1m1 -1v1m1 -1v1m1 -1v1m1 -1v1m1 -1v1m1 -1v1m1 -1v1m1 -1v1m1 -1v2m1 -2v2m1 -2v1m1 -1v1m1 -1v2m1 -2v2m1 -2v1m1 -2v2m1 -2v2m1 -1v1m1 -1v2m1 -2v2m1 -2v1m1 -2v2m1 -2v2m1 -1v2m1 -2v2m1 -2v1m1 -1v1m1 -1v1m1 -1v1m1 -1v1m1 -1v1m1 -1v1m1 -1v1m1 -1v2m1 -1v1m1 -2v2m1 -3v2m1 -1v1m1 -1v1m1 -1v2m1 -2v2m1 -3v2m1 -2v2m1 -1v2m1 -2v2m1 -2v2m1 -2v1m1 -1v1m1 -1v1m1 -1v2m1 -2v2m1 -2v1m1 -2v2m1 -2v2m1 -1v2m1 -2v2m1 -2v1m1 -2v2m1 -1v1m1 -1v1m1 -1v1m1 -1v1m1 -1v1m1 -1v1m1 -1v1m1 -1v1m1 -1v1m1 -1v1m1 -2v2m1 -2v2m1 -1v2m1 -2v2m1 -3v2m1 -2v1m1 -1v2m1 -1v2m1 -1v1m1 -3v3m1 -3v2m1 -1v1m1 -1v2m1 -2v2m1 -2v1m1 -1v1m1 -1v1m1 -1v1m1 -1v2m1 -2v2m1 -3v2m1 -2v2m1 -1v1m1 -1v2m1 -2v2m1 -3v2m1 -2v1m1 -1v2m1 -1v1m1 -1v1m1 -1v1m1 -1v1m1 -1v1m1 -1v2m1 -1v1m1 -3v3m1 -3v2m1 -1v1m1 -1v2m1 -1v1m1 -2v2m1 -2v1m1 -1v1m1 -1v1m1 -1v1m1 -1v1m1 -1v1m1 -2v2m1 -1v2m1 -1v1m1 -2v2m1 -2v1m1 -2v2m1 -2v2m1 -1v1m1 -1v1m1 -1v1m1 -1v1m1 -1v1m1 -1v2m1 -1v1m1 -2v2m1 -2v1m1 -2v2m1 -2v2m1 -1v1m1 -1v1m1 -2v2m1 -2v2m1 -1v2m1 -2v2m1 -2v1m1 -1v1m1 -1v1m1 -1v1m1 -1v2m1 -2v1m1 -1v1m1 -1v1m1 -1v1m1 -1v2m1 -2v2m1 -2v1m1 -2v2m1 -2v2m1 -1v1m1 -1v2m1 -2v1m1 -1v1m1 -1v1m1 -1v1m1 -1v2m1 -2v2m1 -2v1m1 -2v2m1 -2v2m1 -1v2m1 -2v2m1 -2v1m1 -1v1m1 -1v1m1 -1v2m1 -1v1m1 -1v1m1 -1v1m1 -1v1m1 -1v1m1 -1v1m1 -2v2m1 -2v1m1 -1v1m1 -1v2m1 -1v1m1 -1v1m1 -2v2m1 -2v1m1 -1v2m1 -2v2m1 -2v1m1 -2v2m1 -2v2m1 -1v1m1 -1v2m1 -2v2m1 -3v2m1 -2v2m1 -1v1m1 -1v2m1 -2v2m1 -2v1m1 -2v2m1 -2v2m1 -1v1m1 -1v1m1 -1v1m1 -1v1m1 -1v1m1 -1v1m1 -1v1m1 -1v1m1 -1v1m1 -2v2m1 -2v2m1 -1v2m1 -2v1m1 -1v1m1 -1v1m1 -1v1m1 -1v1m1 -1v1m1 -1v1m1 -2v2m1 -2v2m1 -1v2m1 -1v1m1 -2v2m1 -2v1m1 -1v1m1 -1v2m1 -1v1m1 -2v2m1 -3v2m1 -2v1m1 -1v2m1 -1v1m1 -1v1m1 -2v2m1 -2v2m1 -1v1m1 -1v2m1 -2v2m1 -3v2m1 -2v2m1 -1v1m1 -1v1m1 -1v1m1 -1v1m1 -2v2m1 -1v1m1 -1v2m1 -1v1m1 -2v2m1 -2v1m1 -2v2m1 -1v1m1 -1v2m1 -2v2m1 -3v2m1 -2v2m1 -2v3m1 -1v1m1 -2v2m1 -3v2m1 -2v1m1 -1v2m1 -1v2m1 -1v1m1 -2v2m1 -3v2m1 -1v1m1 -1v1m1 -1v1m1 -1v1m1 -1v1m1 -1v1m1 -1v1m1 -1v2m1 -2v2m1 -3v2m1 -2v2m1 -1v2m1 -2v2m1 -2v1m1 -1v1m1 -1v1m1 -1v1m1 -1v2m1 -2v2m1 -2v1m1 -1v1m1 -1v1m1 -1v2m1 -2v2m1 -2v1m1 -1v1m1 -1v1m1 -1v1m1 -1v1m1 -1v1m1 -1v1m1 -1v1m1 -1v1m1 -1v1m1 -1v1m1 -1v1m1 -2v2m1 -2v3m1 -1v1m1 -2v2m1 -3v2m1 -1v1m1 -1v1m1 -1v2m1 -2v2m1 -2v2m1 -3v2m1 -2v2m1 -1v1m1 -1v1m1 -1v1m1 -2v2m1 -2v2m1 -1v1m1 -1v2m1 -2v2m1 -3v2m1 -2v2m1 -1v2m1 -1v1m1 -2v2m1 -2v1m1 -1v1m1 -1v1m1 -1v1m1 -1v1m1 -1v1m1 -1v1m1 -1v1m1 -1v2m1 -2v1m1 -1v1m1 -2v2m1 -2v2m1 -1v2m1 -1v1m1 -2v2m1 -3v2m1 -2v2m1 -1v1m1 -1v1m1 -1v1m1 -2v2m1 -2v2m1 -1v1m1 -1v2m1 -2v1m1 -1v1m1 -1v1m1 -1v1m1 -1v2m1 -2v2m1 -2v1m1 -2v2m1 -2v2m1 -1v2m1 -1v1m1 -2v2m1 -3v2m1 -2v2m1 -1v2m1 -1v1m1 -2v2m1 -2v1m1 -1v1m1 -1v1m1 -1v1m1 -1v1m1 -1v1m1 -1v1m1 -1v1m1 -1v2m1 -2v2m1 -2v1m1 -1v1m1 -1v1m1 -1v2m1 -2v2m1 -2v1m1 -2v2m1 -2v2m1 -1v1m1 -1v1m1 -1v1m1 -2v2m1 -2v2m1 -1v1m1 -1v1m1 -1v1m1 -1v1m1 -1v1m1 -1v1m1 -1v2m1 -2v2m1 -2v1m1 -2v2m1 -2v2m1 -1v2m1 -2v2m1 -2v1m1 -2v2m1 -2v2m1 -1v2m1 -2v2m1 -3v2m1 -2v2m1 -1v1m1 -1v1m1 -1v1m1 -1v1m1 -1v1m1 -1v1m1 -1v1m1 -1v1m1 -1v1m1 -2v2m1 -2v2m1 -1v1m1 -1v1m1 -1v1m1 -1v1m1 -2v2m1 -2v2m1 -1v2m1 -2v2m1 -2v1m1 -2v2m1 -2v2m1 -1v2m1 -2v2m1 -2v1m1 -2v2m1 -2v2m1 -1v1m1 -1v2m1 -2v2m1 -3v2m1 -2v2m1 -1v2m1 -2v2m1 -2v1m1 -1v1m1 -1v1m1 -1v1m1 -1v2m1 -2v2m1 -2v1m1 -1v1m1 -1v1m1 -1v1m1 -1v2m1 -2v1m1 -2v2m1 -2v2m1 -1v1m1 -1v2m1 -2v2m1 -2v1m1 -1v1m1 -1v1m1 -1v2m1 -2v2m1 -2v1m1 -2v2m1 -1v1m1 -1v2m1 -2v2m1 -3v2m1 -2v2m1 -1v1m1 -1v1m1 -1v1m1 -1v1m1 -2v2m1 -2v2m1 -1v2m1 -2v2m1 -2v1m1 -1v1m1 -1v1m1 -1v1m1 -1v1m1 -1v1m1 -1v1m1 -2v2m1 -1v1m1 -1v2m1 -2v2m1 -3v2m1 -2v2m1 -1v1m1 -1v1m1 -1v1m1 -1v1m1 -1v1m1 -1v1m1 -1v1m1 -1v1m1 -1v1m1 -1v1m1 -1v1m1 -1v2m1 -2v2m1 -2v1m1 -2v2m1 -2v2m1 -1v1m1 -1v1m1 -1v1m1 -2v2m1 -2v2m1 -1v2m1 -1v1m1 -2v2m1 -2v1m1 -2v2m1 -2v2m1 -1v2m1 -1v1m1 -2v2m1 -2v1m1 -1v1m1 -1v1m1 -1v1m1 -1v1m1 -2v2m1 -1v1m1 -1v1m1 -1v1m1 -1v1m1 -2v2m1 -2v2m1 -1v1m1 -1v1m1 -1v1m1 -1v1m1 -2v2m1 -2v2m1 -1v2m1 -2v2m1 -2v1m1 -2v2m1 -2v2m1 -1v1m1 -1v2m1 -2v1m1 -2v2m1 -2v2m1 -1v2m1 -2v2m1 -2v1m1 -2v2m1 -2v2m1 -1v2m1 -2v2m1 -2v1m1 -2v2m1 -2v1m1 -1v2m1 -1v1m1 -1v1m1 -2v2m1 -1v1m1 -1v1m1 -1v2m1 -2v2m1 -2v1m1 -2v2m1 -2v2m1 -1v1m1 -1v1m1 -1v1m1 -1v1m1 -1v1m1 -1v1m1 -1v1m1 -1v1m1 -1v1m1 -2v2m1 -2v2m1 -1v2m1 -2v2m1 -3v2m1 -2v2m1 -1v1m1 -1v2m1 -2v2m1 -2v1m1 -1v1m1 -1v1m1 -1v1m1 -1v2m1 -2v1m1 -2v2m1 -2v2m1 -1v2m1 -1v1m1 -2v2m1 -3v2m1 -2v2m1 -1v1m1 -1v1m1 -2v2m1 -2v1m1 -2v2m1 -1v1m1 -1v1m1 -2v2m1 -2v1m1 -1v1m1 -1v2m1 -1v1m1 -1v1m1 -1v1m1 -1v1m1 -1v1m1 -1v2m1 -1v1m1 -1v1m1 -1v1m1 -1v1m1 -1v1m1 -1v1m1 -1v1m1 -1v1m1 -1v1m1 -1v1m1 -1v2m1 -2v1m1 -2v2m1 -2v2m1 -1v1m1 -1v2m1 -2v2m1 -2v1m1 -2v2m1 -2v2m1 -1v2m1 -2v2m1 -3v2m1 -2v1m1 -1v2m1 -1v1m1 -1v1m1 -1v1m1 -1v1m1 -1v1m1 -1v1m1 -1v2m1 -2v2m1 -2v1m1 -1v1m1 -1v2m1 -1v2m1 -1v1m1 -1v1m1 -1v1m1 -2v2m1 -2v1m1 -2v2m1 -2v2m1 -1v1m1 -1v1m1 -2v2m1 -2v1m1 -2v2m1 -2v2m1 -1v1m1 -1v2m1 -2v2m1 -2v1m1 -1v1m1 -2v2m1 -2v2m1 -1v1m1 -1v2m1 -2v2m1 -2v1m1 -1v1m1 -2v2m1 -2v2m1 -1v1m1 -1v2m1 -2v2m1 -2v1m1 -1v1m1 -2v2m1 -2v2m1 -1v1m1 -1v2m1 -2v2m1 -2v1m1 -1v1m1 -2v2m1 -2v2m1 -1v1m1 -1v2m1 -2v2m1 -2v1m1 -1v1m1 -2v2m1 -2v2m1 -1v1m1 -1v2m1 -2v2m1 -2v1m1 -1v1m1 -2v2m1 -2v2m1 -1v1m1 -1v2m1 -2v2m1 -2v1m1 -1v1m1 -2v2m1 -2v2m1 -1v1m1 -1v2m1 -2v2m1 -2v1m1 -1v1m1 -2v2m1 -2v2m1 -1v1m1 -1v2m1 -2v2m1 -2v1m1 -1v1m1 -2v2m1 -2v2m1 -1v1m1 -1v2m1 -2v2m1 -2v1m1 -1v1m1 -2v2m1 -2v2m1 -1v1m1 -1v2m1 -2v2m1 -2v1m1 -1v1m1 -2v2m1 -2v2m1 -1v1m1 -1v2m1 -2v2m1 -2v1m1 -1v1m1 -2v2m1 -2v2m1 -1v1m1 -1v2m1 -2v2m1 -2v1m1 -1v1m1 -2v2m1 -2v2m1 -1v1m1 -1v2m1 -2v2m1 -2v1m1 -1v1m1 -2v2m1 -2v2m1 -1v1m1 -1v2m1 -2v2m1 -2v1m1 -1v1m1 -2v2m1 -2v2m1 -1v1m1 -1v2m1 -2v2m1 -2v1m1 -1v1m1 -2v2m1 -2v2m1 -1v1m1 -1v2m1 -2v2m1 -2v1m1 -1v1m1 -2v2m1 -2v2m1 -1v1m1 -1v2m1 -2v2m1 -2v1m1 -1v1m1 -2v2m1 -2v2m1 -1v1m1 -1v2m1 -2v2m1 -2v1m1 -1v1m1 -2v2m1 -2v2m1 -1v1m1 -1v2m1 -2v2m1 -2v1m1 -1v1m1 -2v2m1 -2v2m1 -1v1m1 -1v2m1 -2v2m1 -2v1m1 -1v1m1 -2v2m1 -2v2m1 -1v1m1 -1v2m1 -2v2m1 -2v1m1 -1v1m1 -2v2m1 -2v2m1 -1v1m1 -1v2m1 -2v2m1 -2v1m1 -1v1m1 -2v2m1 -2v2m1 -1v1m1 -1v2m1 -2v2m1 -2v1m1 -1v1m1 -2v2m1 -2v2m1 -1v1m1 -1v2m1 -2v2m1 -2v1m1 -1v1m1 -2v2m1 -2v2m1 -1v1m1 -1v2m1 -2v2m1 -2v1m1 -1v1m1 -2v2m1 -2v2m1 -1v1m1 -1v2m1 -2v2m1 -2v1m1 -1v1m1 -2v2m1 -2v2m1 -1v1m1 -1v1m1 -1v1m1 -2v2m1 -3v2m1 -4v3m1 -5v3m1 -5v3m1 -3v2m1 -1v2m1 -1v3m1 -1v3m1 -1v3m1 -1v2m1 -1v2m1 -1v1m1 -1v2m1 -1v2m1 -1v1m1 -2v2m1 -2v1m1 -2v2m1 -3v2m1 -2v1m1 -2v2m1 -2v1m1 -1v1m1 -1v1m1 -1v1m1 -1v1m1 -1v1m1 -1v1m1 -1v1m1 -1v1m1 -1v1m1 -1v1m1 -1v1m1 -1v1m1 -1v1m1 -1v1m1 -1v1m1 -1v1m1 -1v1m1 -1v1m1 -1v1m1 -1v1m1 -1v1m1 -1v1m1 -1v1m1 -1v1m1 -1v1m1 -1v1m1 -1v1m1 -1v1m1 -1v1m1 -1v1m1 -1v1m1 -1v1m1 -1v1m1 -1v1m1 -1v1m1 -1v1m1 -1v1m1 -1v1m1 -1v1m1 -1v1m1 -1v1m1 -1v1m1 -1v1m1 -1v1m1 -1v1m1 -1v1m1 -1v1m1 -1v1m1 -1v1m1 -1v1m1 -1v1m1 -1v1m1 -1v1m1 -1v1m1 -1v1m1 -1v1m1 -1v1m1 -1v1m1 -1v1m1 -1v1m1 -1v1m1 -1v1m1 -1v1m1 -1v1m1 -1v1m1 -1v1m1 -1v1m1 -1v1m1 -1v1m1 -1v1m1 -1v1m1 -1v1m1 -1v1m1 -1v1m1 -1v1m1 -1v1m1 -1v1m1 -1v1m1 -1v1m1 -1v1m1 -1v1m1 -1v1m1 -1v1m1 -1v1m1 -1v1m1 -1v1m1 -1v1m1 -1v1m1 -1v1m1 -1v1m1 -1v1m1 -1v1m1 -1v1m1 -1v1m1 -1v1m1 -1v1m1 -1v1m1 -1v1m1 -1v1m1 -1v1m1 -1v1m1 -1v1m1 -1v1m1 -1v1m1 -1v1m1 -1v1m1 -1v1m1 -1v1m1 -1v1m1 -1v1m1 -1v1m1 -1v1m1 -1v1m1 -1v1m1 -1v1m1 -1v1m1 -1v1m1 -1v1m1 -1v1m1 -1v1m1 -1v1m1 -1v1m1 -1v1m1 -1v1m1 -1v1m1 -1v1m1 -1v1m1 -1v1m1 -1v1m1 -1v1m1 -1v1m1 -1v1m1 -1v1m1 -1v1m1 -1v1m1 -1v1m1 -1v1m1 -1v1m1 -1v1m1 -1v1m1 -1v1m1 -1v1m1 -1v1m1 -1v1m1 -1v1m1 -1v1m1 -1v1m1 -1v1m1 -1v1m1 -1v1m1 -1v1m1 -1v1m1 -1v1m1 -1v1m1 -1v1m1 -1v1m1 -1v1m1 -1v1m1 -1v1m1 -1v1m1 -1v1m1 -1v1m1 -1v1m1 -1v1m1 -1v1m1 -1v1m1 -1v1m1 -1v1m1 -1v1m1 -1v1m1 -1v1m1 -1v1m1 -1v1m1 -1v1m1 -1v1m1 -1v1m1 -1v1m1 -1v1m1 -1v1m1 -1v1m1 -1v1m1 -1v1m1 -1v1m1 -1v1m1 -1v1m1 -1v1m1 -1v1m1 -1v1m1 -1v1m1 -1v1m1 -1v1m1 -1v1m1 -1v1m1 -1v1m1 -1v1m1 -1v1m1 -1v1m1 -1v1m1 -1v1m1 -1v1m1 -1v1m1 -1v1m1 -1v1m1 -1v1m1 -1v1m1 -1v1m1 -1v1m1 -1v1m1 -1v1m1 -1v1m1 -1v1m1 -1v1m1 -1v1m1 -1v1m1 -1v1m1 -1v1m1 -1v1m1 -1v1m1 -1v1m1 -1v1m1 -1v1m1 -1v1m1 -1v1m1 -1v1m1 -1v1m1 -1v1m1 -1v1m1 -1v1m1 -1v1m1 -1v1m1 -1v1m1 -1v1m1 -1v1m1 -1v1m1 -1v1m1 -1v1m1 -1v1m1 -1v1m1 -1v1" stroke="#ffff11"/><path d="M33.5 1007v20m1 -57v38m1 -48v11m1 -52v42m1 -66v25m1 -29v5m1 -5v3m1 -1v3m1 -1v2m1 -1v3m1 -1v2m1 -1v3m1 -1v3m1 -1v2m1 -1v3m1 -1v2m1 -1v3m1 -1v3m1 -1v2m1 -1v3m1 -1v2m1 -1v3m1 -1v3m1 -1v2m1 -1v3m1 -1v2m1 -1v3m1 -1v3m1 -1v2m1 -1v3m1 -1v2m1 -1v3m1 -1v3m1 -1v2m1 -1v3m1 -1v2m1 -1v3m1 -1v2m1 -1v1m1 -1v2m1 -2v2m1 -2v1m1 -1v1m1 -1v1m1 -1v1m1 -1v1m1 -1v1m1 -1v1m1 -1v1m1 -1v1m1 -1v1m1 -1v1m1 -1v1m1 -1v1m1 -1v1m1 -1v1m1 -1v1m1 -1v1m1 -1v1m1 -1v1m1 -1v1m1 -1v1m1 -1v1m1 -1v1m1 -1v1m1 -1v1m1 -1v1m1 -1v1m1 -1v1m1 -1v1m1 -1v1m1 -1v1m1 -1v1m1 -1v1m1 -1v1m1 -1v1m1 -1v1m1 -1v1m1 -1v1m1 -1v1m1 -1v1m1 -1v1m1 -1v1m1 -1v1m1 -1v1m1 -1v1m1 -1v1m1 -1v1m1 -1v1m1 -1v1m1 -1v1m1 -1v1m1 -1v1m1 -1v1m1 -1v1m1 -3v3m1 -5v3m1 -5v3m1 -5v3m1 -5v3m1 -3v1m1 -2v2m1 -2v1m1 -2v2m1 -2v1m1 -2v2m1 -2v1m1 -2v2m1 -2v1m1 -2v2m1 -2v1m1 -2v2m1 -2v1m1 -1v1m1 -2v2m1 -2v1m1 -2v2m1 -2v1m1 -1v1m1 -1v1m1 -2v2m1 -2v1m1 -1v1m1 -2v2m1 -2v1m1 -1v1m1 -1v1m1 -2v2m1 -2v1m1 -1v1m1 -1v1m1 -1v1m1 -2v2m1 -2v1m1 -1v1m1 -1v1m1 -2v2m1 -2v1m1 -1v1m1 -1v1m1 -2v2m1 -2v1m1 -1v1m1 -1v1m1 -1v1m1 -2v2m1 -2v1m1 -1v1m1 -1v1m1 -1v1m1 -2v2m1 -2v1m1 -1v1m1 -1v1m1 -1v1m1 -1v1m1 -1v1m1 -1v1m1 -2v2m1 -2v1m1 -1v1m1 -1v1m1 -1v1m1 -1v1m1 -1v1m1 -1v1m1 -1v1m1 -2v2m1 -2v1m1 -1v1m1 -1v1m1 -1v1m1 -1v1m1 -1v1m1 -1v1m1 -1v1m1 -2v2m1 -2v1m1 -1v1m1 -1v1m1 -1v1m1 -1v1m1 -1v1m1 -1v1m1 -2v2m1 -2v1m1 -1v1m1 -1v1m1 -1v1m1 -1v1m1 -1v1m1 -1v1m1 -1v1m1 -1v1m1 -1v1m1 -2v2m1 -2v1m1 -1v1m1 -1v1m1 -1v1m1 -1v1m1 -1v1m1 -1v1m1 -1v1m1 -1v1m1 -1v1m1 -1v1m1 -1v1m1 -2v2m1 -2v1m1 -1v1m1 -1v1m1 -1v1m1 -1v1m1 -1v1m1 -1v1m1 -1v1m1 -1v1m1 -1v1m1 -1v1m1 -1v1m1 -2v2m1 -2v1m1 -1v1m1 -1v1m1 -1v1m1 -1v1m1 -1v1m1 -1v1m1 -1v1m1 -1v1m1 -1v1m1 -1v1m1 -1v1m1 -2v2m1 -2v1m1 -1v1m1 -1v1m1 -1v1m1 -1v1m1 -1v1m1 -1v1m1 -1v1m1 -1v1m1 -1v1m1 -1v1m1 -1v1m1 -1v1m1 -1v1m1 -1v1m1 -1v1m1 -1v1m1 -2v2m1 -2v1m1 -1v1m1 -1v1m1 -1v1m1 -1v1m1 -1v1m1 -1v1m1 -1v1m1 -1v1m1 -1v1m1 -1v1m1 -1v1m1 -1v1m1 -1v1m1 -1v1m1 -1v1m1 -1v1m1 -1v1m1 -1v1m1 -1v1m1 -1v1m1 -1v1m1 -2v2m1 -2v1m1 -1v1m1 -1v1m1 -1v1m1 -1v1m1 -1v1m1 -1v3m1 -2v4m1 -1v4m1 -1v3m1 -1v5m1 -1v5m1 -1v5m1 -1v4m1 -1v2m1 -1v1m1 -3v3m1 -3v2m1 -3v2m1 -2v1m1 -2v2m1 -2v2m1 -3v2m1 -2v1m1 -2v2m1 -1v2m1 -3v2m1 -2v2m1 -2v1m1 -2v2m1 -2v2m1 -2v1m1 -1v1m1 -2v2m1 -2v1m1 -1v1m1 -1v1m1 -1v1m1 -1v1m1 -2v2m1 -2v1m1 -1v1m1 -2v2m1 -2v1m1 -1v2m1 -3v3m1 -3v2m1 -2v2m1 -2v2m1 -2v2m1 -3v2m1 -2v2m1 -2v2m1 -2v2m1 -3v3m1 -3v2m1 -2v1m1 -1v2m1 -3v2m1 -2v2m1 -1v1m1 -1v1m1 -2v2m1 -2v2m1 -3v2m1 -2v1m1 -1v1m1 -1v1m1 -1v2m1 -2v2m1 -2v1m1 -2v2m1 -2v2m1 -2v2m1 -1v1m1 -2v2m1 -2v2m1 -3v2m1 -1v1m1 -1v1m1 -1v2m1 -2v1m1 -2v2m1 -2v1m1 -1v1m1 -2v2m1 -2v2m1 -2v1m1 -1v1m1 -1v1m1 -1v2m1 -2v1m1 -2v2m1 -1v1m1 -1v2m1 -2v1m1 -1v1m1 -2v2m1 -2v2m1 -2v2m1 -2v2m1 -2v2m1 -2v2m1 -2v1m1 -1v1m1 -2v2m1 -2v2m1 -2v1m1 -1v2m1 -2v2m1 -2v2m1 -2v2m1 -1v1m1 -2v2m1 -2v1m1 -1v1m1 -1v2m1 -2v2m1 -3v2m1 -2v1m1 -1v1m1 -1v1m1 -1v2m1 -2v1m1 -1v2m1 -2v1m1 -1v1m1 -2v2m1 -2v3m1 -3v2m1 -1v1m1 -2v2m1 -1v1m1 -1v1m1 -2v2m1 -2v2m1 -1v1m1 -2v2m1 -2v2m1 -3v2m1 -1v2m1 -2v2m1 -2v1m1 -1v1m1 -2v2m1 -1v1m1 -2v2m1 -1v1m1 -2v2m1 -2v1m1 -1v2m1 -2v2m1 -2v2m1 -2v2m1 -2v1m1 -2v2m1 -2v2m1 -1v2m1 -2v1m1 -2v2m1 -1v1m1 -1v2m1 -3v3m1 -3v1m1 -1v2m1 -2v2m1 -2v2m1 -2v2m1 -2v2m1 -2v2m1 -2v1m1 -1v1m1 -1v2m1 -2v2m1 -2v1m1 -1v2m1 -1v1m1 -2v2m1 -2v1m1 -1v1m1 -1v2m1 -3v2m1 -2v2m1 -1v2m1 -3v2m1 -1v1m1 -2v2m1 -2v2m1 -2v2m1 -2v2m1 -1v1m1 -2v2m1 -2v1m1 -1v1m1 -1v2m1 -2v2m1 -1v1m1 -2v2m1 -3v2m1 -1v2m1 -2v2m1 -2v1m1 -1v1m1 -2v2m1 -2v2m1 -1v2m1 -2v2m1 -2v1m1 -2v2m1 -1v1m1 -1v1m1 -1v2m1 -2v1m1 -2v2m1 -1v2m1 -2v2m1 -3v2m1 -2v2m1 -1v1m1 -1v1m1 -2v2m1 -2v2m1 -2v2m1 -2v2m1 -2v2m1 -2v2m1 -1v2m1 -2v1m1 -1v1m1 -2v2m1 -2v2m1 -1v1m1 -2v2m1 -2v1m1 -1v2m1 -2v2m1 -2v2m1 -2v2m1 -2v2m1 -2v2m1 -3v2m1 -2v2m1 -1v2m1 -2v2m1 -3v2m1 -2v3m1 -2v2m1 -2v1m1 -2v3m1 -3v2m1 -1v1m1 -1v1m1 -2v2m1 -1v2m1 -2v1m1 -1v2m1 -2v1m1 -2v2m1 -2v2m1 -1v2m1 -3v2m1 -2v3m1 -2v1m1 -2v2m1 -2v1m1 -1v1m1 -1v1m1 -1v2m1 -2v2m1 -2v1m1 -1v2m1 -1v1m1 -1v1m1 -2v2m1 -2v1m1 -1v1m1 -1v1m1 -1v2m1 -3v3m1 -3v2m1 -1v2m1 -2v2m1 -2v1m1 -1v2m1 -3v2m1 -2v3m1 -3v2m1 -2v2m1 -2v2m1 -1v1m1 -1v2m1 -2v1m1 -2v2m1 -2v2m1 -1v1m1 -2v2m1 -2v2m1 -2v2m1 -2v2m1 -2v1m1 -1v2m1 -1v1m1 -2v2m1 -2v2m1 -1v1m1 -1v1m1 -2v2m1 -2v2m1 -1v1m1 -2v2m1 -2v2m1 -1v1m1 -1v1m1 -1v1m1 -2v2m1 -2v2m1 -2v2m1 -2v2m1 -2v1m1 -1v1m1 -1v2m1 -1v1m1 -1v1m1 -2v2m1 -2v2m1 -2v2m1 -1v1m1 -2v2m1 -2v1m1 -1v2m1 -2v2m1 -1v1m1 -1v1m1 -1v1m1 -2v2m1 -2v2m1 -2v2m1 -2v1m1 -1v2m1 -1v1m1 -1v1m1 -2v2m1 -2v1m1 -1v1m1 -1v2m1 -2v2m1 -2v1m1 -1v2m1 -2v1m1 -1v2m1 -2v2m1 -2v2m1 -2v1m1 -1v1m1 -1v1m1 -1v2m1 -1v1m1 -2v2m1 -2v2m1 -2v2m1 -3v2m1 -1v1m1 -1v1m1 -1v1m1 -1v2m1 -2v2m1 -2v2m1 -1v1m1 -2v2m1 -2v2m1 -2v2m1 -2v2m1 -2v1m1 -2v2m1 -2v2m1 -1v2m1 -2v1m1 -1v1m1 -1v2m1 -3v2m1 -2v2m1 -2v1m1 -1v2m1 -1v2m1 -3v3m1 -3v2m1 -1v2m1 -2v1m1 -1v2m1 -3v3m1 -3v3m1 -2v2m1 -2v1m1 -2v2m1 -2v2m1 -2v3m1 -2v2m1 -3v2m1 -2v3m1 -3v2m1 -1v2m1 -3v3m1 -3v2m1 -1v1m1 -1v1m1 -1v1m1 -1v2m1 -3v3m1 -2v2m1 -2v1m1 -1v1m1 -1v1m1 -1v1m1 -1v2m1 -3v2m1 -1v1m1 -1v1m1 -1v1m1 -1v1m1 -2v2m1 -2v2m1 -1v1m1 -2v2m1 -2v2m1 -1v1m1 -1v1m1 -2v2m1 -1v1m1 -1v1m1 -1v1m1 -1v1m1 -1v1m1 -1v1m1 -2v2m1 -2v2m1 -2v3m1 -2v2m1 -3v2m1 -2v2m1 -1v2m1 -2v1m1 -1v1m1 -1v1m1 -1v2m1 -3v3m1 -3v2m1 -1v1m1 -2v2m1 -1v2m1 -2v2m1 -2v1m1 -1v2m1 -2v1m1 -1v1m1 -2v2m1 -1v1m1 -1v2m1 -3v2m1 -1v1m1 -1v1m1 -1v2m1 -2v2m1 -2v2m1 -2v1m1 -2v2m1 -2v2m1 -1v1m1 -2v3m1 -3v2m1 -1v1m1 -1v2m1 -2v2m1 -2v1m1 -1v2m1 -2v2m1 -3v2m1 -1v1m1 -1v1m1 -1v1m1 -1v2m1 -1v1m1 -2v2m1 -2v1m1 -1v1m1 -2v2m1 -2v2m1 -1v1m1 -1v1m1 -2v2m1 -1v2m1 -2v1m1 -1v2m1 -2v2m1 -2v1m1 -2v2m1 -2v1m1 -1v2m1 -1v1m1 -1v1m1 -2v2m1 -2v1m1 -1v2m1 -1v1m1 -1v1m1 -1v1m1 -1v1m1 -1v1m1 -1v1m1 -2v2m1 -2v2m1 -1v1m1 -1v1m1 -1v1m1 -1v2m1 -1v1m1 -3v3m1 -3v2m1 -1v1m1 -2v2m1 -2v2m1 -1v1m1 -2v3m1 -2v2m1 -2v1m1 -2v3m1 -2v2m1 -3v2m1 -1v2m1 -1v1m1 -2v2m1 -3v2m1 -2v2m1 -2v2m1 -2v2m1 -2v2m1 -1v2m1 -2v2m1 -2v2m1 -2v1m1 -1v1m1 -1v1m1 -1v2m1 -1v1m1 -2v2m1 -2v1m1 -1v2m1 -2v1m1 -1v2m1 -3v2m1 -2v2m1 -1v1m1 -1v1m1 -1v1m1 -2v2m1 -1v1m1 -1v1m1 -1v1m1 -2v2m1 -1v1m1 -1v2m1 -2v1m1 -2v2m1 -2v2m1 -2v2m1 -2v3m1 -2v1m1 -2v3m1 -3v2m1 -2v2m1 -2v2m1 -2v2m1 -1v2m1 -3v2m1 -2v2m1 -2v2m1 -2v2m1 -2v2m1 -2v2m1 -1v2m1 -2v2m1 -2v1m1 -1v1m1 -1v1m1 -1v1m1 -2v2m1 -2v1m1 -1v2m1 -2v3m1 -3v2m1 -2v2m1 -2v3m1 -3v3m1 -3v2m1 -1v1m1 -1v1m1 -1v2m1 -2v1m1 -1v1m1 -1v1m1 -1v1m1 -1v2m1 -3v2m1 -1v2m1 -2v2m1 -3v2m1 -2v2m1 -1v1m1 -1v1m1 -2v2m1 -2v2m1 -1v1m1 -1v1m1 -1v1m1 -1v2m1 -3v3m1 -3v3m1 -3v2m1 -2v3m1 -3v2m1 -2v2m1 -2v3m1 -2v2m1 -3v2m1 -2v3m1 -3v3m1 -2v1m1 -2v3m1 -3v2m1 -1v2m1 -3v2m1 -2v3m1 -2v2m1 -2v2m1 -3v2m1 -1v1m1 -2v3m1 -3v3m1 -2v2m1 -3v2m1 -2v2m1 -1v1m1 -2v2m1 -2v2m1 -2v2m1 -2v2m1 -1v2m1 -2v1m1 -2v2m1 -1v2m1 -3v2m1 -2v3m1 -3v3m1 -3v2m1 -1v2m1 -2v1m1 -2v2m1 -2v2m1 -2v2m1 -1v1m1 -1v1m1 -1v1m1 -1v1m1 -1v2m1 -2v2m1 -2v1m1 -2v2m1 -2v2m1 -2v2m1 -2v1m1 -1v2m1 -1v1m1 -1v2m1 -3v3m1 -3v2m1 -1v2m1 -2v1m1 -2v2m1 -2v2m1 -2v2m1 -1v2m1 -3v2m1 -2v2m1 -2v2m1 -1v2m1 -2v2m1 -3v2m1 -1v2m1 -2v2m1 -3v2m1 -2v2m1 -1v2m1 -3v2m1 -2v3m1 -3v2m1 -1v1m1 -2v2m1 -2v2m1 -1v2m1 -2v2m1 -2v1m1 -2v2m1 -2v2m1 -1v1m1 -1v2m1 -3v2m1 -1v1m1 -1v1m1 -1v2m1 -2v2m1 -2v1m1 -1v1m1 -2v2m1 -2v2m1 -1v1m1 -2v2m1 -1v2m1 -3v2m1 -2v2m1 -2v2m1 -1v2m1 -2v2m1 -2v1m1 -1v1m1 -1v2m1 -2v1m1 -1v2m1 -2v2m1 -3v2m1 -1v2m1 -3v2m1 -1v1m1 -2v3m1 -2v2m1 -2v1m1 -1v2m1 -3v2m1 -2v2m1 -1v2m1 -3v2m1 -2v1m1 -1v2m1 -1v1m1 -1v1m1 -1v1m1 -1v1m1 -2v2m1 -2v2m1 -2v2m1 -2v2m1 -1v1m1 -2v2m1 -1v1m1 -2v2m1 -2v2m1 -1v2m1 -1v1m1 -3v3m1 -2v1m1 -1v2m1 -2v2m1 -3v2m1 -1v2m1 -1v1m1 -2v2m1 -3v2m1 -2v2m1 -2v2m1 -2v2m1 -2v2m1 -1v2m1 -1v1m1 -2v2m1 -3v2m1 -1v1m1 -2v2m1 -2v1m1 -1v1m1 -1v1m1 -1v2m1 -1v1m1 -1v1m1 -1v1m1 -1v2m1 -2v2m1 -3v2m1 -1v1m1 -2v2m1 -2v2m1 -2v2m1 -2v2m1 -1v2m1 -2v2m1 -3v2m1 -2v1m1 -1v3m1 -3v3m1 -3v1m1 -1v1m1 -1v1m1 -1v1m1 -1v2m1 -2v1m1 -1v2m1 -2v2m1 -2v1m1 -1v2m1 -2v2m1 -2v1m1 -1v2m1 -1v1m1 -1v1m1 -1v1m1 -1v1m1 -1v1m1 -2v2m1 -2v2m1 -2v2m1 -2v2m1 -2v2m1 -2v2m1 -1v1m1 -1v1m1 -1v1m1 -1v2m1 -3v3m1 -3v3m1 -3v2m1 -2v2m1 -2v2m1 -1v1m1 -1v1m1 -2v2m1 -2v2m1 -1v1m1 -1v1m1 -2v2m1 -1v2m1 -2v2m1 -2v2m1 -2v2m1 -3v2m1 -2v1m1 -1v2m1 -2v2m1 -1v2m1 -3v2m1 -2v2m1 -1v1m1 -1v2m1 -3v3m1 -3v2m1 -1v1m1 -2v2m1 -2v1m1 -1v2m1 -1v1m1 -1v1m1 -2v3m1 -3v2m1 -2v2m1 -2v2m1 -2v2m1 -1v2m1 -3v3m1 -3v2m1 -2v2m1 -2v2m1 -2v2m1 -2v2m1 -2v2m1 -2v2m1 -1v1m1 -1v1m1 -1v1m1 -2v2m1 -1v1m1 -2v2m1 -2v2m1 -2v1m1 -1v2m1 -1v2m1 -3v2m1 -1v1m1 -2v2m1 -2v2m1 -2v2m1 -2v2m1 -1v1m1 -2v2m1 -2v2m1 -1v1m1 -1v1m1 -2v2m1 -2v1m1 -1v2m1 -1v1m1 -1v2m1 -3v3m1 -3v2m1 -2v3m1 -3v2m1 -2v2m1 -1v2m1 -2v2m1 -3v2m1 -1v2m1 -2v2m1 -2v1m1 -1v1m1 -1v1m1 -1v2m1 -2v1m1 -1v1m1 -2v2m1 -2v2m1 -2v2m1 -2v2m1 -2v2m1 -2v2m1 -2v1m1 -1v2m1 -1v1m1 -2v2m1 -2v1m1 -1v2m1 -1v2m1 -2v1m1 -2v2m1 -2v2m1 -1v1m1 -1v1m1 -1v1m1 -2v2m1 -2v2m1 -1v1m1 -1v1m1 -2v2m1 -2v2m1 -1v2m1 -3v2m1 -2v2m1 -1v2m1 -2v2m1 -3v2m1 -1v2m1 -2v2m1 -2v1m1 -1v1m1 -1v2m1 -2v1m1 -1v2m1 -2v2m1 -3v2m1 -2v2m1 -2v2m1 -2v2m1 -2v3m1 -3v3m1 -3v2m1 -1v2m1 -3v3m1 -3v2m1 -2v2m1 -2v2m1 -1v2m1 -2v2m1 -2v2m1 -3v2m1 -2v1m1 -1v3m1 -2v1m1 -1v2m1 -2v2m1 -2v1m1 -1v1m1 -2v2m1 -2v2m1 -1v1m1 -1v1m1 -1v2m1 -3v3m1 -3v2m1 -1v1m1 -1v1m1 -1v2m1 -3v2m1 -2v2m1 -2v2m1 -1v1m1 -1v1m1 -2v2m1 -2v2m1 -1v1m1 -2v2m1 -2v2m1 -1v1m1 -1v1m1 -2v2m1 -1v1m1 -1v1m1 -1v1m1 -1v1m1 -1v2m1 -3v2m1 -1v1m1 -1v1m1 -1v1m1 -1v1m1 -1v1m1 -2v2m1 -2v2m1 -1v1m1 -1v1m1 -1v1m1 -1v1m1 -2v2m1 -2v1m1 -1v1m1 -1v2m1 -1v2m1 -3v2m1 -2v1m1 -1v2m1 -2v2m1 -1v1m1 -1v1m1 -1v1m1 -2v2m1 -1v1m1 -1v1m1 -2v2m1 -2v2m1 -1v1m1 -2v2m1 -2v2m1 -1v1m1 -1v1m1 -1v1m1 -2v2m1 -2v2m1 -1v1m1 -1v1m1 -2v2m1 -2v2m1 -1v1m1 -1v2m1 -3v2m1 -1v1m1 -1v2m1 -3v3m1 -3v2m1 -1v2m1 -2v1m1 -2v2m1 -2v2m1 -1v1m1 -1v1m1 -2v2m1 -2v2m1 -1v1m1 -1v1m1 -1v2m1 -2v2m1 -3v2m1 -1v1m1 -2v2m1 -2v2m1 -2v2m1 -2v3m1 -2v2m1 -3v3m1 -3v2m1 -2v2m1 -2v1m1 -1v2m1 -1v2m1 -3v2m1 -2v2m1 -1v2m1 -1v1m1 -2v2m1 -2v1m1 -2v2m1 -2v2m1 -1v1m1 -1v1m1 -1v2m1 -3v2m1 -1v1m1 -1v1m1 -2v2m1 -2v2m1 -2v3m1 -2v1m1 -1v1m1 -1v1m1 -1v1m1 -1v1m1 -1v1m1 -2v2m1 -2v1m1 -1v2m1 -1v1m1 -1v1m1 -2v2m1 -2v1m1 -1v1m1 -1v2m1 -1v1m1 -1v1m1 -1v1m1 -1v1m1 -2v2m1 -2v2m1 -2v2m1 -1v2m1 -2v1m1 -1v1m1 -1v2m1 -2v1m1 -1v1m1 -1v2m1 -3v2m1 -2v2m1 -1v1m1 -2v2m1 -1v1m1 -1v1m1 -1v1m1 -1v2m1 -2v1m1 -1v1m1 -1v1m1 -1v2m1 -2v2m1 -3v2m1 -1v2m1 -2v1m1 -2v2m1 -3v2m1 -4v3m1 -5v3m1 -4v2m1 -2v1m1 -2v2m1 -3v2m1 -4v3m1 -3v1m1 -2v2m1 -2v1m1 -2v2m1 -4v3m1 -3v1m1 -1v1m1 -1v1m1 -2v2m1 -4v3m1 -3v1m1 -1v1m1 -1v1m1 -2v2m1 -3v2m1 -2v1m1 -1v1m1 -1v1m1 -2v2m1 -3v2m1 -2v1m1 -1v1m1 -1v1m1 -1v1m1 -2v2m1 -3v2m1 -2v1m1 -1v1m1 -1v1m1 -2v2m1 -2v1m1 -2v2m1 -1v1m1 -1v1m1 -2v2m1 -3v2m1 -2v1m1 -1v2m1 -1v1m1 -2v2m1 -3v2m1 -2v1m1 -1v2m1 -1v1m1 -2v2m1 -3v2m1 -2v1m1 -1v2m1 -1v1m1 -2v2m1 -3v2m1 -2v1m1 -1v2m1 -1v1m1 -1v1m1 -2v2m1 -3v2m1 -2v2m1 -1v1m1 -1v1m1 -2v2m1 -2v1m1 -1v1m1 -1v1m1 -1v1m1 -2v2m1 -2v1m1 -1v1m1 -1v2m1 -1v1m1 -2v2m1 -3v2m1 -2v1m1 -1v2m1 -1v1m1 -2v2m1 -2v1m1 -1v1m1 -1v1m1 -1v2m1 -2v2m1 -3v2m1 -2v1m1 -1v2m1 -1v1m1 -1v1m1 -2v2m1 -2v1m1 -1v1m1 -1v2m1 -2v2m1 -2v1m1 -2v2m1 -2v2m1 -1v1m1 -1v1m1 -2v2m1 -2v1m1 -1v1m1 -1v2m1 -1v1m1 -2v2m1 -3v2m1 -2v2m1 -1v1m1 -1v1m1 -1v1m1 -2v2m1 -2v1m1 -1v2m1 -1v1m1 -2v2m1 -2v1m1 -1v1m1 -1v1m1 -1v2m1 -2v2m1 -2v1m1 -2v2m1 -2v2m1 -1v1m1 -1v1m1 -2v2m1 -2v1m1 -1v2m1 -1v1m1 -1v1m1 -2v2m1 -2v1m1 -1v1m1 -1v2m1 -1v1m1 -2v2m1 -2v1m1 -1v1m1 -1v2m1 -1v1m1 -2v2m1 -3v2m1 -2v2m1 -1v1m1 -1v1m1 -1v1m1 -2v2m1 -2v1m1 -1v2m1 -1v1m1 -1v1m1 -2v2m1 -2v1m1 -1v2m1 -1v1m1 -1v1m1 -2v2m1 -2v1m1 -1v1m1 -1v2m1 -1v1m1 -2v2m1 -2v1m1 -1v1m1 -1v2m1 -1v1m1 -2v2m1 -2v1m1 -1v1m1 -1v2m1 -1v1m1 -2v2m1 -3v2m1 -2v2m1 -1v1m1 -1v2m1 -2v2m1 -3v2m1 -2v1m1 -1v2m1 -1v1m1 -1v1m1 -2v2m1 -2v1m1 -1v2m1 -1v1m1 -1v1m1 -2v2m1 -2v1m1 -1v2m1 -1v1m1 -1v1m1 -2v2m1 -2v1m1 -1v2m1 -1v1m1 -1v1m1 -2v2m1 -1v3m1 -1v4m1 -1v4m1 -1v4m1 -1v3m1 -1v3m1 -1v4m1 -1v4m1 -1v4m1 -2v4m1 -1v3m1 -1v4m1 -1v3m1 -1v4m1 -1v2m1 -1v1m1 -1v2m1 -2v2m1 -2v2m1 -1v1m1 -2v2m1 -2v2m1 -2v2m1 -2v2m1 -2v1m1 -1v2m1 -2v2m1 -2v2m1 -2v2m1 -1v1m1 -2v2m1 -2v2m1 -2v2m1 -1v1m1 -2v2m1 -1v1m1 -2v2m1 -2v2m1 -1v1m1 -2v2m1 -2v2m1 -2v2m1 -1v1m1 -2v2m1 -2v2m1 -2v2m1 -2v2m1 -2v2m1 -2v3m1 -2v2m1 -3v3m1 -3v3m1 -2v2m1 -2v1m1 -1v2m1 -3v2m1 -1v2m1 -3v2m1 -2v2m1 -2v3m1 -3v3m1 -3v3m1 -3v2m1 -2v2m1 -2v3m1 -3v2m1 -1v2m1 -3v3m1 -3v2m1 -2v3m1 -3v3m1 -3v2m1 -1v2m1 -3v3m1 -3v3m1 -3v3m1 -4v2m1 -2v3m1 -2v2m1 -1v2m1 -2v2m1 -2v2m1 -3v2m1 -3v3m1 -2v3m1 -3v3m1 -1v1m1 -2v2m1 -3v2m1 -2v2m1 -3v4m1 -3v3m1 -4v2m1 -1v2m1 -2v3m1 -2v2m1 -3v2m1 -2v1m1 -1v3m1 -3v2m1 -2v2m1 -2v3m1 -4v3m1 -1v1m1 -2v3m1 -4v4m1 -3v3m1 -4v2m1 -2v3m1 -3v3m1 -2v3m1 -3v2m1 -2v3m1 -4v4m1 -3v3m1 -2v2m1 -2v2m1 -2v2m1 -2v2m1 -3v3m1 -3v3m1 -3v3m1 -3v3m1 -2v2m1 -3v2m1 -2v2m1 -2v3m1 -2v2m1 -4v3m1 -2v2m1 -2v2m1 -2v1m1 -1v2m1 -2v3m1 -3v3m1 -3v3m1 -3v2m1 -2v3m1 -3v3m1 -3v3m1 -3v2m1 -1v1m1 -2v3m1 -3v3m1 -3v3m1 -4v3m1 -1v2m1 -3v2m1 -2v2m1 -3v3m1 -2v2m1 -2v2m1 -2v2m1 -2v3m1 -3v2m1 -3v3m1 -2v1m1 -2v2m1 -2v2m1 -1v3m1 -3v3m1 -3v3m1 -2v1m1 -2v2m1 -2v2m1 -1v1m1 -2v3m1 -3v3m1 -3v3m1 -3v3m1 -4v2m1 -2v2m1 -2v2m1 -1v3m1 -4v4m1 -2v2m1 -3v2m1 -3v3m1 -2v3m1 -3v3m1 -3v2m1 -3v3m1 -2v3m1 -2v2m1 -3v3m1 -2v2m1 -3v3m1 -4v4m1 -3v2m1 -2v2m1 -2v3m1 -2v2m1 -3v3m1 -4v4m1 -3v2m1 -3v3m1 -1v2m1 -2v2m1 -1v1m1 -2v2m1 -3v3m1 -3v2m1 -2v3m1 -3v1m1 -1v3m1 -3v2m1 -1v2m1 -3v3m1 -3v3m1 -2v2m1 -3v2m1 -2v2m1 -2v2m1 -2v2m1 -2v2m1 -1v2m1 -2v2m1 -3v3m1 -2v2m1 -2v2m1 -1v1m1 -2v2m1 -3v2m1 -1v1m1 -2v3m1 -4v4m1 -3v3m1 -4v3m1 -3v4m1 -4v4m1 -4v4m1 -3v3m1 -3v3m1 -2v2m1 -3v2m1 -2v3m1 -3v3m1 -3v3m1 -4v3m1 -2v3m1 -3v3m1 -3v2m1 -2v2m1 -1v1m1 -2v3m1 -2v2m1 -2v2m1 -3v2m1 -2v3m1 -4v4m1 -3v2m1 -2v2m1 -3v3m1 -2v2m1 -1v2m1 -2v2m1 -2v2m1 -4v4m1 -3v2m1 -3v2m1 -1v2m1 -2v3m1 -3v2" stroke="#ffff11"/><path d="M33.5 1007v20m1 -57v38m1 -48v11m1 -52v42m1 -66v25m1 -29v5m1 -5v3m1 -1v3m1 -1v2m1 -1v3m1 -1v2m1 -1v3m1 -1v3m1 -1v2m1 -1v3m1 -1v2m1 -1v3m1 -1v3m1 -1v2m1 -1v3m1 -1v2m1 -1v3m1 -1v3m1 -1v2m1 -1v3m1 -1v2m1 -1v3m1 -1v3m1 -1v2m1 -1v3m1 -1v2m1 -1v3m1 -1v3m1 -1v2m1 -1v3m1 -1v2m1 -1v3m1 -1v2m1 -1v1m1 -1v2m1 -2v2m1 -2v1m1 -1v1m1 -1v1m1 -1v1m1 -1v1m1 -1v1m1 -1v1m1 -1v1m1 -1v1m1 -1v1m1 -1v1m1 -1v1m1 -1v1m1 -1v1m1 -1v1m1 -1v1m1 -1v1m1 -1v1m1 -1v1m1 -1v1m1 -1v1m1 -1v1m1 -1v1m1 -1v1m1 -1v1m1 -1v1m1 -1v1m1 -1v1m1 -1v1m1 -1v1m1 -1v1m1 -1v1m1 -1v1m1 -1v1m1 -1v1m1 -1v1m1 -1v1m1 -1v1m1 -1v1m1 -1v1m1 -1v1m1 -1v1m1 -1v1m1 -1v1m1 -1v1m1 -1v1m1 -1v1m1 -1v1m1 -1v1m1 -1v1m1 -1v1m1 -1v1m1 -1v1m1 -1v1m1 -3v3m1 -5v3m1 -5v3m1 -5v3m1 -5v3m1 -3v1m1 -2v2m1 -2v1m1 -2v2m1 -2v1m1 -2v2m1 -2v1m1 -2v2m1 -2v1m1 -2v2m1 -2v1m1 -2v2m1 -2v1m1 -1v1m1 -2v2m1 -2v1m1 -2v2m1 -2v1m1 -1v1m1 -1v1m1 -2v2m1 -2v1m1 -1v1m1 -2v2m1 -2v1m1 -1v1m1 -1v1m1 -2v2m1 -2v1m1 -1v1m1 -1v1m1 -1v1m1 -2v2m1 -2v1m1 -1v1m1 -1v1m1 -2v2m1 -2v1m1 -1v1m1 -1v1m1 -2v2m1 -2v1m1 -1v1m1 -1v1m1 -1v1m1 -2v2m1 -2v1m1 -1v1m1 -1v1m1 -1v1m1 -2v2m1 -2v1m1 -1v1m1 -1v1m1 -1v1m1 -1v1m1 -1v1m1 -1v1m1 -2v2m1 -2v1m1 -1v1m1 -1v1m1 -1v1m1 -1v1m1 -1v1m1 -1v1m1 -1v1m1 -2v2m1 -2v1m1 -1v1m1 -1v1m1 -1v1m1 -1v1m1 -1v1m1 -1v1m1 -1v1m1 -2v2m1 -2v1m1 -1v1m1 -1v1m1 -1v1m1 -1v1m1 -1v1m1 -1v1m1 -2v2m1 -2v1m1 -1v1m1 -1v1m1 -1v1m1 -1v1m1 -1v1m1 -1v1m1 -1v1m1 -1v1m1 -1v1m1 -2v2m1 -2v1m1 -1v1m1 -1v1m1 -1v1m1 -1v1m1 -1v1m1 -1v1m1 -1v1m1 -1v1m1 -1v1m1 -1v1m1 -1v1m1 -2v2m1 -2v1m1 -1v1m1 -1v1m1 -1v1m1 -1v1m1 -1v1m1 -1v1m1 -1v1m1 -1v1m1 -1v1m1 -1v1m1 -1v1m1 -2v2m1 -2v1m1 -1v1m1 -1v1m1 -1v1m1 -1v1m1 -1v1m1 -1v1m1 -1v1m1 -1v1m1 -1v1m1 -1v1m1 -1v1m1 -2v2m1 -2v1m1 -1v1m1 -1v1m1 -1v1m1 -1v1m1 -1v1m1 -1v1m1 -1v1m1 -1v1m1 -1v1m1 -1v1m1 -1v1m1 -1v1m1 -1v1m1 -1v1m1 -1v1m1 -1v1m1 -2v2m1 -2v1m1 -1v1m1 -1v1m1 -1v1m1 -1v1m1 -1v1m1 -1v1m1 -1v1m1 -1v1m1 -1v1m1 -1v1m1 -1v1m1 -1v1m1 -1v1m1 -1v1m1 -1v1m1 -1v1m1 -1v1m1 -1v1m1 -1v1m1 -1v1m1 -1v1m1 -2v2m1 -2v1m1 -1v1m1 -1v1m1 -1v1m1 -1v1m1 -1v1m1 -1v3m1 -1v3m1 -1v3m1 -1v5m1 -1v5m1 -1v4m1 -1v5m1 -1v4m1 -1v2m1 -1v1m1 -2v2m1 -3v2m1 -2v1m1 -2v2m1 -2v1m1 -2v2m1 -3v2m1 -2v1m1 -1v1m1 -1v1m1 -2v2m1 -2v1m1 -1v1m1 -2v2m1 -2v1m1 -1v1m1 -1v1m1 -2v2m1 -2v1m1 -1v1m1 -1v1m1 -2v2m1 -2v1m1 -1v1m1 -1v1m1 -2v2m1 -2v1m1 -1v1m1 -1v1m1 -1v1m1 -2v2m1 -2v1m1 -1v1m1 -1v1m1 -1v1m1 -2v2m1 -2v1m1 -1v1m1 -1v1m1 -2v2m1 -2v1m1 -1v1m1 -1v1m1 -1v1m1 -2v2m1 -2v1m1 -1v1m1 -1v1m1 -1v1m1 -1v1m1 -2v2m1 -2v1m1 -1v1m1 -1v1m1 -1v1m1 -1v1m1 -1v1m1 -1v1m1 -2v2m1 -2v1m1 -1v1m1 -1v1m1 -1v1m1 -1v1m1 -1v1m1 -2v2m1 -2v1m1 -1v1m1 -1v1m1 -1v1m1 -1v1m1 -1v1m1 -1v1m1 -2v2m1 -2v1m1 -1v1m1 -1v1m1 -1v1m1 -1v1m1 -1v1m1 -1v1m1 -1v1m1 -1v1m1 -1v1m1 -2v2m1 -2v1m1 -1v1m1 -1v1m1 -1v1m1 -1v1m1 -1v1m1 -1v1m1 -1v1m1 -1v1m1 -1v1m1 -2v2m1 -2v1m1 -1v1m1 -1v1m1 -1v1m1 -1v1m1 -1v1m1 -1v1m1 -1v1m1 -1v1m1 -1v1m1 -1v1m1 -2v2m1 -2v1m1 -1v1m1 -1v1m1 -1v1m1 -1v1m1 -1v1m1 -1v1m1 -1v1m1 -1v1m1 -1v1m1 -1v1m1 -2v2m1 -2v1m1 -1v1m1 -1v1m1 -1v1m1 -1v1m1 -1v1m1 -1v1m1 -1v1m1 -1v1m1 -1v1m1 -1v1m1 -1v1m1 -1v1m1 -1v1m1 -2v2m1 -2v1m1 -1v1m1 -1v1m1 -1v1m1 -1v1m1 -1v1m1 -1v1m1 -1v1m1 -1v1m1 -1v1m1 -1v1m1 -1v1m1 -1v1m1 -1v1m1 -1v1m1 -1v1m1 -1v1m1 -1v1m1 -1v1m1 -1v1m1 -2v2m1 -2v1m1 -1v1m1 -1v1m1 -1v1m1 -1v1m1 -1v1m1 -1v1m1 -1v1m1 -1v1m1 -1v1m1 -1v1m1 -1v1m1 -1v1m1 -1v1m1 -1v1m1 -1v1m1 -1v1m1 -1v1m1 -1v1m1 -1v1m1 -2v2m1 -2v1m1 -1v1m1 -1v1m1 -1v1m1 -1v1m1 -1v1m1 -1v1m1 -1v1m1 -1v1m1 -1v1m1 -1v1m1 -1v1m1 -1v1m1 -1v1m1 -1v1m1 -1v1m1 -1v1m1 -1v1m1 -1v1m1 -1v1m1 -1v1m1 -1v1m1 -1v1m1 -1v1m1 -1v1m1 -1v1m1 -1v1m1 -1v1m1 -1v1m1 -1v1m1 -1v1m1 -1v1m1 -1v1m1 -1v1m1 -1v1m1 -1v1m1 -1v1m1 -1v1m1 -2v2m1 -2v1m1 -1v1m1 -1v1m1 -1v1m1 -1v1m1 -1v1m1 -1v1m1 -1v1m1 -1v1m1 -1v1m1 -1v1m1 -1v1m1 -1v1m1 -1v1m1 -1v1m1 -1v1m1 -1v1m1 -1v1m1 -1v1m1 -1v1m1 -1v1m1 -1v1m1 -1v1m1 -1v1m1 -1v1m1 -1v1m1 -1v1m1 -1v1m1 -1v1m1 -1v1m1 -1v1m1 -1v1m1 -1v1m1 -1v1m1 -2v2m1 -2v1m1 -1v1m1 -1v1m1 -1v1m1 -1v1m1 -1v1m1 -1v1m1 -1v1m1 -1v1m1 -1v1m1 -1v1m1 -1v1m1 -1v1m1 -1v1m1 -1v1m1 -1v1m1 -1v1m1 -1v1m1 -1v1m1 -1v1m1 -1v1m1 -1v1m1 -1v1m1 -1v1m1 -1v1m1 -1v1m1 -1v1m1 -1v1m1 -1v1m1 -1v1m1 -1v1m1 -1v1m1 -1v1m1 -1v1m1 -1v1m1 -1v1m1 -1v1m1 -1v1m1 -1v1m1 -1v1m1 -1v1m1 -1v1m1 -1v1m1 -1v1m1 -1v1m1 -1v1m1 -1v1m1 -1v1m1 -1v1m1 -1v1m1 -1v1m1 -1v1m1 -1v1m1 -1v1m1 -1v1m1 -1v1m1 -1v1m1 -1v1m1 -2v2m1 -2v1m1 -1v1m1 -1v1m1 -1v1m1 -1v1m1 -1v1m1 -1v1m1 -1v1m1 -1v1m1 -1v1m1 -1v1m1 -1v1m1 -1v1m1 -1v1m1 -1v1m1 -1v1m1 -1v1m1 -1v1m1 -1v1m1 -1v1m1 -1v1m1 -1v1m1 -1v1m1 -1v1m1 -1v1m1 -1v1m1 -1v1m1 -1v1m1 -1v1m1 -1v1m1 -1v1m1 -1v1m1 -1v1m1 -1v1m1 -1v1m1 -1v1m1 -1v1m1 -1v1m1 -1v1m1 -1v1m1 -1v1m1 -1v1m1 -1v1m1 -1v1m1 -1v1m1 -1v1m1 -1v1m1 -1v1m1 -1v1m1 -1v1m1 -1v1m1 -1v1m1 -1v1m1 -1v1m1 -1v1m1 -1v1m1 -1v1m1 -1v1m1 -1v1m1 -1v1m1 -1v1m1 -1v1m1 -1v1m1 -1v1m1 -1v1m1 -1v1m1 -1v1m1 -1v1m1 -1v1m1 -1v1m1 -1v1m1 -1v1m1 -1v1m1 -1v1m1 -1v1m1 -1v1m1 -1v1m1 -1v1m1 -1v1m1 -1v1m1 -1v1m1 -1v1m1 -1v1m1 -1v1m1 -1v1m1 -1v1m1 -1v1m1 -1v1m1 -1v1m1 -1v1m1 -1v1m1 -1v1m1 -1v1m1 -1v1m1 -1v1m1 -1v1m1 -1v1m1 -1v1m1 -1v1m1 -1v1m1 -1v1m1 -1v1m1 -1v1m1 -1v1m1 -1v1m1 -1v1m1 -1v1m1 -1v1m1 -1v1m1 -1v1m1 -1v1m1 -1v1m1 -1v1m1 -1v1m1 -1v1m1 -1v1m1 -1v1m1 -1v1m1 -1v1m1 -1v1m1 -1v1m1 -1v1m1 -1v1m1 -1v1m1 -1v1m1 -1v1m1 -1v1m1 -1v1m1 -1v1m1 -1v1m1 -1v1m1 -1v1m1 -1v1m1 -1v1m1 -1v1m1 -1v1m1 -1v1m1 -1v1m1 -1v1m1 -1v1m1 -1v1m1 -1v1m1 -1v1m1 -1v1m1 -1v1m1 -1v1m1 -1v1m1 -1v1m1 -1v1m1 -1v1m1 -1v1m1 -1v1m1 -1v1m1 -1v1m1 -1v1m1 -1v1m1 -1v1m1 -1v1m1 -1v1m1 -1v1m1 -1v1m1 -1v1m1 -1v1m1 -1v1m1 -1v1m1 -1v1m1 -1v1m1 -1v1m1 -1v1m1 -1v1m1 -1v1m1 -1v1m1 -1v1m1 -1v1m1 -1v1m1 -1v1m1 -1v1m1 -1v1m1 -1v1m1 -1v1m1 -1v1m1 -1v1m1 -1v1m1 -1v1m1 -1v1m1 -1v1m1 -1v1m1 -1v1m1 -1v1m1 -1v1m1 -1v1m1 -1v1m1 -1v1m1 -1v1m1 -1v1m1 -1v1m1 -1v1m1 -1v1m1 -1v1m1 -1v1m1 -1v1m1 -1v1m1 -1v1m1 -1v1m1 -1v1m1 -1v1m1 -1v1m1 -1v1m1 -1v1m1 -1v1m1 -1v1m1 -1v1m1 -1v1m1 -1v1m1 -1v1m1 -1v1m1 -1v1m1 -1v1m1 -1v1m1 -1v1m1 -1v1m1 -1v1m1 -1v1m1 -1v1m1 -1v1m1 -1v1m1 -1v1m1 -1v1m1 -1v1m1 -1v1m1 -1v1m1 -1v1m1 -1v1m1 -1v1m1 -1v1m1 -1v1m1 -1v1m1 -1v1m1 -1v1m1 -1v1m1 -1v1m1 -1v1m1 -1v1m1 -1v1m1 -1v1m1 -1v1m1 -1v1m1 -1v1m1 -1v1m1 -1v1m1 -1v1m1 -1v1m1 -1v1m1 -1v1m1 -1v1m1 -1v1m1 -1v1m1 -1v1m1 -1v1m1 -1v1m1 -1v1m1 -1v1m1 -1v1m1 -1v1m1 -1v1m1 -1v1m1 -1v1m1 -1v1m1 -1v1m1 -1v1m1 -1v1m1 -1v1m1 -1v1m1 -1v1m1 -1v1m1 -1v1m1 -1v1m1 -1v1m1 -1v1m1 -1v1m1 -1v1m1 -1v1m1 -1v1m1 -1v1m1 -1v1m1 -1v1m1 -1v1m1 -1v1m1 -1v1m1 -1v1m1 -1v1m1 -1v1m1 -1v1m1 -1v1m1 -1v1m1 -1v1m1 -1v1m1 -1v1m1 -1v1m1 -1v1m1 -1v1m1 -1v1m1 -1v1m1 -1v1m1 -1v1m1 -1v1m1 -1v1m1 -1v1m1 -1v1m1 -1v1m1 -1v1m1 -1v1m1 -1v1m1 -1v1m1 -1v1m1 -1v1m1 -1v1m1 -1v1m1 -1v1m1 -1v1m1 -1v1m1 -1v1m1 -1v1m1 -1v1m1 -1v1m1 -1v1m1 -1v1m1 -1v1m1 -1v1m1 -1v1m1 -1v1m1 -1v1m1 -1v1m1 -1v1m1 -1v1m1 -1v1m1 -1v1m1 -1v1m1 -1v1m1 -1v1m1 -1v1m1 -1v1m1 -1v1m1 -1v1m1 -1v1m1 -1v1m1 -1v1m1 -1v1m1 -1v1m1 -1v1m1 -1v1m1 -1v1m1 -1v1m1 -1v1m1 -1v1m1 -1v1m1 -1v1m1 -1v1m1 -1v1m1 -1v1m1 -1v1m1 -1v1m1 -1v1m1 -1v1m1 -1v1m1 -1v1m1 -1v1m1 -1v1m1 -1v1m1 -1v1m1 -1v1m1 -1v1m1 -1v1m1 -1v1m1 -1v1m1 -1v1m1 -1v1m1 -1v1m1 -1v1m1 -1v1m1 -1v1m1 -1v1m1 -1v1m1 -1v1m1 -1v1m1 -1v1m1 -1v1m1 -1v1m1 -1v1m1 -1v1m1 -1v1m1 -1v1m1 -1v1m1 -1v1m1 -1v1m1 -1v1m1 -1v1m1 -1v1m1 -1v1m1 -1v1m1 -1v1m1 -1v1m1 -1v1m1 -1v1m1 -1v1m1 -1v1m1 -1v1m1 -1v1m1 -1v1m1 -1v1m1 -1v1m1 -1v1m1 -1v1m1 -1v1m1 -1v1m1 -1v1m1 -1v1m1 -1v1m1 -1v1m1 -1v1m1 -1v1m1 -1v1m1 -1v1m1 -1v1m1 -1v1m1 -1v1m1 -1v1m1 -1v1m1 -1v1m1 -1v1m1 -1v1m1 -1v1m1 -1v1m1 -1v1m1 -1v1m1 -1v1m1 -1v1m1 -1v1m1 -1v1m1 -1v1m1 -1v1m1 -1v1m1 -1v1m1 -1v1m1 -1v1m1 -1v1m1 -1v1m1 -1v1m1 -1v1m1 -1v1m1 -1v1m1 -1v1m1 -1v1m1 -1v1m1 -1v1m1 -1v1m1 -1v1m1 -1v1m1 -1v1m1 -1v1m1 -1v1m1 -1v1m1 -1v1m1 -1v1m1 -1v1m1 -1v1m1 -1v1m1 -1v1m1 -1v1m1 -1v1m1 -1v1m1 -1v1m1 -1v1m1 -1v1m1 -1v1m1 -1v1m1 -1v1m1 -1v1m1 -1v1m1 -1v1m1 -1v1m1 -1v1m1 -1v1m1 -1v1m1 -1v1m1 -1v1m1 -1v1m1 -1v1m1 -1v1m1 -1v1m1 -1v1m1 -1v1m1 -1v1m1 -1v1m1 -1v1m1 -1v1m1 -1v1m1 -1v1m1 -1v1m1 -1v1m1 -1v1m1 -1v1m1 -1v1m1 -1v1m1 -1v1m1 -1v1m1 -1v1m1 -1v1m1 -1v1m1 -1v1m1 -1v1m1 -1v1m1 -1v1m1 -1v1m1 -1v1m1 -1v1m1 -1v1m1 -1v1m1 -1v1m1 -1v1m1 -1v1m1 -1v1m1 -1v1m1 -1v1m1 -1v1m1 -1v1m1 -1v1m1 -1v1m1 -1v1m1 -1v1m1 -1v1m1 -1v1m1 -1v1m1 -1v1m1 -1v1m1 -1v1m1 -1v1m1 -1v1m1 -1v1m1 -1v1m1 -1v1m1 -1v1m1 -1v1m1 -1v1m1 -1v1m1 -1v1m1 -1v1m1 -1v1m1 -1v1m1 -1v1m1 -1v1m1 -1v1m1 -1v1m1 -1v1m1 -1v1m1 -1v1m1 -1v1m1 -1v1m1 -1v1m1 -1v1m1 -1v1m1 -1v1m1 -1v1m1 -1v1m1 -1v1m1 -1v1m1 -1v1m1 -1v1m1 -1v1m1 -1v1m1 -1v1m1 -1v1m1 -1v1m1 -1v1m1 -1v1m1 -1v1m1 -1v1m1 -1v1m1 -1v1m1 -1v1m1 -1v1m1 -1v1m1 -1v1m1 -1v1m1 -1v1m1 -1v1m1 -1v1m1 -1v1m1 -1v1m1 -1v1m1 -1v1m1 -1v1m1 -1v1m1 -1v1m1 -1v1m1 -1v1m1 -1v1m1 -1v1m1 -1v1m1 -1v1m1 -1v1m1 -1v1m1 -1v1m1 -1v1m1 -1v1m1 -1v1m1 -1v1m1 -1v1m1 -1v1m1 -1v1m1 -1v1m1 -1v1m1 -1v1m1 -1v1m1 -1v1m1 -1v1m1 -1v1m1 -1v1m1 -1v1m1 -1v1m1 -1v1m1 -1v1m1 -1v1m1 -1v1m1 -1v1m1 -1v1m1 -1v1m1 -1v1m1 -1v1m1 -1v1m1 -1v1m1 -1v1m1 -1v1m1 -1v1m1 -1v1m1 -1v1m1 -1v1m1 -1v1m1 -1v1m1 -1v1m1 -1v1m1 -1v1m1 -1v1m1 -1v1m1 -1v1m1 -1v1m1 -1v1m1 -1v1m1 -1v1m1 -1v1m1 -1v1m1 -1v1m1 -1v1m1 -1v1m1 -1v1m1 -1v1m1 -1v1m1 -1v1m1 -1v1m1 -1v1m1 -1v1m1 -1v1m1 -1v1m1 -1v1m1 -1v1m1 -1v1m1 -1v1m1 -1v1m1 -1v1m1 -1v1m1 -1v1m1 -1v1m1 -1v1m1 -1v1m1 -1v1m1 -1v1m1 -1v1m1 -1v1m1 -1v1m1 -1v1m1 -1v1m1 -1v1m1 -1v1m1 -1v1m1 -1v1m1 -1v1m1 -1v1m1 -1v1m1 -1v1m1 -1v1m1 -1v1m1 -1v1m1 -1v1m1 -1v1m1 -1v1m1 -1v1m1 -1v1m1 -1v1m1 -1v1m1 -1v1m1 -1v1m1 -1v1m1 -1v1m1 -1v1m1 -1v1m1 -1v1m1 -1v1m1 -1v1m1 -1v1m1 -1v1m1 -1v1m1 -1v1m1 -1v1m1 -1v1m1 -1v1m1 -1v1m1 -1v1m1 -1v1m1 -1v1m1 -1v1m1 -1v1m1 -1v1m1 -1v1m1 -1v1m1 -1v1m1 -1v1m1 -1v1m1 -1v1m1 -1v1m1 -1v1m1 -1v1m1 -1v1m1 -1v1m1 -1v1m1 -1v1m1 -1v1m1 -1v1m1 -1v1m1 -1v1m1 -1v1m1 -1v1m1 -1v1m1 -1v1m1 -1v1m1 -1v1m1 -1v1m1 -1v1m1 -1v1m1 -1v1m1 -1v1m1 -1v1m1 -1v1m1 -1v1m1 -1v1m1 -1v1m1 -1v1m1 -1v1m1 -1v1m1 -1v1m1 -1v1m1 -1v1m1 -1v1m1 -1v1m1 -1v1m1 -1v1m1 -1v1m1 -1v1m1 -1v1m1 -1v1m1 -1v1m1 -1v1m1 -1v1m1 -1v1m1 -1v1m1 -1v1m1 -1v1m1 -1v1m1 -1v1m1 -1v1m1 -1v1m1 -1v1m1 -1v1m1 -1v1m1 -1v1m1 -1v1m1 -1v1m1 -1v1m1 -1v1m1 -1v1m1 -1v1m1 -1v1m1 -1v1m1 -1v1m1 -1v1m1 -1v1m1 -1v1m1 -1v1m1 -1v1m1 -1v1m1 -1v1m1 -1v1m1 -1v1m1 -1v1m1 -1v1m1 -1v1m1 -1v1m1 -1v1m1 -1v1m1 -1v1m1 -1v1m1 -1v1m1 -1v1m1 -1v2m1 -1v2m1 -1v3m1 -1v3m1 -1v2m1 -1v1m1 -2v2m1 -1v2m1 -1v4m1 -1v2m1 -2v2m1 -2v1m1 -1v2m1 -1v4m1 -1v2m1 -2v2m1 -3v2m1 -2v2m1 -1v3m1 -1v3m1 -2v2m1 -3v2m1 -2v1m1 -1v3m1 -1v3m1 -1v2m1 -4v3m1 -3v1m1 -1v3m1 -1v3m1 -1v2m1 -3v2m1 -3v2m1 -2v2m1 -1v4m1 -1v1m1 -3v3m1 -4v2m1 -2v2m1 -1v4m1 -1v2m1 -3v3m1 -4v2m1 -2v1m1 -1v3m1 -1v3m1 -2v2m1 -4v3m1 -3v1m1 -1v3m1 -1v3m1 -2v2m1 -4v3m1 -3v1m1 -1v3m1 -1v3m1 -1v1m1 -3v3m1 -4v2m1 -2v2m1 -1v3m1 -1v2m1 -3v3m1 -4v2m1 -2v2m1 -1v3m1 -1v2m1 -3v3m1 -4v2m1 -3v2m1 -1v3m1 -1v3m1 -3v3m1 -4v2m1 -3v2m1 -2v3m1 -1v3m1 -1v1m1 -3v3m1 -4v2m1 -2v3m1 -1v3m1 -2v2m1 -3v2m1 -4v3m1 -3v3m1 -1v3m1 -1v1m1 -3v3m1 -4v2m1 -2v2m1 -1v3m1 -1v2m1 -3v3m1 -4v2m1 -2v1m1 -1v3m1 -1v2m1 -2v2m1 -4v3m1 -3v1m1 -1v3m1 -1v3m1 -2v2m1 -4v3m1 -4v2m1 -1v2m1 -1v3m1 -1v1m1 -3v3m1 -4v2m1 -2v2m1 -1v3m1 -1v2m1 -3v3m1 -5v3m1 -3v2m1 -1v3m1 -1v2m1 -3v3m1 -4v2m1 -2v1m1 -1v3m1 -1v2m1 -2v2m1 -4v3m1 -3v1m1 -1v3m1 -1v3m1 -2v2m1 -4v3m1 -4v2m1 -2v3m1 -1v3m1 -2v2m1 -4v3m1 -4v2m1 -2v3m1 -1v3m1 -1v1m1 -3v3m1 -4v2m1 -2v1m1 -1v4m1 -1v1m1 -2v2m1 -4v3m1 -3v1m1 -1v3m1 -1v3m1 -3v3m1 -5v3m1 -3v1m1 -1v3m1 -1v3m1 -2v2m1 -4v3m1 -4v2m1 -2v3m1 -1v3m1 -1v1m1 -3v3m1 -5v3m1 -3v3m1 -1v3m1 -1v1m1 -3v3m1 -4v2m1 -2v1m1 -1v4m1 -1v1m1 -2v2m1 -4v3m1 -3v1m1 -1v3m1 -1v2m1 -2v2m1 -4v3m1 -3v1m1 -1v3m1 -1v3m1 -2v2m1 -4v3m1 -4v2m1 -2v3m1 -1v2m1 -1v2m1 -4v3m1 -4v2m1 -2v2m1 -1v3m1 -1v2m1 -3v3m1 -5v3m1 -3v2m1 -1v3m1 -1v2m1 -3v3m1 -5v3m1 -3v2m1 -1v3m1 -1v2m1 -4v3m1 -7v5m1 -7v3m1 -6v4m1 -8v5m1 -10v6m1 -11v6m1 -9v4m1 -5v2m1 -2v1m1 -2v2m1 -4v3m1 -4v2m1 -3v2m1 -4v3m1 -3v1m1 -1v1m1 -2v2m1 -2v1m1 -1v1m1 -1v2m1 -2v1m1 -2v2m1 -3v3m1 -2v2m1 -2v2m1 -3v2m1 -2v1m1 -1v2m1 -2v2m1 -2v2m1 -3v2m1 -2v3m1 -3v3m1 -2v2m1 -3v3m1 -3v2m1 -2v3m1 -3v3m1 -2v2m1 -4v3m1 -2v3m1 -3v3m1 -3v3m1 -2v2m1 -2v2m1 -2v2m1 -4v4m1 -2v2m1 -3v3m1 -3v3m1 -3v3m1 -3v2m1 -2v2m1 -2v1m1 -1v3m1 -2v3m1 -3v2m1 -2v2m1 -3v4m1 -4v3m1 -2v2m1 -3v3m1 -3v3m1 -4v3m1 -2v4m1 -5v4m1 -4v4m1 -3v2m1 -3v3m1 -2v4m1 -5v3m1 -3v4m1 -3v4m1 -5v5m1 -4v2m1 -3v3m1 -1v2m1 -3v2m1 -2v3m1 -1v2m1 -3v3m1 -5v4m1 -4v3m1 -4v3m1 -2v4m1 -4v3m1 -1v2m1 -2v2m1 -3v2m1 -1v3m1 -4v4m1 -2v2m1 -5v5m1 -5v3m1 -3v4m1 -1v1m1 -3v3m1 -2v3m1 -5v5m1 -5v2m1 -3v6m1 -4v4m1 -5v5m1 -4v4m1 -3v3m1 -5v3m1 -3v4m1 -3v4m1 -5v4m1 -4v5m1 -5v4m1 -4v5m1 -5v2m1 -2v1m1 -1v2m1 -2v2m1 -2v4m1 -3v4m1 -4v3m1 -3v3m1 -3v2m1 -2v4m1 -4v3m1 -2v2m1 -2v2m1 -3v2m1 -2v3m1 -3v3m1 -3v3m1 -3v2m1 -3v4m1 -3v4m1 -5v5m1 -5v4m1 -3v4m1 -5v4m1 -4v4m1 -2v3m1 -5v4m1 -3v2m1 -3v5m1 -2v2m1 -4v3m1 -2v3m1 -4v4m1 -5v3m1 -2v3m1 -2v3m1 -5v3m1 -4v5m1 -3v1m1 -2v2m1 -1v3m1 -4v3m1 -3v2m1 -2v5m1 -4v4m1 -5v2m1 -2v4m1 -3v3m1 -3v3m1 -4v4m1 -2v3m1 -5v4m1 -4v4m1 -1v1m1 -4v4m1 -4v4m1 -4v4m1 -2v3m1 -3v2m1 -3v3m1 -4v5m1 -5v4m1 -2v2m1 -2v2m1 -4v4m1 -4v4m1 -4v5m1 -4v3m1 -1v2m1 -3v3m1 -3v3m1 -4v2m1 -3v5m1 -4v4m1 -3v2m1 -4v4m1 -3v2m1 -2v2m1 -2v2m1 -2v4m1 -6v4m1 -3v3m1 -3v4m1 -4v5m1 -6v4m1 -4v4m1 -1v2m1 -4v3m1 -3v2m1 -1v2m1 -3v2m1 -3v6m1 -6v5m1 -4v4m1 -4v3m1 -4v3m1 -2v5m1 -3v3m1 -3v3m1 -5v4m1 -4v4m1 -4v4m1 -3v3m1 -4v3m1 -2v3m1 -4v4m1 -4v5m1 -5v5m1 -4v2m1 -1v3m1 -5v5m1 -5v4m1 -3v3m1 -4v2m1 -1v2m1 -2v2m1 -2v4m1 -4v3m1 -3v2m1 -3v3m1 -3v4m1 -4v3m1 -2v4m1 -5v3m1 -3v3m1 -3v3m1 -1v1m1 -3v4m1 -4v3m1 -3v4m1 -1v2m1 -5v4m1 -3v4m1 -6v5m1 -3v4m1 -5v4m1 -4v4m1 -5v5m1 -2v3m1 -5v4m1 -3v3m1 -3v4m1 -5v4m1 -4v3m1 -3v4m1 -3v3m1 -4v5m1 -5v5m1 -4v3m1 -3v2m1 -2v2m1 -2v3" stroke="#139fff"/></g>
</svg>
<div class="ttl" style="top:88px">Grid voltages [p.u.]</div><div class="yt" style="top:120.5px">1</div><div class="yt" style="top:162.5px">0.5</div><div class="yt" style="top:204.5px">0</div><div class="yt" style="top:247.5px">-0.5</div><div class="yt" style="top:289.5px">-1</div><div class="ttl" style="top:334px">Grid currents [A]</div><div class="yt" style="top:363.5px">100</div><div class="yt" style="top:399.5px">50</div><div class="yt" style="top:436.5px">0</div><div class="yt" style="top:473.5px">-50</div><div class="yt" style="top:509.5px">-100</div><div class="yt" style="top:546.5px">-150</div><div class="ttl" style="top:580px">DC-link voltage [V]</div><div class="yt" style="top:627.5px">400</div><div class="yt" style="top:665.5px">300</div><div class="yt" style="top:704.5px">200</div><div class="yt" style="top:742.5px">100</div><div class="yt" style="top:781.5px">0</div><div class="ttl" style="top:826px">DC-link capacitor voltages [V]</div><div class="yt" style="top:865.5px">250</div><div class="yt" style="top:896.5px">200</div><div class="yt" style="top:927.5px">150</div><div class="yt" style="top:958.5px">100</div><div class="yt" style="top:988.5px">50</div><div class="yt" style="top:1019.5px">0</div><div class="xt" style="left:3px">0</div><div class="xt" style="left:191px">0.2</div><div class="xt" style="left:379px">0.4</div><div class="xt" style="left:567px">0.6</div><div class="xt" style="left:755px">0.8</div><div class="xt" style="left:943px">1</div><div class="xt" style="left:1131px">1.2</div><div class="xt" style="left:1319px">1.4</div><div class="xt" style="left:1507px">1.6</div><div class="xt" style="left:1695px">1.8</div><div class="xt" style="left:1883px">2</div>
</body></html>
